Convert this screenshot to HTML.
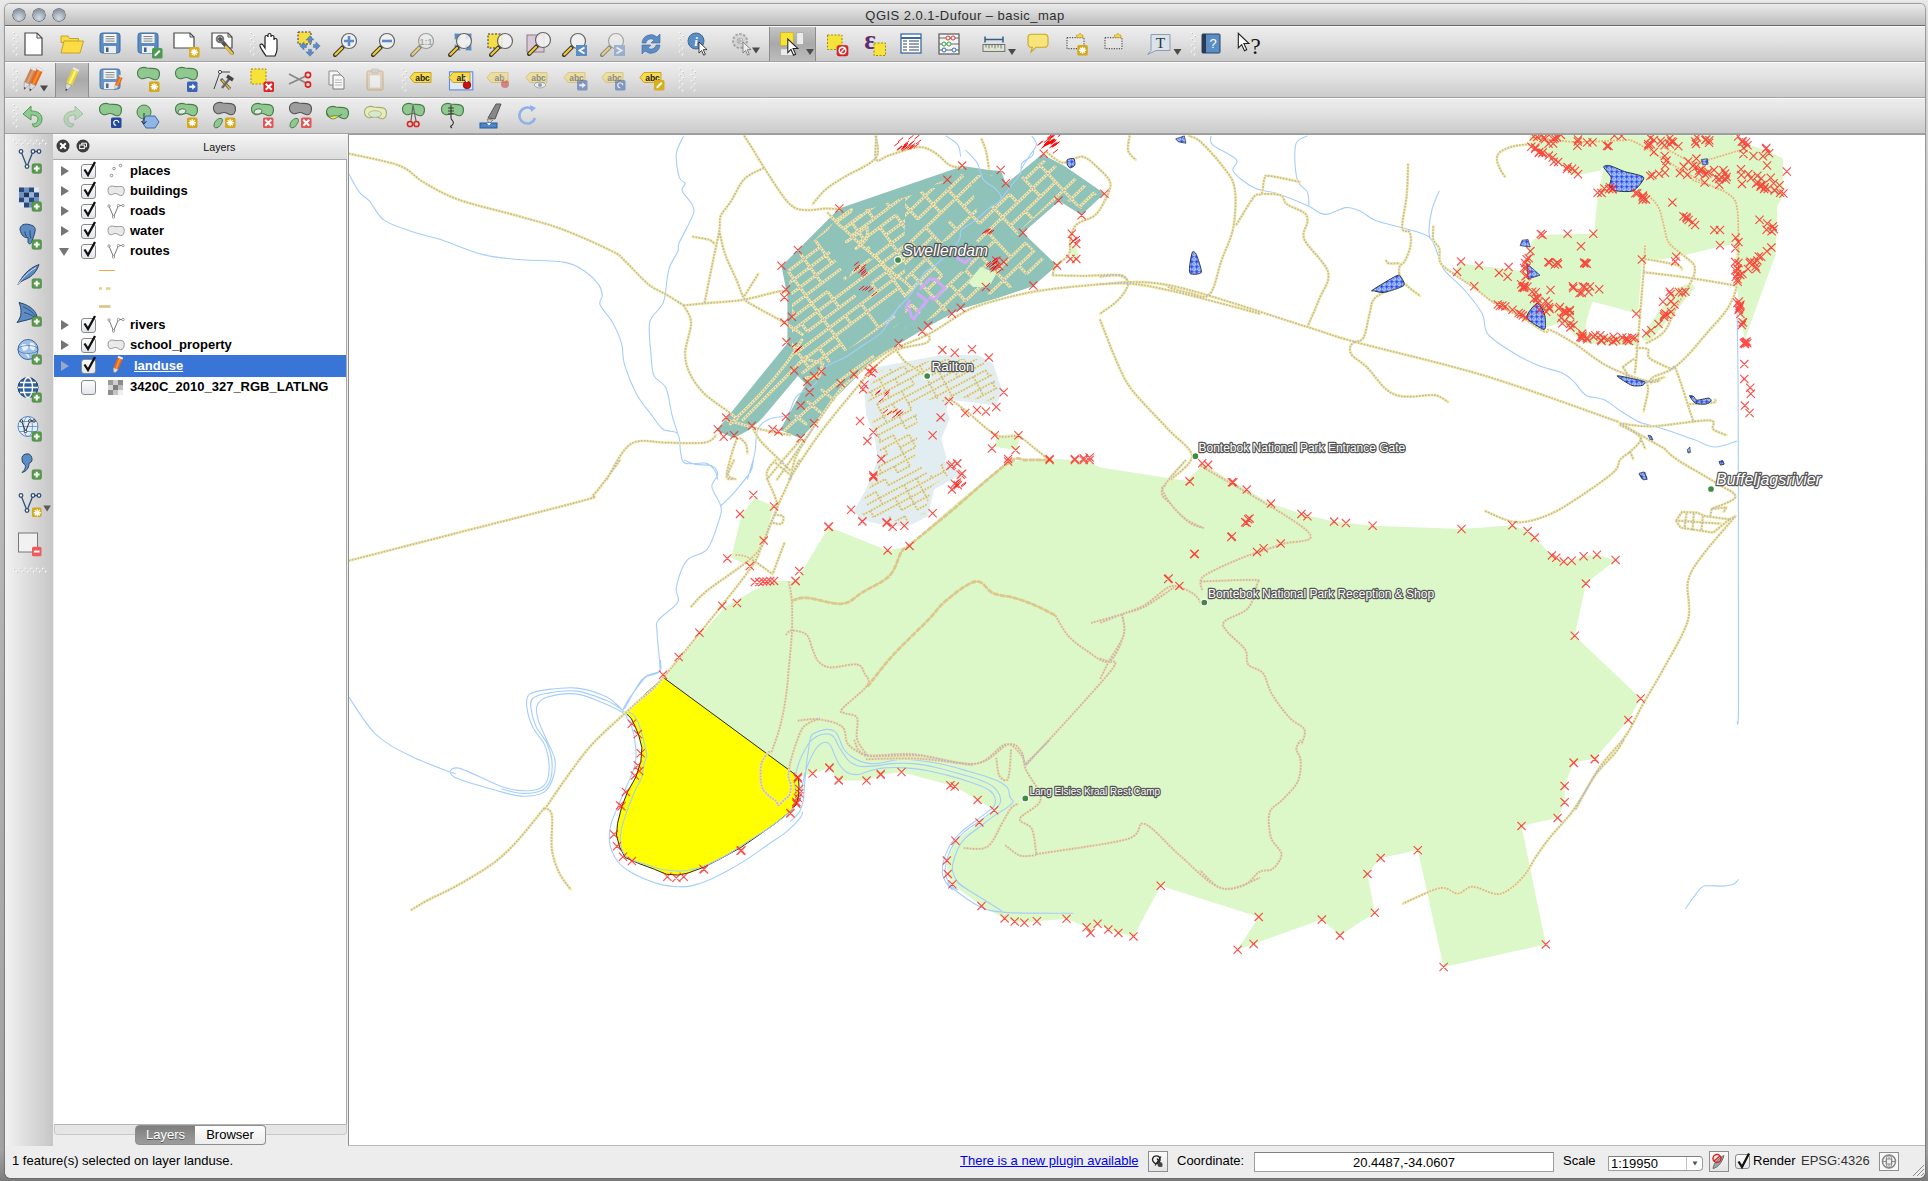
<!DOCTYPE html><html><head><meta charset="utf-8"><title>QGIS 2.0.1-Dufour - basic_map</title><style>
html,body{margin:0;padding:0}
body{width:1928px;height:1181px;overflow:hidden;position:relative;font-family:"Liberation Sans",sans-serif;font-size:13px;color:#000;
 background:linear-gradient(180deg,#e9e9e9 0,#dcdcdc 30px,#b4b4b4 600px,#a2a2a2 1150px,#8c8c8c 1170px,#7b7b7b 1181px)}
.a{position:absolute}
#win{left:5px;top:4px;width:1920px;height:1174px;border-radius:5px 5px 6px 6px;background:#ededed;box-shadow:0 0 1px 1px rgba(90,90,90,.55)}
#title{left:5px;top:4px;width:1920px;height:21px;border-radius:5px 5px 0 0;background:linear-gradient(#ebebeb,#d6d6d6 45%,#bcbcbc);border-bottom:1px solid #6a6a6a}
#title span{position:absolute;left:0;width:100%;text-align:center;top:4px;font-size:13px;color:#2e2e2e;letter-spacing:0.47px}
.tl{width:12px;height:12px;border-radius:50%;top:9px;background:radial-gradient(circle at 50% 75%,#d5dde4 0,#a9b4be 45%,#6e7a86 100%);box-shadow:0 0 0 0.7px #4d565f,0 1px 0 rgba(255,255,255,.5)}
.tb{left:5px;width:1920px;height:34px;background:linear-gradient(#ededed,#e2e2e2 40%,#cbcbcb);border-top:1px solid #fafafa;border-bottom:1px solid #a3a3a3}
.pressed{background:linear-gradient(#c4c4c4,#a9a9a9 50%,#bdbdbd);box-shadow:inset 1px 0 0 #8d8d8d,inset -1px 0 0 #8d8d8d}
#ltb{left:5px;top:134px;width:48px;height:1012px;background:linear-gradient(90deg,#f2f2f2,#dedede 45%,#c6c6c6)}
#lp{left:53px;top:134px;width:295px;height:1012px;background:#ededed}
#lph{left:53px;top:134px;width:294px;height:26px;background:linear-gradient(#f4f4f4,#dcdcdc);border-bottom:1px solid #aaa;border-top:1px solid #fbfbfb;box-sizing:border-box}
#lph span{position:absolute;left:150.300px;top:5.800px;font-size:10.700px;color:#111}
#tree{left:54px;top:160px;width:293px;height:964px;background:#fff;border-right:1px solid #a9a9a9;box-sizing:border-box}
.row{position:absolute;left:0;width:292px;height:20px;font-weight:bold;font-size:13px;line-height:20px}
.row span{position:absolute;left:76px;top:0;white-space:nowrap}
.cb{position:absolute;left:27px;top:3px;width:13px;height:13px;border:1px solid #8a8a8a;border-radius:3px;background:linear-gradient(#fdfdfd,#e3e6ea);box-sizing:content-box}
.tri{position:absolute;left:7px;top:5px;width:0;height:0;border-left:8px solid #757575;border-top:5px solid transparent;border-bottom:5px solid transparent}
.trid{position:absolute;left:5px;top:7px;width:0;height:0;border-top:8px solid #757575;border-left:5px solid transparent;border-right:5px solid transparent}
#tabbase{left:54px;top:1124px;width:293px;height:11px;background:#e5e5e5;border:1px solid #c9c9c9;border-top:1px solid #b5b5b5;border-radius:0 0 4px 4px;box-sizing:border-box}
.tab{top:1125px;height:20px;border:1px solid #8e8e8e;box-sizing:border-box;font-size:13px;line-height:18px;text-align:center}
#mapf{left:348px;top:134px;width:1577px;height:1012px;background:#fff;border-left:1px solid #8f8f8f;border-top:1px solid #9a9a9a;border-bottom:1px solid #b9b9b9;box-sizing:border-box}
#status{left:5px;top:1146px;width:1920px;height:32px;background:#ededed;border-radius:0 0 6px 6px}
.st{top:1153px;font-size:13px;line-height:16px;white-space:nowrap}
.fld{background:#fff;border:1px solid #9d9d9d;border-top-color:#7f7f7f;box-sizing:border-box}
.sbtn{border:1px solid #8e8e8e;background:linear-gradient(#fbfbfb,#e4e4e4);box-sizing:border-box}
svg{position:absolute;overflow:visible}
</style></head><body>
<div class="a" id="win"></div>
<div class="a" id="title"><span>QGIS 2.0.1-Dufour &#8211; basic_map</span></div>
<div class="a tl" style="left:13px"></div>
<div class="a tl" style="left:33px"></div>
<div class="a tl" style="left:53px"></div>
<div class="a tb" style="top:26px"></div>
<div class="a tb" style="top:62px"></div>
<div class="a tb" style="top:98px"></div>
<div class="a pressed" style="left:769px;top:27px;width:47px;height:34px"></div>
<div class="a pressed" style="left:55px;top:63px;width:34px;height:34px"></div>
<div class="a" id="ltb"></div><div class="a" id="lp"></div><div class="a" id="lph"><span>Layers</span></div>
<div class="a" id="tree">
<div class="row" style="top:1px"><i class="tri"></i><i class="cb"></i><svg style="left:26px;top:-2px" width="18" height="20"><path d="M4.500 10.500l3.500 5.500l7-13" fill="none" stroke="#111" stroke-width="2.300" stroke-linejoin="miter"/></svg><svg style="left:52px;top:1px" width="20" height="18"><g fill="#fff" stroke="#777" stroke-width="0.8"><circle cx="8" cy="6.5" r="1.3"/><circle cx="14.5" cy="3.5" r="1.3"/><circle cx="5.5" cy="13.5" r="1.3"/></g></svg><span>places</span></div>
<div class="row" style="top:21px"><i class="tri"></i><i class="cb"></i><svg style="left:26px;top:-2px" width="18" height="20"><path d="M4.500 10.500l3.500 5.500l7-13" fill="none" stroke="#111" stroke-width="2.300" stroke-linejoin="miter"/></svg><svg style="left:52px;top:1px" width="20" height="18"><path d="M2 8.500C2 4 5.500 3.500 9 4.500C12 5.300 14.500 3.500 17 5C19 6.500 18.500 12.500 16 13.500C13.500 14.500 12 11.500 9.500 11.500C7 11.500 6 13.500 4 12.500C2.500 11.700 2 10.500 2 8.500Z" fill="#e9e9e9" stroke="#8c8c8c" stroke-width="0.9"/></svg><span>buildings</span></div>
<div class="row" style="top:41px"><i class="tri"></i><i class="cb"></i><svg style="left:26px;top:-2px" width="18" height="20"><path d="M4.500 10.500l3.500 5.500l7-13" fill="none" stroke="#111" stroke-width="2.300" stroke-linejoin="miter"/></svg><svg style="left:52px;top:1px" width="20" height="18"><path d="M3 4l4.500 11l5-11.500h4.500" fill="none" stroke="#666" stroke-width="0.9"/><g fill="#fff" stroke="#777" stroke-width="0.7"><circle cx="3" cy="4" r="1.2"/><circle cx="7.500" cy="15" r="1.2"/><circle cx="12.500" cy="3.500" r="1.200"/><circle cx="17" cy="3.500" r="1.200"/></g></svg><span>roads</span></div>
<div class="row" style="top:61px"><i class="tri"></i><i class="cb"></i><svg style="left:26px;top:-2px" width="18" height="20"><path d="M4.500 10.500l3.500 5.500l7-13" fill="none" stroke="#111" stroke-width="2.300" stroke-linejoin="miter"/></svg><svg style="left:52px;top:1px" width="20" height="18"><path d="M2 8.500C2 4 5.500 3.500 9 4.500C12 5.300 14.500 3.500 17 5C19 6.500 18.500 12.500 16 13.500C13.500 14.500 12 11.500 9.500 11.500C7 11.500 6 13.500 4 12.500C2.500 11.700 2 10.500 2 8.500Z" fill="#e9e9e9" stroke="#8c8c8c" stroke-width="0.9"/></svg><span>water</span></div>
<div class="row" style="top:81px"><i class="trid"></i><i class="cb"></i><svg style="left:26px;top:-2px" width="18" height="20"><path d="M4.500 10.500l3.500 5.500l7-13" fill="none" stroke="#111" stroke-width="2.300" stroke-linejoin="miter"/></svg><svg style="left:52px;top:1px" width="20" height="18"><path d="M3 4l4.500 11l5-11.500h4.500" fill="none" stroke="#666" stroke-width="0.9"/><g fill="#fff" stroke="#777" stroke-width="0.7"><circle cx="3" cy="4" r="1.2"/><circle cx="7.500" cy="15" r="1.2"/><circle cx="12.500" cy="3.500" r="1.200"/><circle cx="17" cy="3.500" r="1.200"/></g></svg><span>routes</span></div>
<div class="row" style="top:155px"><i class="tri"></i><i class="cb"></i><svg style="left:26px;top:-2px" width="18" height="20"><path d="M4.500 10.500l3.500 5.500l7-13" fill="none" stroke="#111" stroke-width="2.300" stroke-linejoin="miter"/></svg><svg style="left:52px;top:1px" width="20" height="18"><path d="M3 4l4.500 11l5-11.500h4.500" fill="none" stroke="#666" stroke-width="0.9"/><g fill="#fff" stroke="#777" stroke-width="0.7"><circle cx="3" cy="4" r="1.2"/><circle cx="7.500" cy="15" r="1.2"/><circle cx="12.500" cy="3.500" r="1.200"/><circle cx="17" cy="3.500" r="1.200"/></g></svg><span>rivers</span></div>
<div class="row" style="top:175px"><i class="tri"></i><i class="cb"></i><svg style="left:26px;top:-2px" width="18" height="20"><path d="M4.500 10.500l3.500 5.500l7-13" fill="none" stroke="#111" stroke-width="2.300" stroke-linejoin="miter"/></svg><svg style="left:52px;top:1px" width="20" height="18"><path d="M2 8.500C2 4 5.500 3.500 9 4.500C12 5.300 14.500 3.500 17 5C19 6.500 18.500 12.500 16 13.500C13.500 14.500 12 11.500 9.500 11.500C7 11.500 6 13.500 4 12.500C2.500 11.700 2 10.500 2 8.500Z" fill="#e9e9e9" stroke="#8c8c8c" stroke-width="0.9"/></svg><span>school_property</span></div>
<svg style="left:0;top:0" width="293" height="160"><path d="M45 110.500h16" stroke="#f3a73c" stroke-width="1"/><path d="M45 128.500h3M52 128.500h4.500" stroke="#e4cf8a" stroke-width="2.400"/><path d="M45 146.500h11.500" stroke="#dcc486" stroke-width="2.600"/></svg>
<div class="row" style="top:195px;height:22px;background:#3875d7;color:#fff;line-height:21px"><i class="tri" style="top:6px;border-left-color:#97a9c9"></i><i class="cb" style="top:4px"></i><svg style="left:26px;top:-1px" width="18" height="20"><path d="M4.500 10.500l3.500 5.500l7-13" fill="none" stroke="#111" stroke-width="2.300"/></svg><svg style="left:54px;top:1px" width="18" height="20"><g transform="translate(9,10) rotate(22)"><rect x="-2.600" y="-9" width="5.200" height="12" fill="#e8642a"/><rect x="-0.800" y="-9" width="1.800" height="12" fill="#f59a1c"/><rect x="-2.600" y="-10" width="5.200" height="2" fill="#eee"/><path d="M-2.600 3l2.600 6l2.600-6z" fill="#e4d6c4"/><path d="M-0.900 7l0.900 2l0.900-2z" fill="#333"/></g></svg><span style="left:80px;text-decoration:underline">landuse</span></div>
<div class="row" style="top:217px"><i class="cb"></i><svg style="left:53px;top:2px" width="18" height="18"><rect x="1" y="1" width="5" height="5" fill="#9a9a9a"/><rect x="6" y="1" width="5" height="5" fill="#cfcfcf"/><rect x="11" y="1" width="5" height="5" fill="#8a8a8a"/><rect x="1" y="6" width="5" height="5" fill="#d5d5d5"/><rect x="6" y="6" width="5" height="5" fill="#7e7e7e"/><rect x="11" y="6" width="5" height="5" fill="#bdbdbd"/><rect x="1" y="11" width="5" height="5" fill="#8e8e8e"/><rect x="6" y="11" width="5" height="5" fill="#c4c4c4"/><rect x="11" y="11" width="5" height="5" fill="#efefef"/></svg><span>3420C_2010_327_RGB_LATLNG</span></div>
</div>
<div class="a" id="tabbase"></div>
<div class="a tab" style="left:135px;width:61px;border-radius:4px 0 0 4px;background:linear-gradient(#7d7d7d,#8e8e8e 50%,#9c9c9c);color:#fff;text-shadow:0 1px 0 #555">Layers</div>
<div class="a tab" style="left:195px;width:71px;border-radius:0 4px 4px 0;background:linear-gradient(#fefefe,#ececec);border-left:none;color:#000">Browser</div>
<div class="a" id="mapf"></div>
<svg class="a" style="left:0;top:0" width="1928" height="1181" font-family="Liberation Sans, sans-serif"><defs><clipPath id="mc"><rect x="349" y="135" width="1575.500" height="1010.500"/></clipPath><pattern id="hatch" width="5" height="5" patternUnits="userSpaceOnUse"><rect width="5" height="5" fill="#a4caf8"/><rect x="0.400" y="0.400" width="2.400" height="2.400" fill="#2a3cf2"/><rect x="3.400" y="0.900" width="1" height="1.400" fill="#2a3cf2"/><rect x="0.900" y="3.400" width="1.400" height="1" fill="#2a3cf2"/><rect x="3.400" y="3.400" width="1" height="1" fill="#2a3cf2"/></pattern><clipPath id="g0"><path d="M842 214L905 196L905 318L866 352L845 368L815 385L800 372L792 345L792 296L786 268L800 254Z"/></clipPath><clipPath id="g1"><path d="M905 196L960 174L998 176L1004 192L1043 160L1062 169L1097 194L1081 209L1060 196L1017 233L1050 265L1030 281L996 293L960 303L928 320L905 333Z"/></clipPath><clipPath id="gr"><path d="M880 371L940 359L977 359L990 367L998 390L993 401L946 396L934 455L953 472L932 486L925 513L906 522L879 519L862 515L858 509L869 490L881 460L878 437L869 413L868 389Z"/></clipPath></defs><g clip-path="url(#mc)"><path d="M877.8 367L940 355.2L978.5 355.2L993.3 364L1002.2 390.7L996.3 405.6L948.9 399.6L937 455.9L957.8 470.7L960.7 474.8L934 489.6L928 516.3L907.4 526.7L877.8 523.7L860 519.3L854 510.4L866 489.6L877.8 460L874.8 438L866 414.4L864.4 387.8Z" fill="#e1edf0"/><path d="M663 678L725.2 606.7L753.3 590.4L775.6 580.9L796.3 580.9L828.6 527L887.6 550.4L909.5 545.9L935 522L960 500L1008 461.5L1050 458.5L1088 461L1100 467.4L1186 480.7L1203.7 464.4L1233 482L1246.7 489.6L1271 503.6L1301.5 513.9L1334 521.6L1372.6 525.8L1461.5 529L1512.4 525.2L1527.6 531.1L1534.7 537.6L1551.9 555.4L1563.7 561.6L1571.7 560.7L1583.6 556.3L1596.9 554.8L1615.6 559.9L1585.9 583.6L1574.7 635.7L1640.7 698.5L1628.3 719.9L1594.8 758.7L1573.5 762.8L1564.6 785.9L1564.6 802.2L1557.6 817.9L1521.5 825.9L1545.8 944.4L1443.6 967L1417.8 850.2L1380.7 857.9L1367.4 873.9L1374.8 912.7L1339.9 935.6L1321.8 919.6L1253.6 943.9L1237.6 949.8L1258.7 916.9L1160.7 885.8L1133.5 936.4L1118.4 932.9L1108.3 929.6L1097.6 923.7L1090.5 932.9L1086.7 927.3L1066.5 918.7L1036.9 921.3L1024.4 922.8L1014.7 921.6L1004.6 918.4L981.5 905.9L952.4 884.3L947.7 873.9L946.8 860.6L955.4 840.7L979.4 822.4L994.2 810.2L977.6 799.9L954.8 786.5L950.4 785.3L901.5 772L880.7 774.7L866.5 780.6L838.7 780.6L829.5 768.1L812.6 773.5L797.8 777L789 770Z" fill="#dcf7c8"/><path d="M754.8 497.9L774.1 506.5L759.3 557.8L748.9 565.2L731.1 557.8L741.5 514.8Z" fill="#dcf7c8"/><path d="M996.3 435.2L1020 433.7L1017 450L994.8 447Z" fill="#dcf7c8"/><path d="M1070.4 247L1076.9 246.1L1078.7 260.4L1071.9 261.9Z" fill="#dcf7c8"/><path d="M1529.5 135.3L1733.3 135.3L1744.8 143.3L1767.6 151L1782.9 158.6L1782.9 196.7L1777.1 206.2L1777.1 225.2L1775.2 255.7L1761.9 291.9L1744.8 339.5L1740 316.7L1737.1 288.1L1735.2 244.3L1720 246.6L1676.2 257.2L1644.8 261.4L1641.9 261.4L1638.1 313.8L1592.4 301.4L1586.7 320.5L1584.8 331.9L1611.4 336.7L1636.2 335.7L1640 345.2L1611.4 345.2L1584.8 343.3L1573.3 334.8L1563.8 322.4L1542.9 328.1L1525.7 317.6L1502.9 307.1L1472.4 286.2L1455.2 271.9L1459 263.3L1521.9 271L1525.7 263.3L1529.5 248.1L1533.3 239.5L1546.7 234.8L1592.4 233.8L1594.3 231L1598.1 192.9L1603.8 168.1L1598.1 171L1573.3 175.7L1558.1 163.3L1539 152.9L1529.5 146.2Z" fill="#dcf7c8"/><path d="M1676.2 288.1L1691.4 282.4L1695.2 288.1L1649.5 341.4L1641.9 339.5L1645.7 330Z" fill="#dcf7c8"/><path d="M839 208.5L963 166L989 170L1001 171L1006 184L1042 154.3L1063.7 165.4L1104.4 193.5L1081.5 215L1059.3 201L1023 232.8L1057 265.4L1033.3 286L998 298L960.7 309L928 326.6L898.5 344.3L866 366L839.3 388L814 424.3L800.7 438.6L780 430L806 384L797.8 376L760.7 420L749 430L734 438L716.3 430.7L787.4 343.3L787.4 296L781.5 266.3L797.8 250Z" fill="#8fc2b8"/><path d="M663.3 677.5L795.7 774.9L798.6 778.8L799 786.6L798.6 796.3L795.7 805.1L789.8 811.9L775.2 823.6L755.8 837.2L740.2 847.9L720.7 858.6L703.2 867.4L687.6 873.2L677.9 875.1L666.2 874.2L654.5 869.3L638.9 863.5L625.3 857.6L619.5 846.9L616.5 835.2L617.5 823.6L621.4 808L627.3 792.4L636 776.8L640.9 761.2L641.9 747.6L638.9 735.9L635 726.2L631.2 718.4L625.3 712.6Z" fill="#ffff00" stroke="#111" stroke-width="0.9"/><g clip-path="url(#g0)"><path d="M661.2 266.6L741.1 206.4M773.1 182.3L884.9 98M667.1 274.7L778.9 190.4M794.9 178.4L842.8 142.2M858.8 130.2L890.8 106.1M673 282.8L816.8 174.4M848.7 150.3L896.7 114.2M678.9 290.8L902.5 122.3M684.8 298.9L828.5 190.6M844.5 178.6L876.5 154.5M892.4 142.4L908.4 130.4M690.6 307L770.5 246.8M786.5 234.8L802.5 222.8M818.4 210.7L914.3 138.5M696.5 315.1L712.5 303.1M728.5 291L744.4 279M760.4 267L824.3 218.8M840.3 206.8L920.2 146.6M702.4 323.2L926 154.7M708.3 331.3L724.2 319.3M740.2 307.2L772.2 283.1M788.1 271.1L820.1 247M836.1 235L931.9 162.8M746.1 315.3L937.8 170.9M720 347.5L736 335.4M752 323.4L895.8 215.1M911.7 203L943.7 178.9M725.9 355.6L869.7 247.2M885.7 235.2L949.6 187M731.8 363.7L827.6 291.4M843.6 279.4L955.4 195.1M737.7 371.8L769.6 347.7M785.6 335.6L961.3 203.2M743.5 379.8L791.5 343.7M807.4 331.7L855.4 295.6M871.3 283.5L967.2 211.3M765.4 375.9L973.1 219.4M755.3 396L899.1 287.7M915.1 275.7L947 251.6M963 239.5L979 227.5M761.2 404.1L841.1 343.9M920.9 283.7L952.9 259.7M968.9 247.6L984.8 235.6M767.1 412.2L894.9 315.9M910.8 303.9L958.8 267.8M974.7 255.7L990.7 243.7M772.9 420.3L996.6 251.8M778.8 428.4L810.8 404.3M826.7 392.3L970.5 283.9M986.5 271.9L1002.5 259.9M784.7 436.5L880.5 364.3M896.5 352.2L912.5 340.2M944.4 316.1L960.4 304.1M790.6 444.6L822.5 420.5M838.5 408.5L854.5 396.4M870.5 384.4L966.3 312.2M982.3 300.1L1014.2 276M796.5 452.7L812.4 440.6M828.4 428.6L860.4 404.5M876.3 392.5L1020.1 284.1M802.3 460.8L866.2 412.6M882.2 400.6L1026 292.2M808.2 468.9L856.1 432.7M888.1 408.7L1031.9 300.3M814.1 476.9L989.8 344.5M1005.8 332.5L1037.7 308.4M667.1 274.7L684.8 298.9M690.6 307L772.9 420.3M784.7 436.5L808.2 468.9M694.9 278.8L712.5 303.1M718.4 311.2L741.9 343.5M753.6 359.7L783 400.2M788.9 408.3L806.6 432.5M812.4 440.6L830.1 464.9M693.2 242.5L699.1 250.6M705 258.7L716.7 274.9M722.6 283L734.3 299.1M740.2 307.2L787.3 372M793.1 380L816.6 412.4M822.5 420.5L846 452.9M709.2 230.5L715 238.5M720.9 246.6L732.7 262.8M738.6 270.9L750.3 287.1M756.2 295.2L762.1 303.3M768 311.4L809.1 368M820.9 384.2L850.3 424.6M856.1 432.7L862 440.8M725.1 218.4L731 226.5M736.9 234.6L742.8 242.7M748.7 250.8L795.7 315.5M801.6 323.6L807.4 331.7M819.2 347.9L831 364.1M842.7 380.2L872.1 420.7M741.1 206.4L747 214.5M752.9 222.6L764.6 238.7M776.4 254.9L782.3 263M788.1 271.1L870.5 384.4M876.3 392.5L894 416.8M757.1 194.3L768.9 210.5M774.7 218.6L780.6 226.7M786.5 234.8L821.8 283.3M827.6 291.4L839.4 307.6M845.3 315.7L851.2 323.8M862.9 340L892.3 380.4M898.2 388.5L909.9 404.7M773.1 182.3L831.9 263.2M861.3 303.7L914.2 376.5M920 384.6L925.9 392.7M789 170.3L818.4 210.7M836.1 235L842 243.1M847.8 251.2L853.7 259.3M871.3 283.5L877.2 291.6M900.7 324L906.6 332.1M918.4 348.3L936 372.5M805 158.2L816.8 174.4M822.7 182.5L828.5 190.6M840.3 206.8L846.2 214.9M852 223L863.8 239.1M875.6 255.3L910.8 303.9M922.6 320.1L940.2 344.3M946.1 352.4L957.9 368.6M821 146.2L826.9 154.3M862.1 202.8L873.9 219M879.8 227.1L909.2 267.6M915.1 275.7L932.7 299.9M938.6 308L950.3 324.2M956.2 332.3L973.8 356.6M837 134.2L842.8 142.2M848.7 150.3L889.9 207M895.8 215.1L907.5 231.2M919.3 247.4L948.7 287.9M954.5 296L960.4 304.1M966.3 312.2L983.9 336.4M858.8 130.2L911.7 203M917.6 211.1L929.4 227.3M935.2 235.4L941.1 243.5M952.9 259.7L958.8 267.8M976.4 292L988.2 308.2M999.9 324.4L1005.8 332.5M874.8 118.2L910.1 166.7M927.7 191L933.6 199.1M945.3 215.3L951.2 223.4M957.1 231.4L963 239.5M968.9 247.6L974.7 255.7M980.6 263.8L1021.8 320.5M884.9 98L890.8 106.1M896.7 114.2L914.3 138.5M920.2 146.6L937.8 170.9M943.7 178.9L955.4 195.1M961.3 203.2L990.7 243.7M996.6 251.8L1020.1 284.1" fill="none" stroke="#fbee96" stroke-width="2.8"/><path d="M661.2 266.6L741.1 206.4M773.1 182.3L884.9 98M667.1 274.7L778.9 190.4M794.9 178.4L842.8 142.2M858.8 130.2L890.8 106.1M673 282.8L816.8 174.4M848.7 150.3L896.7 114.2M678.9 290.8L902.5 122.3M684.8 298.9L828.5 190.6M844.5 178.6L876.5 154.5M892.4 142.4L908.4 130.4M690.6 307L770.5 246.8M786.5 234.8L802.5 222.8M818.4 210.7L914.3 138.5M696.5 315.1L712.5 303.1M728.5 291L744.4 279M760.4 267L824.3 218.8M840.3 206.8L920.2 146.6M702.4 323.2L926 154.7M708.3 331.3L724.2 319.3M740.2 307.2L772.2 283.1M788.1 271.1L820.1 247M836.1 235L931.9 162.8M746.1 315.3L937.8 170.9M720 347.5L736 335.4M752 323.4L895.8 215.1M911.7 203L943.7 178.9M725.9 355.6L869.7 247.2M885.7 235.2L949.6 187M731.8 363.7L827.6 291.4M843.6 279.4L955.4 195.1M737.7 371.8L769.6 347.7M785.6 335.6L961.3 203.2M743.5 379.8L791.5 343.7M807.4 331.7L855.4 295.6M871.3 283.5L967.2 211.3M765.4 375.9L973.1 219.4M755.3 396L899.1 287.7M915.1 275.7L947 251.6M963 239.5L979 227.5M761.2 404.1L841.1 343.9M920.9 283.7L952.9 259.7M968.9 247.6L984.8 235.6M767.1 412.2L894.9 315.9M910.8 303.9L958.8 267.8M974.7 255.7L990.7 243.7M772.9 420.3L996.6 251.8M778.8 428.4L810.8 404.3M826.7 392.3L970.5 283.9M986.5 271.9L1002.5 259.9M784.7 436.5L880.5 364.3M896.5 352.2L912.5 340.2M944.4 316.1L960.4 304.1M790.6 444.6L822.5 420.5M838.5 408.5L854.5 396.4M870.5 384.4L966.3 312.2M982.3 300.1L1014.2 276M796.5 452.7L812.4 440.6M828.4 428.6L860.4 404.5M876.3 392.5L1020.1 284.1M802.3 460.8L866.2 412.6M882.2 400.6L1026 292.2M808.2 468.9L856.1 432.7M888.1 408.7L1031.9 300.3M814.1 476.9L989.8 344.5M1005.8 332.5L1037.7 308.4M667.1 274.7L684.8 298.9M690.6 307L772.9 420.3M784.7 436.5L808.2 468.9M694.9 278.8L712.5 303.1M718.4 311.2L741.9 343.5M753.6 359.7L783 400.2M788.9 408.3L806.6 432.5M812.4 440.6L830.1 464.9M693.2 242.5L699.1 250.6M705 258.7L716.7 274.9M722.6 283L734.3 299.1M740.2 307.2L787.3 372M793.1 380L816.6 412.4M822.5 420.5L846 452.9M709.2 230.5L715 238.5M720.9 246.6L732.7 262.8M738.6 270.9L750.3 287.1M756.2 295.2L762.1 303.3M768 311.4L809.1 368M820.9 384.2L850.3 424.6M856.1 432.7L862 440.8M725.1 218.4L731 226.5M736.9 234.6L742.8 242.7M748.7 250.8L795.7 315.5M801.6 323.6L807.4 331.7M819.2 347.9L831 364.1M842.7 380.2L872.1 420.7M741.1 206.4L747 214.5M752.9 222.6L764.6 238.7M776.4 254.9L782.3 263M788.1 271.1L870.5 384.4M876.3 392.5L894 416.8M757.1 194.3L768.9 210.5M774.7 218.6L780.6 226.7M786.5 234.8L821.8 283.3M827.6 291.4L839.4 307.6M845.3 315.7L851.2 323.8M862.9 340L892.3 380.4M898.2 388.5L909.9 404.7M773.1 182.3L831.9 263.2M861.3 303.7L914.2 376.5M920 384.6L925.9 392.7M789 170.3L818.4 210.7M836.1 235L842 243.1M847.8 251.2L853.7 259.3M871.3 283.5L877.2 291.6M900.7 324L906.6 332.1M918.4 348.3L936 372.5M805 158.2L816.8 174.4M822.7 182.5L828.5 190.6M840.3 206.8L846.2 214.9M852 223L863.8 239.1M875.6 255.3L910.8 303.9M922.6 320.1L940.2 344.3M946.1 352.4L957.9 368.6M821 146.2L826.9 154.3M862.1 202.8L873.9 219M879.8 227.1L909.2 267.6M915.1 275.7L932.7 299.9M938.6 308L950.3 324.2M956.2 332.3L973.8 356.6M837 134.2L842.8 142.2M848.7 150.3L889.9 207M895.8 215.1L907.5 231.2M919.3 247.4L948.7 287.9M954.5 296L960.4 304.1M966.3 312.2L983.9 336.4M858.8 130.2L911.7 203M917.6 211.1L929.4 227.3M935.2 235.4L941.1 243.5M952.9 259.7L958.8 267.8M976.4 292L988.2 308.2M999.9 324.4L1005.8 332.5M874.8 118.2L910.1 166.7M927.7 191L933.6 199.1M945.3 215.3L951.2 223.4M957.1 231.4L963 239.5M968.9 247.6L974.7 255.7M980.6 263.8L1021.8 320.5M884.9 98L890.8 106.1M896.7 114.2L914.3 138.5M920.2 146.6L937.8 170.9M943.7 178.9L955.4 195.1M961.3 203.2L990.7 243.7M996.6 251.8L1020.1 284.1" fill="none" stroke="#b8b8c8" stroke-width="1.7" stroke-dasharray="1.7 1.3"/></g><g clip-path="url(#g1)"><path d="M780.2 256.1L795.3 241.5M810.4 226.9L840.6 197.7M855.7 183.1L976.6 66.4M991.7 51.8L1021.9 22.6M788 264.5L924 133.2M939.1 118.6L1014.7 45.6M795.9 272.9L1022.5 54M818.8 266.7L1045.5 47.9M811.6 289.7L826.7 275.1M856.9 245.9L962.7 143.8M977.8 129.2L1053.3 56.3M834.5 283.5L985.6 137.6M1000.7 123L1046.1 79.3M842.4 291.9L902.8 233.6M917.9 219L963.2 175.2M993.5 146L1023.7 116.9M1053.9 87.7L1069 73.1M835.1 314.9L865.3 285.8M880.4 271.2L986.2 169M1001.3 154.5L1076.8 81.5M858.1 308.8L933.6 235.8M963.8 206.6L1084.7 89.9M850.8 331.8L865.9 317.2M881 302.6L1092.5 98.3M858.6 340.2L873.8 325.6M888.9 311L934.2 267.2M949.3 252.6L964.4 238M979.5 223.5L1009.7 194.3M1024.8 179.7L1100.4 106.7M866.5 348.6L881.6 334M896.7 319.4L911.8 304.8M926.9 290.2L942 275.6M957.1 261.1L1108.2 115.1M874.3 357L904.6 327.8M934.8 298.6L995.2 240.3M1010.3 225.7L1055.6 181.9M1070.7 167.3L1101 138.2M882.2 365.4L987.9 263.3M1018.2 234.1L1108.8 146.6M890 373.8L1026 242.5M1041.1 227.9L1116.6 155M897.9 382.2L973.4 309.3M988.5 294.7L1139.6 148.8M905.7 390.6L1011.5 288.5M1026.6 273.9L1071.9 230.2M1117.2 186.4L1147.4 157.2M913.6 399.1L989.1 326.1M1004.2 311.5L1094.9 224M1125.1 194.8L1155.3 165.6M921.4 407.5L1072.5 261.6M1087.6 247L1163.1 174M929.2 415.9L1171 182.4M937.1 424.3L952.2 409.7M967.3 395.1L1088.2 278.4M1103.3 263.8L1178.8 190.9M960 418.1L1035.6 345.2M1050.7 330.6L1186.7 199.3M952.8 441.1L983 411.9M1013.2 382.8L1028.3 368.2M1058.5 339L1194.5 207.7M960.6 449.5L1081.5 332.8M1096.6 318.2L1202.4 216.1M968.5 457.9L998.7 428.8M1013.8 414.2L1028.9 399.6M1044 385L1210.2 224.5M976.3 466.4L1097.2 349.6M1112.3 335L1202.9 247.5M984.2 474.8L1225.9 241.3M780.2 256.1L795.9 272.9M803.7 281.3L835.1 314.9M858.6 340.2L882.2 365.4M890 373.8L913.6 399.1M921.4 407.5L944.9 432.7M952.8 441.1L960.6 449.5M968.5 457.9L976.3 466.4M795.3 241.5L850.2 300.4M858.1 308.8L928.7 384.5M944.4 401.3L960 418.1M967.9 426.5L999.3 460.2M810.4 226.9L826.1 243.7M834 252.1L841.8 260.5M857.5 277.4L873.2 294.2M881 302.6L888.9 311M896.7 319.4L904.6 327.8M928.1 353.1L959.5 386.7M967.3 395.1L990.8 420.4M1006.5 437.2L1014.4 445.6M833.4 220.7L872.6 262.8M880.4 271.2L888.3 279.6M896.1 288L904 296.4M911.8 304.8L919.7 313.2M943.2 338.5L990.3 388.9M1005.9 405.8L1029.5 431M840.6 197.7L848.5 206.1M856.3 214.5L887.7 248.2M911.2 273.4L966.1 332.3M997.5 365.9L1005.4 374.3M1013.2 382.8L1044.6 416.4M855.7 183.1L863.6 191.5M871.4 199.9L887.1 216.8M910.7 242L942 275.6M949.9 284.1L973.4 309.3M981.3 317.7L1012.6 351.3M1028.3 368.2L1051.9 393.4M870.9 168.5L917.9 219M925.8 227.4L957.1 261.1M965 269.5L980.7 286.3M1004.2 311.5L1035.6 345.2M1043.4 353.6L1074.8 387.2M886 153.9L893.8 162.3M901.7 170.8L940.9 212.8M948.7 221.2L956.6 229.6M964.4 238L987.9 263.3M995.8 271.7L1011.5 288.5M1019.3 296.9L1035 313.8M1042.8 322.2L1074.2 355.8M901.1 139.3L916.8 156.2M924.6 164.6L979.5 223.5M987.4 231.9L1010.9 257.1M1018.7 265.5L1026.6 273.9M1034.4 282.3L1081.5 332.8M1089.3 341.2L1105 358M916.2 124.7L924 133.2M939.7 150L963.2 175.2M971.1 183.6L1018.2 234.1M1026 242.5L1033.8 250.9M1049.5 267.8L1073.1 293M1080.9 301.4L1088.8 309.8M1096.6 318.2L1104.4 326.6M1112.3 335L1120.1 343.5M939.1 118.6L1001.9 185.9M1009.7 194.3L1017.6 202.7M1025.4 211.1L1064.6 253.2M1072.5 261.6L1135.2 328.9M946.4 95.6L962.1 112.4M969.9 120.8L1040.5 196.5M1056.2 213.3L1064.1 221.7M1079.7 238.6L1087.6 247M1095.4 255.4L1111.1 272.2M1126.8 289L1142.5 305.9M961.5 81L985 106.2M992.9 114.6L1000.7 123M1024.3 148.3L1087 215.6M1094.9 224L1157.6 291.3M976.6 66.4L984.5 74.8M1000.1 91.6L1008 100M1015.8 108.4L1086.4 184.2M1094.3 192.6L1180.6 285.1M991.7 51.8L1007.4 68.6M1015.3 77L1038.8 102.3M1054.5 119.1L1101.5 169.6M1109.4 178L1117.2 186.4M1125.1 194.8L1164.3 236.9M1172.1 245.3L1180 253.7M1187.8 262.1L1195.7 270.5M1006.8 37.2L1124.5 163.4M1132.3 171.8L1140.2 180.2M1148 188.6L1155.9 197M1171.6 213.9L1195.1 239.1M1202.9 247.5L1210.8 255.9M1021.9 22.6L1029.8 31M1037.6 39.4L1061.2 64.7M1084.7 89.9L1108.2 115.1M1116.1 123.6L1123.9 132M1131.8 140.4L1139.6 148.8M1163.1 174L1171 182.4M1186.7 199.3L1225.9 241.3" fill="none" stroke="#fbee96" stroke-width="2.8"/><path d="M780.2 256.1L795.3 241.5M810.4 226.9L840.6 197.7M855.7 183.1L976.6 66.4M991.7 51.8L1021.9 22.6M788 264.5L924 133.2M939.1 118.6L1014.7 45.6M795.9 272.9L1022.5 54M818.8 266.7L1045.5 47.9M811.6 289.7L826.7 275.1M856.9 245.9L962.7 143.8M977.8 129.2L1053.3 56.3M834.5 283.5L985.6 137.6M1000.7 123L1046.1 79.3M842.4 291.9L902.8 233.6M917.9 219L963.2 175.2M993.5 146L1023.7 116.9M1053.9 87.7L1069 73.1M835.1 314.9L865.3 285.8M880.4 271.2L986.2 169M1001.3 154.5L1076.8 81.5M858.1 308.8L933.6 235.8M963.8 206.6L1084.7 89.9M850.8 331.8L865.9 317.2M881 302.6L1092.5 98.3M858.6 340.2L873.8 325.6M888.9 311L934.2 267.2M949.3 252.6L964.4 238M979.5 223.5L1009.7 194.3M1024.8 179.7L1100.4 106.7M866.5 348.6L881.6 334M896.7 319.4L911.8 304.8M926.9 290.2L942 275.6M957.1 261.1L1108.2 115.1M874.3 357L904.6 327.8M934.8 298.6L995.2 240.3M1010.3 225.7L1055.6 181.9M1070.7 167.3L1101 138.2M882.2 365.4L987.9 263.3M1018.2 234.1L1108.8 146.6M890 373.8L1026 242.5M1041.1 227.9L1116.6 155M897.9 382.2L973.4 309.3M988.5 294.7L1139.6 148.8M905.7 390.6L1011.5 288.5M1026.6 273.9L1071.9 230.2M1117.2 186.4L1147.4 157.2M913.6 399.1L989.1 326.1M1004.2 311.5L1094.9 224M1125.1 194.8L1155.3 165.6M921.4 407.5L1072.5 261.6M1087.6 247L1163.1 174M929.2 415.9L1171 182.4M937.1 424.3L952.2 409.7M967.3 395.1L1088.2 278.4M1103.3 263.8L1178.8 190.9M960 418.1L1035.6 345.2M1050.7 330.6L1186.7 199.3M952.8 441.1L983 411.9M1013.2 382.8L1028.3 368.2M1058.5 339L1194.5 207.7M960.6 449.5L1081.5 332.8M1096.6 318.2L1202.4 216.1M968.5 457.9L998.7 428.8M1013.8 414.2L1028.9 399.6M1044 385L1210.2 224.5M976.3 466.4L1097.2 349.6M1112.3 335L1202.9 247.5M984.2 474.8L1225.9 241.3M780.2 256.1L795.9 272.9M803.7 281.3L835.1 314.9M858.6 340.2L882.2 365.4M890 373.8L913.6 399.1M921.4 407.5L944.9 432.7M952.8 441.1L960.6 449.5M968.5 457.9L976.3 466.4M795.3 241.5L850.2 300.4M858.1 308.8L928.7 384.5M944.4 401.3L960 418.1M967.9 426.5L999.3 460.2M810.4 226.9L826.1 243.7M834 252.1L841.8 260.5M857.5 277.4L873.2 294.2M881 302.6L888.9 311M896.7 319.4L904.6 327.8M928.1 353.1L959.5 386.7M967.3 395.1L990.8 420.4M1006.5 437.2L1014.4 445.6M833.4 220.7L872.6 262.8M880.4 271.2L888.3 279.6M896.1 288L904 296.4M911.8 304.8L919.7 313.2M943.2 338.5L990.3 388.9M1005.9 405.8L1029.5 431M840.6 197.7L848.5 206.1M856.3 214.5L887.7 248.2M911.2 273.4L966.1 332.3M997.5 365.9L1005.4 374.3M1013.2 382.8L1044.6 416.4M855.7 183.1L863.6 191.5M871.4 199.9L887.1 216.8M910.7 242L942 275.6M949.9 284.1L973.4 309.3M981.3 317.7L1012.6 351.3M1028.3 368.2L1051.9 393.4M870.9 168.5L917.9 219M925.8 227.4L957.1 261.1M965 269.5L980.7 286.3M1004.2 311.5L1035.6 345.2M1043.4 353.6L1074.8 387.2M886 153.9L893.8 162.3M901.7 170.8L940.9 212.8M948.7 221.2L956.6 229.6M964.4 238L987.9 263.3M995.8 271.7L1011.5 288.5M1019.3 296.9L1035 313.8M1042.8 322.2L1074.2 355.8M901.1 139.3L916.8 156.2M924.6 164.6L979.5 223.5M987.4 231.9L1010.9 257.1M1018.7 265.5L1026.6 273.9M1034.4 282.3L1081.5 332.8M1089.3 341.2L1105 358M916.2 124.7L924 133.2M939.7 150L963.2 175.2M971.1 183.6L1018.2 234.1M1026 242.5L1033.8 250.9M1049.5 267.8L1073.1 293M1080.9 301.4L1088.8 309.8M1096.6 318.2L1104.4 326.6M1112.3 335L1120.1 343.5M939.1 118.6L1001.9 185.9M1009.7 194.3L1017.6 202.7M1025.4 211.1L1064.6 253.2M1072.5 261.6L1135.2 328.9M946.4 95.6L962.1 112.4M969.9 120.8L1040.5 196.5M1056.2 213.3L1064.1 221.7M1079.7 238.6L1087.6 247M1095.4 255.4L1111.1 272.2M1126.8 289L1142.5 305.9M961.5 81L985 106.2M992.9 114.6L1000.7 123M1024.3 148.3L1087 215.6M1094.9 224L1157.6 291.3M976.6 66.4L984.5 74.8M1000.1 91.6L1008 100M1015.8 108.4L1086.4 184.2M1094.3 192.6L1180.6 285.1M991.7 51.8L1007.4 68.6M1015.3 77L1038.8 102.3M1054.5 119.1L1101.5 169.6M1109.4 178L1117.2 186.4M1125.1 194.8L1164.3 236.9M1172.1 245.3L1180 253.7M1187.8 262.1L1195.7 270.5M1006.8 37.2L1124.5 163.4M1132.3 171.8L1140.2 180.2M1148 188.6L1155.9 197M1171.6 213.9L1195.1 239.1M1202.9 247.5L1210.8 255.9M1021.9 22.6L1029.8 31M1037.6 39.4L1061.2 64.7M1084.7 89.9L1108.2 115.1M1116.1 123.6L1123.9 132M1131.8 140.4L1139.6 148.8M1163.1 174L1171 182.4M1186.7 199.3L1225.9 241.3" fill="none" stroke="#b8b8c8" stroke-width="1.7" stroke-dasharray="1.7 1.3"/></g><path d="M821.9 240.4L835.2 219.6L873.7 258.9L858.9 256.7L853 268.5L847.8 278.9Z" fill="#8fc2b8"/><path d="M839.6 209.3L946.3 181.9L948.5 189.3L933 187.8L870.7 208.5L850 212.2Z" fill="#8fc2b8"/><path d="M971.5 184.1L1001.1 172.2L1007 187L992.2 206.3L977.4 212.2Z" fill="#8fc2b8"/><path d="M820.3 369.8L837.6 355.4L866.3 338.1L886.5 323.7L900.9 332.4L883.6 352.5L860.6 372.7L837.6 395.7L814.5 424.5L800.1 427.3L808.8 401.4L814.5 384.2Z" fill="#8fc2b8"/><path d="M941.2 243.2L964.2 231.7L981.4 246L964.2 271.9L946.9 269.1Z" fill="#8fc2b8"/><g clip-path="url(#gr)"><path d="M745.2 395L819.4 355.5M831.8 349L881.2 322.7M893.6 316.1L943 289.8M955.4 283.2L992.5 263.5M748.5 401.2L785.6 381.4M798 374.9L810.3 368.3M835 355.1L995.7 269.7M751.8 407.3L801.3 381M826 367.9L850.7 354.8M863.1 348.2L961.9 295.6M974.3 289L986.7 282.5M755.1 413.5L779.8 400.4M792.2 393.8L829.3 374.1M854 360.9L977.6 295.2M990 288.6L1002.3 282.1M758.4 419.7L783.1 406.6M795.5 400L807.8 393.4M820.2 386.8L931.4 327.7M956.2 314.5L993.2 294.8M761.7 425.9L860.6 373.3M872.9 366.7L885.3 360.2M897.6 353.6L922.4 340.4M934.7 333.9L984.2 307.6M996.5 301L1008.9 294.4M777.3 425.5L925.6 346.6M938 340L1012.2 300.6M780.6 431.7L1015.5 306.8M783.9 437.8L1018.7 313M774.8 450.6L972.6 345.4M985 338.9L1022 319.1M778.1 456.8L815.2 437.1M827.5 430.5L852.3 417.3M877 404.2L914.1 384.5M926.4 377.9L1000.6 338.5M1013 331.9L1025.3 325.3M781.4 463L806.1 449.8M818.5 443.2L843.2 430.1M855.6 423.5L867.9 417M880.3 410.4L991.5 351.2M1003.9 344.7L1028.6 331.5M784.7 469.1L846.5 436.3M871.2 423.1L895.9 410M908.3 403.4L1031.9 337.7M788 475.3L911.6 409.6M923.9 403L985.7 370.2M998.1 363.6L1035.2 343.9M791.2 481.5L927.2 409.2M939.6 402.6L1038.5 350.1M794.5 487.7L819.3 474.5M831.6 468L893.4 435.1M905.8 428.5L1041.8 356.2M797.8 493.9L822.5 480.7M834.9 474.1L909.1 434.7M921.4 428.1L1008 382.1M1020.3 375.6L1045 362.4M801.1 500L825.8 486.9M838.2 480.3L887.6 454M900 447.5L961.8 414.6M974.2 408L998.9 394.9M1011.2 388.3L1048.3 368.6M804.4 506.2L816.7 499.7M841.5 486.5L853.8 479.9M878.6 466.8L915.6 447.1M928 440.5L1002.2 401.1M1014.5 394.5L1051.6 374.8M807.7 512.4L918.9 453.3M931.3 446.7L1005.5 407.2M1017.8 400.7L1030.2 394.1M811 518.6L885.1 479.2M897.5 472.6L909.9 466M922.2 459.4L971.7 433.1M984 426.6L1021.1 406.9M1033.5 400.3L1058.2 387.1M814.2 524.8L876.1 491.9M888.4 485.3L1012 419.6M1036.7 406.5L1049.1 399.9M817.5 530.9L854.6 511.2M867 504.7L928.8 471.8M941.1 465.2L1064.8 399.5M820.8 537.1L845.5 524M857.9 517.4L944.4 471.4M956.8 464.8L1031 425.4M1043.3 418.8L1055.7 412.2M824.1 543.3L1009.5 444.7M1034.2 431.6L1059 418.4M827.4 549.5L876.8 523.2M901.6 510.1L938.6 490.3M951 483.8L963.4 477.2M975.7 470.6L988.1 464M1000.4 457.5L1037.5 437.8M1062.3 424.6L1074.6 418M830.7 555.7L880.1 529.4M892.5 522.8L904.8 516.2M917.2 509.7L979 476.8M991.4 470.2L1077.9 424.2M834 561.9L883.4 535.6M895.8 529L908.1 522.4M920.5 515.8L957.6 496.1M982.3 483L994.7 476.4M1007 469.8L1044.1 450.1M1056.5 443.5L1068.8 437M837.3 568L874.3 548.3M886.7 541.7L1084.5 436.6M840.5 574.2L852.9 567.6M877.6 554.5L927.1 528.2M939.4 521.6L964.1 508.5M1001.2 488.8L1087.8 442.8M843.8 580.4L856.2 573.8M868.5 567.2L905.6 547.5M918 541L992.2 501.5M1004.5 494.9L1091 448.9M847.1 586.6L884.2 566.9M896.6 560.3L921.3 547.1M933.6 540.6L946 534M958.4 527.4L1094.3 455.1M850.4 592.8L936.9 546.7M949.3 540.2L974 527M986.4 520.5L998.7 513.9M1011.1 507.3L1097.6 461.3M853.7 598.9L890.8 579.2M903.1 572.6L964.9 539.8M977.3 533.2L1100.9 467.5M857 605.1L943.5 559.1M968.2 546L1067.1 493.4M1079.5 486.8L1104.2 473.7M860.3 611.3L1021 525.9M1033.3 519.3L1107.5 479.8M863.5 617.5L875.9 610.9M888.3 604.3L1061.3 512.3M1073.7 505.7L1110.8 486M745.2 395L765 432.1M768.2 438.2L774.8 450.6M784.7 469.1L791.2 481.5M797.8 493.9L811 518.6M814.2 524.8L837.3 568M840.5 574.2L850.4 592.8M760.9 394.6L764.2 400.8M767.5 406.9L797 462.6M810.2 487.3L823.3 512M826.6 518.2L836.5 536.7M839.8 542.9L859.5 580M862.8 586.2L869.3 598.5M770 381.8L786.4 412.7M789.7 418.9L802.8 443.6M806.1 449.8L816 468.4M819.3 474.5L822.5 480.7M825.8 486.9L829.1 493.1M839 511.6L855.4 542.5M858.7 548.7L865.3 561.1M868.5 567.2L875.1 579.6M881.7 592L888.3 604.3M782.3 375.3L785.6 381.4M792.2 393.8L802 412.3M808.6 424.7L818.5 443.2M821.8 449.4L844.8 492.7M851.3 505.1L880.9 560.7M884.2 566.9L897.3 591.6M794.7 368.7L798 374.9M801.3 381L804.5 387.2M807.8 393.4L811.1 399.6M817.7 411.9L821 418.1M824.3 424.3L834.1 442.9M840.7 455.2L850.5 473.8M857.1 486.1L863.7 498.5M870.3 510.8L873.6 517M876.8 523.2L886.7 541.7M890 547.9L899.8 566.5M906.4 578.8L913 591.2M807 362.1L820.2 386.8M823.5 393L826.8 399.2M830 405.4L836.6 417.7M839.9 423.9L846.5 436.3M849.8 442.5L866.2 473.4M869.5 479.5L872.8 485.7M876.1 491.9L882.6 504.3M889.2 516.6L922.1 578.4M819.4 355.5L822.7 361.7M826 367.9L842.4 398.8M845.7 405L852.3 417.3M855.6 423.5L865.4 442.1M868.7 448.2L872 454.4M878.6 466.8L881.8 473M885.1 479.2L888.4 485.3M895 497.7L901.6 510.1M904.8 516.2L918 541M924.6 553.3L934.4 571.9M838.3 361.3L844.9 373.7M851.5 386.1L861.3 404.6M864.6 410.8L867.9 417M871.2 423.1L881.1 441.7M884.3 447.9L887.6 454M894.2 466.4L897.5 472.6M904.1 484.9L917.2 509.7M920.5 515.8L927.1 528.2M930.4 534.4L933.6 540.6M943.5 559.1L950.1 571.5M844.1 342.4L850.7 354.8M860.6 373.3L863.8 379.5M870.4 391.8L873.7 398M877 404.2L886.8 422.7M893.4 435.1L909.9 466M916.4 478.4L942.7 527.8M952.6 546.4L959.1 558.7M856.5 335.8L866.3 354.4M869.6 360.5L876.2 372.9M879.5 379.1L889.3 397.6M892.6 403.8L905.8 428.5M909.1 434.7L915.6 447.1M922.2 459.4L932.1 478M935.4 484.2L938.6 490.3M941.9 496.5L955.1 521.2M958.4 527.4L961.6 533.6M968.2 546L971.5 552.1M872.1 335.4L885.3 360.2M888.6 366.3L891.9 372.5M895.1 378.7L898.4 384.9M901.7 391.1L911.6 409.6M914.9 415.8L924.7 434.3M928 440.5L954.3 489.9M960.9 502.3L980.6 539.4M983.9 545.6L987.2 551.8M884.5 328.9L894.4 347.4M900.9 359.8L907.5 372.1M910.8 378.3L914.1 384.5M923.9 403L933.8 421.6M937.1 427.7L940.4 433.9M943.6 440.1L946.9 446.3M950.2 452.5L953.5 458.6M956.8 464.8L960.1 471M963.4 477.2L986.4 520.5M989.7 526.6L996.2 539M893.6 316.1L903.4 334.6M906.7 340.8L916.6 359.4M919.9 365.5L962.6 445.9M965.9 452.1L969.2 458.3M972.4 464.4L982.3 483M985.6 489.2L992.2 501.5M998.7 513.9L1005.3 526.2M1008.6 532.4L1011.9 538.6M905.9 309.5L915.8 328.1M925.6 346.6L965.1 420.8M971.7 433.1L974.9 439.3M984.8 457.9L988.1 464M991.4 470.2L1007.8 501.1M1011.1 507.3L1024.2 532M918.3 303L931.4 327.7M934.7 333.9L941.3 346.2M947.9 358.6L951.2 364.8M954.4 370.9L957.7 377.1M967.6 395.7L980.7 420.4M984 426.6L993.9 445.1M997.2 451.3L1007 469.8M1010.3 476L1036.6 525.5M930.7 296.4L953.7 339.7M956.9 345.8L960.2 352M963.5 358.2L970.1 370.6M973.4 376.7L983.2 395.3M986.5 401.5L993.1 413.8M1006.2 438.5L1009.5 444.7M1016.1 457.1L1032.5 488M1045.7 512.7L1049 518.9M943 289.8L966 333.1M969.3 339.3L979.2 357.8M985.7 370.2L989 376.3M992.3 382.5L995.6 388.7M998.9 394.9L1005.5 407.2M1008.7 413.4L1031.7 456.7M1035 462.9L1038.3 469.1M1041.6 475.2L1051.5 493.8M1054.7 500L1061.3 512.3M955.4 283.2L958.7 289.4M965.2 301.8L968.5 308M971.8 314.1L975.1 320.3M985 338.9L991.5 351.2M998.1 363.6L1004.7 375.9M1008 382.1L1011.2 388.3M1014.5 394.5L1021.1 406.9M1024.4 413L1040.8 443.9M1054 468.7L1073.7 505.7M967.7 276.7L984.2 307.6M987.5 313.8L1007.2 350.8M1010.5 357L1017 369.4M1023.6 381.7L1030.2 394.1M1036.7 406.5L1040 412.6M1043.3 418.8L1046.6 425M1049.9 431.2L1053.2 437.4M1056.5 443.5L1079.5 486.8M1082.8 493L1086 499.2M980.1 270.1L986.7 282.5M990 288.6L1016.2 338.1M1019.5 344.3L1029.4 362.8M1036 375.2L1045.8 393.7M1049.1 399.9L1062.3 424.6M1068.8 437L1075.4 449.3M1078.7 455.5L1098.4 492.6M992.5 263.5L999 275.9M1002.3 282.1L1005.6 288.2M1008.9 294.4L1012.2 300.6M1015.5 306.8L1018.7 313M1025.3 325.3L1031.9 337.7M1035.2 343.9L1038.5 350.1M1048.3 368.6L1054.9 381M1064.8 399.5L1081.2 430.4M1097.6 461.3L1104.2 473.7M1107.5 479.8L1110.8 486" fill="none" stroke="#fbee96" stroke-width="2.6"/><path d="M745.2 395L819.4 355.5M831.8 349L881.2 322.7M893.6 316.1L943 289.8M955.4 283.2L992.5 263.5M748.5 401.2L785.6 381.4M798 374.9L810.3 368.3M835 355.1L995.7 269.7M751.8 407.3L801.3 381M826 367.9L850.7 354.8M863.1 348.2L961.9 295.6M974.3 289L986.7 282.5M755.1 413.5L779.8 400.4M792.2 393.8L829.3 374.1M854 360.9L977.6 295.2M990 288.6L1002.3 282.1M758.4 419.7L783.1 406.6M795.5 400L807.8 393.4M820.2 386.8L931.4 327.7M956.2 314.5L993.2 294.8M761.7 425.9L860.6 373.3M872.9 366.7L885.3 360.2M897.6 353.6L922.4 340.4M934.7 333.9L984.2 307.6M996.5 301L1008.9 294.4M777.3 425.5L925.6 346.6M938 340L1012.2 300.6M780.6 431.7L1015.5 306.8M783.9 437.8L1018.7 313M774.8 450.6L972.6 345.4M985 338.9L1022 319.1M778.1 456.8L815.2 437.1M827.5 430.5L852.3 417.3M877 404.2L914.1 384.5M926.4 377.9L1000.6 338.5M1013 331.9L1025.3 325.3M781.4 463L806.1 449.8M818.5 443.2L843.2 430.1M855.6 423.5L867.9 417M880.3 410.4L991.5 351.2M1003.9 344.7L1028.6 331.5M784.7 469.1L846.5 436.3M871.2 423.1L895.9 410M908.3 403.4L1031.9 337.7M788 475.3L911.6 409.6M923.9 403L985.7 370.2M998.1 363.6L1035.2 343.9M791.2 481.5L927.2 409.2M939.6 402.6L1038.5 350.1M794.5 487.7L819.3 474.5M831.6 468L893.4 435.1M905.8 428.5L1041.8 356.2M797.8 493.9L822.5 480.7M834.9 474.1L909.1 434.7M921.4 428.1L1008 382.1M1020.3 375.6L1045 362.4M801.1 500L825.8 486.9M838.2 480.3L887.6 454M900 447.5L961.8 414.6M974.2 408L998.9 394.9M1011.2 388.3L1048.3 368.6M804.4 506.2L816.7 499.7M841.5 486.5L853.8 479.9M878.6 466.8L915.6 447.1M928 440.5L1002.2 401.1M1014.5 394.5L1051.6 374.8M807.7 512.4L918.9 453.3M931.3 446.7L1005.5 407.2M1017.8 400.7L1030.2 394.1M811 518.6L885.1 479.2M897.5 472.6L909.9 466M922.2 459.4L971.7 433.1M984 426.6L1021.1 406.9M1033.5 400.3L1058.2 387.1M814.2 524.8L876.1 491.9M888.4 485.3L1012 419.6M1036.7 406.5L1049.1 399.9M817.5 530.9L854.6 511.2M867 504.7L928.8 471.8M941.1 465.2L1064.8 399.5M820.8 537.1L845.5 524M857.9 517.4L944.4 471.4M956.8 464.8L1031 425.4M1043.3 418.8L1055.7 412.2M824.1 543.3L1009.5 444.7M1034.2 431.6L1059 418.4M827.4 549.5L876.8 523.2M901.6 510.1L938.6 490.3M951 483.8L963.4 477.2M975.7 470.6L988.1 464M1000.4 457.5L1037.5 437.8M1062.3 424.6L1074.6 418M830.7 555.7L880.1 529.4M892.5 522.8L904.8 516.2M917.2 509.7L979 476.8M991.4 470.2L1077.9 424.2M834 561.9L883.4 535.6M895.8 529L908.1 522.4M920.5 515.8L957.6 496.1M982.3 483L994.7 476.4M1007 469.8L1044.1 450.1M1056.5 443.5L1068.8 437M837.3 568L874.3 548.3M886.7 541.7L1084.5 436.6M840.5 574.2L852.9 567.6M877.6 554.5L927.1 528.2M939.4 521.6L964.1 508.5M1001.2 488.8L1087.8 442.8M843.8 580.4L856.2 573.8M868.5 567.2L905.6 547.5M918 541L992.2 501.5M1004.5 494.9L1091 448.9M847.1 586.6L884.2 566.9M896.6 560.3L921.3 547.1M933.6 540.6L946 534M958.4 527.4L1094.3 455.1M850.4 592.8L936.9 546.7M949.3 540.2L974 527M986.4 520.5L998.7 513.9M1011.1 507.3L1097.6 461.3M853.7 598.9L890.8 579.2M903.1 572.6L964.9 539.8M977.3 533.2L1100.9 467.5M857 605.1L943.5 559.1M968.2 546L1067.1 493.4M1079.5 486.8L1104.2 473.7M860.3 611.3L1021 525.9M1033.3 519.3L1107.5 479.8M863.5 617.5L875.9 610.9M888.3 604.3L1061.3 512.3M1073.7 505.7L1110.8 486M745.2 395L765 432.1M768.2 438.2L774.8 450.6M784.7 469.1L791.2 481.5M797.8 493.9L811 518.6M814.2 524.8L837.3 568M840.5 574.2L850.4 592.8M760.9 394.6L764.2 400.8M767.5 406.9L797 462.6M810.2 487.3L823.3 512M826.6 518.2L836.5 536.7M839.8 542.9L859.5 580M862.8 586.2L869.3 598.5M770 381.8L786.4 412.7M789.7 418.9L802.8 443.6M806.1 449.8L816 468.4M819.3 474.5L822.5 480.7M825.8 486.9L829.1 493.1M839 511.6L855.4 542.5M858.7 548.7L865.3 561.1M868.5 567.2L875.1 579.6M881.7 592L888.3 604.3M782.3 375.3L785.6 381.4M792.2 393.8L802 412.3M808.6 424.7L818.5 443.2M821.8 449.4L844.8 492.7M851.3 505.1L880.9 560.7M884.2 566.9L897.3 591.6M794.7 368.7L798 374.9M801.3 381L804.5 387.2M807.8 393.4L811.1 399.6M817.7 411.9L821 418.1M824.3 424.3L834.1 442.9M840.7 455.2L850.5 473.8M857.1 486.1L863.7 498.5M870.3 510.8L873.6 517M876.8 523.2L886.7 541.7M890 547.9L899.8 566.5M906.4 578.8L913 591.2M807 362.1L820.2 386.8M823.5 393L826.8 399.2M830 405.4L836.6 417.7M839.9 423.9L846.5 436.3M849.8 442.5L866.2 473.4M869.5 479.5L872.8 485.7M876.1 491.9L882.6 504.3M889.2 516.6L922.1 578.4M819.4 355.5L822.7 361.7M826 367.9L842.4 398.8M845.7 405L852.3 417.3M855.6 423.5L865.4 442.1M868.7 448.2L872 454.4M878.6 466.8L881.8 473M885.1 479.2L888.4 485.3M895 497.7L901.6 510.1M904.8 516.2L918 541M924.6 553.3L934.4 571.9M838.3 361.3L844.9 373.7M851.5 386.1L861.3 404.6M864.6 410.8L867.9 417M871.2 423.1L881.1 441.7M884.3 447.9L887.6 454M894.2 466.4L897.5 472.6M904.1 484.9L917.2 509.7M920.5 515.8L927.1 528.2M930.4 534.4L933.6 540.6M943.5 559.1L950.1 571.5M844.1 342.4L850.7 354.8M860.6 373.3L863.8 379.5M870.4 391.8L873.7 398M877 404.2L886.8 422.7M893.4 435.1L909.9 466M916.4 478.4L942.7 527.8M952.6 546.4L959.1 558.7M856.5 335.8L866.3 354.4M869.6 360.5L876.2 372.9M879.5 379.1L889.3 397.6M892.6 403.8L905.8 428.5M909.1 434.7L915.6 447.1M922.2 459.4L932.1 478M935.4 484.2L938.6 490.3M941.9 496.5L955.1 521.2M958.4 527.4L961.6 533.6M968.2 546L971.5 552.1M872.1 335.4L885.3 360.2M888.6 366.3L891.9 372.5M895.1 378.7L898.4 384.9M901.7 391.1L911.6 409.6M914.9 415.8L924.7 434.3M928 440.5L954.3 489.9M960.9 502.3L980.6 539.4M983.9 545.6L987.2 551.8M884.5 328.9L894.4 347.4M900.9 359.8L907.5 372.1M910.8 378.3L914.1 384.5M923.9 403L933.8 421.6M937.1 427.7L940.4 433.9M943.6 440.1L946.9 446.3M950.2 452.5L953.5 458.6M956.8 464.8L960.1 471M963.4 477.2L986.4 520.5M989.7 526.6L996.2 539M893.6 316.1L903.4 334.6M906.7 340.8L916.6 359.4M919.9 365.5L962.6 445.9M965.9 452.1L969.2 458.3M972.4 464.4L982.3 483M985.6 489.2L992.2 501.5M998.7 513.9L1005.3 526.2M1008.6 532.4L1011.9 538.6M905.9 309.5L915.8 328.1M925.6 346.6L965.1 420.8M971.7 433.1L974.9 439.3M984.8 457.9L988.1 464M991.4 470.2L1007.8 501.1M1011.1 507.3L1024.2 532M918.3 303L931.4 327.7M934.7 333.9L941.3 346.2M947.9 358.6L951.2 364.8M954.4 370.9L957.7 377.1M967.6 395.7L980.7 420.4M984 426.6L993.9 445.1M997.2 451.3L1007 469.8M1010.3 476L1036.6 525.5M930.7 296.4L953.7 339.7M956.9 345.8L960.2 352M963.5 358.2L970.1 370.6M973.4 376.7L983.2 395.3M986.5 401.5L993.1 413.8M1006.2 438.5L1009.5 444.7M1016.1 457.1L1032.5 488M1045.7 512.7L1049 518.9M943 289.8L966 333.1M969.3 339.3L979.2 357.8M985.7 370.2L989 376.3M992.3 382.5L995.6 388.7M998.9 394.9L1005.5 407.2M1008.7 413.4L1031.7 456.7M1035 462.9L1038.3 469.1M1041.6 475.2L1051.5 493.8M1054.7 500L1061.3 512.3M955.4 283.2L958.7 289.4M965.2 301.8L968.5 308M971.8 314.1L975.1 320.3M985 338.9L991.5 351.2M998.1 363.6L1004.7 375.9M1008 382.1L1011.2 388.3M1014.5 394.5L1021.1 406.9M1024.4 413L1040.8 443.9M1054 468.7L1073.7 505.7M967.7 276.7L984.2 307.6M987.5 313.8L1007.2 350.8M1010.5 357L1017 369.4M1023.6 381.7L1030.2 394.1M1036.7 406.5L1040 412.6M1043.3 418.8L1046.6 425M1049.9 431.2L1053.2 437.4M1056.5 443.5L1079.5 486.8M1082.8 493L1086 499.2M980.1 270.1L986.7 282.5M990 288.6L1016.2 338.1M1019.5 344.3L1029.4 362.8M1036 375.2L1045.8 393.7M1049.1 399.9L1062.3 424.6M1068.8 437L1075.4 449.3M1078.7 455.5L1098.4 492.6M992.5 263.5L999 275.9M1002.3 282.1L1005.6 288.2M1008.9 294.4L1012.2 300.6M1015.5 306.8L1018.7 313M1025.3 325.3L1031.9 337.7M1035.2 343.9L1038.5 350.1M1048.3 368.6L1054.9 381M1064.8 399.5L1081.2 430.4M1097.6 461.3L1104.2 473.7M1107.5 479.8L1110.8 486" fill="none" stroke="#b8b8c8" stroke-width="1.7" stroke-dasharray="1.7 1.3"/></g><path d="M915.3 401.4L941.2 398.6L949.8 418.7L941.2 438.8L946.9 459L929.6 476.3L915.3 459L918.1 430.2Z" fill="#e1edf0"/><path d="M980.4 267L996.7 273L990.7 284.1L983.3 287L973 287L968.5 282.6Z" fill="#dcf7c8"/><path d="M956.7 255.9L958.1 258.9L965.6 262.6L970.7 258.1" fill="none" stroke="#cfa9f7" stroke-width="3"/><path d="M919.6 289.3L930 278.9L934.4 278.9L944.8 287.8L934.4 299.6L928.5 297.4" fill="none" stroke="#cfa9f7" stroke-width="3"/><path d="M916.7 293L927 301.1L918.1 311.5L914.4 318.9L911.5 316.7L909.3 309.3L906.3 307L910 299.6" fill="none" stroke="#cfa9f7" stroke-width="3"/><path d="M348.9 173.9C350.6 176.9 355.8 187.7 359.3 192.2C362.7 196.8 365.4 196.4 369.6 201.1C373.8 205.8 377 215.2 384.4 220.4C391.9 225.6 404.7 229 414.1 232.2C423.5 235.4 429.4 235.9 440.7 239.6C452.1 243.3 469.4 251.1 482.2 254.4C495.1 257.8 504 258.1 517.8 259.5C531.6 260.8 553.8 260.3 565.2 262.4C576.5 264.6 580.2 268.4 585.9 272.2C591.6 276.1 596.5 281.6 599.3 285.6C602 289.5 602.1 292.7 602.2 295.9C602.4 299.1 598.4 300.4 600.1 304.8C601.9 309.3 609 316.2 612.6 322.6C616.1 329 619.5 336.4 621.5 343.3C623.5 350.2 622 355.7 624.4 364.1C626.9 372.5 631.9 385.3 636.3 393.7C640.7 402.1 646.7 408.5 651.1 414.4C655.6 420.4 658.5 426 663 429.3C667.4 432.5 674.8 429.8 677.8 433.7C680.7 437.7 679.5 448 680.7 453C682 457.9 681 461.6 685.2 463.3C689.4 465.1 701 462.1 705.9 463.3C710.9 464.6 712.8 468 714.8 470.7C716.8 473.5 717.3 478.1 717.8 479.6M683.7 135.9C682.5 138.9 677 146.8 676.3 153.7C675.6 160.6 677.8 172.5 679.3 177.4C680.7 182.3 684.7 181.1 685.2 183.3C685.7 185.6 681 187 682.2 190.7C683.5 194.4 690.9 201.4 692.6 205.6C694.3 209.8 694.8 209.8 692.6 215.9C690.4 222.1 681.7 236.7 679.3 242.6C676.8 248.5 679.5 247 677.8 251.5C676 255.9 671.1 261.4 668.9 269.3C666.7 277.2 665.9 292.5 664.4 298.9C663 305.3 662.5 303.8 660 307.8C657.5 311.7 651.1 314.7 649.6 322.6C648.1 330.5 650.4 346.3 651.1 355.2C651.9 364.1 651.6 370.5 654.1 375.9C656.5 381.4 663 381.4 665.9 387.8C668.9 394.2 669.9 406.8 671.9 414.4C673.8 422.1 676.8 430.5 677.8 433.7M900 304.8C897 309.3 888.6 324.6 882.2 331.5C875.8 338.4 867.9 341.9 861.5 346.3C855.1 350.7 849.6 354.7 843.7 358.1C837.8 361.6 830.9 362.6 825.9 367C821 371.5 819 379.9 814.1 384.8C809.1 389.8 800.7 391.7 796.3 396.7C791.9 401.6 791.9 410.7 787.4 414.4C783 418.1 774.6 416.4 769.6 418.9C764.7 421.4 760.2 423.6 757.8 429.3C755.3 434.9 756.5 444.6 754.8 453C753.1 461.4 748.6 475.2 747.4 479.6M965.6 150C967.5 152.2 974.4 158.4 977.4 163.3C980.4 168.3 980.4 175.4 983.3 179.6C986.3 183.8 992.2 185.3 995.2 188.5C998.1 191.7 1002.3 195.4 1001.1 198.9C999.9 202.3 992.2 205.6 987.8 209.3C983.3 213 978.9 217.7 974.4 221.1C970 224.6 963.6 227 961.1 230C958.6 233 961.9 234.9 959.6 238.9C957.4 242.8 952.2 249 947.8 253.7C943.3 258.4 936.9 263.8 933 267C929 270.2 927.5 268.8 924.1 273C920.6 277.2 916.2 286.8 912.2 292.2C908.3 297.7 905.1 300.1 900.4 305.6C895.7 311 886.8 321.6 884.1 324.8M1033.7 150C1033.5 151 1034.2 153.7 1032.2 155.9C1030.2 158.1 1023.8 160.4 1021.9 163.3C1019.9 166.3 1022.3 169.8 1020.4 173.7C1018.4 177.7 1013.2 182.8 1010 187C1006.8 191.2 1002.6 196.9 1001.1 198.9M1211.1 135.9C1211.4 137.4 1208.4 140.9 1212.6 144.8C1216.8 148.8 1232.8 155.2 1236.3 159.6C1239.8 164.1 1230.4 166.8 1233.3 171.5C1236.3 176.2 1246.7 184.1 1254.1 187.8C1261.5 191.5 1268.9 190.7 1277.8 193.7C1286.7 196.7 1299.5 202.1 1307.4 205.6C1315.3 209 1318.8 214.1 1325.2 214.4C1331.6 214.8 1340 208.1 1345.9 207.6C1351.9 207.1 1355.8 209.4 1360.7 211.5C1365.7 213.6 1368.6 217.7 1375.6 220.4C1382.5 223.1 1393.3 225.1 1402.2 227.8C1411.1 230.5 1423 232.2 1428.9 236.7C1434.8 241.1 1435.3 249 1437.8 254.4C1440.2 259.9 1439.3 263.3 1443.7 269.3C1448.1 275.2 1458 282.6 1464.4 290C1470.9 297.4 1478.3 306.3 1482.2 313.7C1486.2 321.1 1482.7 327.8 1488.1 334.4C1493.6 341.1 1506.4 348.5 1514.8 353.7C1523.2 358.9 1530.6 362.3 1538.5 365.6C1546.4 368.8 1556.3 370.2 1562.2 373C1568.1 375.7 1570.1 378.1 1574.1 381.9C1578 385.6 1581 392.2 1585.9 395.2C1590.9 398.1 1597.8 396.9 1603.7 399.6C1609.6 402.3 1615.1 407.5 1621.5 411.5C1627.9 415.4 1635.8 420.9 1642.2 423.3C1648.6 425.8 1657 425.8 1660 426.3M1643.6 423.3C1647 424.3 1655.9 426.5 1664.3 429.3C1672.7 432 1685.5 436.7 1693.9 439.6C1702.3 442.6 1707.5 446.8 1714.7 447C1721.8 447.3 1733.2 442.1 1736.9 441.1M1307.4 135.9C1305.4 137.4 1297.3 137.7 1295.6 144.8C1293.8 152 1295.1 171 1297 178.9C1299 186.8 1305.4 187.8 1307.4 192.2C1309.4 196.7 1308.6 203.3 1308.9 205.6M1439.3 190.7C1438 194 1433.6 203.3 1431.9 210C1430.1 216.7 1429.1 226 1428.9 230.7C1428.6 235.4 1430.1 236.9 1430.4 238.1M945.9 135.9C947.9 137.4 955.3 141.4 957.8 144.8C960.2 148.3 960.2 154.7 960.7 156.7M1031.9 135.9C1032.6 137.4 1036.8 141.4 1036.3 144.8C1035.8 148.3 1031.4 152.7 1028.9 156.7C1026.4 160.6 1022.7 166.5 1021.5 168.5M1737 307C1737.2 322.5 1738 351.2 1738.2 400C1738.4 448.8 1738.4 548 1738.4 600C1738.4 652 1738.6 691.7 1738.4 712C1738.2 732.3 1737.2 720.3 1737 722M1685.3 908.9C1687.9 905.4 1696.9 892 1700.7 888.1C1704.5 884.3 1704.4 886.1 1708.1 885.8C1711.9 885.4 1718.8 886.3 1723 886.1C1727.2 885.8 1730.7 885.4 1733.3 884.3C1736 883.2 1737.8 880.1 1738.7 879.3M683.7 460C685.7 460.7 690.9 463.5 695.6 464.4C700.2 465.4 708.1 464.2 711.9 465.9C715.6 467.7 717.8 471.4 717.8 474.8C717.8 478.3 711.4 481.5 711.9 486.7C712.3 491.9 719.5 500.5 720.7 505.9C722 511.4 721.5 512.1 719.3 519.3C717 526.4 712.8 542 707.4 548.9C702 555.8 691.9 554.3 686.7 560.7C681.5 567.2 677.8 580.5 676.3 587.4C674.8 594.3 680.7 596.8 677.8 602.2C674.8 607.7 662 615.1 658.5 620C655.1 624.9 656.8 624 657 631.9C657.3 639.8 659.8 660.7 660 667.4C660.2 674.1 661.5 669.9 658.5 671.9C655.6 673.8 647.9 673.1 642.2 679.3C636.5 685.4 627.4 704 624.4 708.9M753.3 460C752.8 462 753.6 466.4 750.4 471.9C747.2 477.3 739 486.9 734.1 492.6C729.1 498.3 723 503.7 720.7 505.9M348.9 697C353.3 703.2 365.2 724.2 375.6 734.1C385.9 744 397.8 749.6 411.1 756.3C424.4 763 448.1 771.1 455.6 774.1M624.4 711.9C621.5 709.4 614.6 701 606.7 697C598.8 693.1 586.9 689.4 577 688.1C567.2 686.9 555.3 688.6 547.4 689.6C539.5 690.6 533.1 691.4 529.6 694.1C526.2 696.8 526.2 700.5 526.7 705.9C527.2 711.4 529.6 720.2 532.6 726.7C535.6 733.1 541.7 738.5 544.4 744.4C547.2 750.4 548.4 756.3 548.9 762.2C549.4 768.1 549.1 775.6 547.4 780C545.7 784.4 543.5 787.2 538.5 788.9C533.6 790.6 524.2 790.9 517.8 790.4C511.4 789.9 509.9 789.6 500 785.9C490.1 782.2 466.2 769.6 458.5 768.1C450.9 766.7 446.9 773.1 454.1 777C461.2 781 489.9 788.6 501.5 791.9C513.1 795.1 516.5 796.3 523.7 796.3C530.9 796.3 539.5 795.1 544.4 791.9C549.4 788.6 551.6 782.5 553.3 777C555.1 771.6 555.8 765.2 554.8 759.3C553.8 753.3 550.1 747.9 547.4 741.5C544.7 735.1 540.2 726.7 538.5 720.7C536.8 714.8 535.6 709.9 537 705.9C538.5 702 540.7 699 547.4 697C554.1 695.1 567.2 692.8 577 694.1C586.9 695.3 598.8 701.2 606.7 704.4C614.6 707.7 621.5 711.9 624.4 713.3M623 710.4C620.2 708.7 614.3 703.8 606.7 700.6C599 697.4 586.9 692.3 577 691.1C567.2 689.9 554.8 692 547.4 693.2C540 694.4 535.3 695.9 532.6 698.5C529.9 701.1 530.5 704.2 531.1 708.9C531.7 713.6 533.5 721 536.1 726.7C538.8 732.3 544.2 737.3 546.8 743C549.4 748.6 551.3 754.6 551.9 760.7C552.4 766.9 552.1 775.1 550.4 780C548.6 784.9 546.4 788.1 541.5 790.4C536.5 792.6 527.4 793.6 520.7 793.3C514.1 793.1 504.7 789.6 501.5 788.9M625.3 712.2C625.5 712.9 625.1 713.8 626.3 716.5C627.4 719.1 630.7 723.9 632.1 728.1C633.6 732.4 634.4 736.9 635 741.8C635.7 746.6 636.3 752.5 636 757.4C635.7 762.2 634.6 766.4 633.1 771C631.6 775.5 629.2 780.1 627.3 784.6C625.3 789.2 623.4 793.7 621.4 798.2C619.5 802.8 617.4 807.3 615.6 811.9C613.8 816.4 611.7 821 610.7 825.5C609.7 830 609.2 834.9 609.3 839.1C609.5 843.3 610.2 846.9 611.7 850.8C613.2 854.7 615.6 859.1 618.5 862.5C621.4 865.9 624.8 868.5 629.2 871.3C633.6 874 639.3 876.8 644.8 879C650.3 881.3 656.8 883.6 662.3 884.9C667.8 886.2 673 886.7 677.9 886.8C682.7 887 686.3 887 691.5 885.9C696.7 884.7 703.2 882.4 709 880C714.9 877.6 720.1 874.8 726.6 871.3C733 867.7 741.2 863 748 858.6C754.8 854.2 761 849.5 767.4 845C773.9 840.4 781.4 835.9 786.9 831.3C792.4 826.8 797.9 821 800.5 817.7C803.1 814.5 802.2 812.8 802.5 811.9M628.2 711.6C629.2 712.2 632.5 713.7 634.1 715.5C635.7 717.3 636.7 719.2 638 722.3C639.3 725.4 640.7 730.1 641.9 734C643 737.9 644 742.1 644.8 745.7C645.6 749.2 646.9 752.2 646.7 755.4C646.6 758.7 644.6 761.6 643.8 765.1C643 768.7 643 773.3 641.9 776.8C640.7 780.4 638.8 782.7 637 786.6C635.2 790.5 633.1 795.3 631.2 800.2C629.2 805.1 626.9 810.9 625.3 815.8C623.7 820.6 622.2 825.2 621.4 829.4C620.6 833.6 620.1 837.2 620.4 841.1C620.8 845 621.6 849.7 623.4 852.8C625.1 855.8 627.6 857.7 631.2 859.6C634.7 861.5 639.6 862.4 644.8 864C650 865.7 656.8 868.3 662.3 869.5C667.8 870.7 673 871 677.9 871.1C682.7 871.1 686.3 870.9 691.5 869.7C696.7 868.5 703.2 866.3 709 863.9C714.9 861.4 720.4 858.6 726.6 855.1C732.7 851.6 739.5 846.8 746 842.6C752.5 838.5 759.3 834.3 765.5 830.2C771.7 826 778.5 821.4 783 817.7C787.6 814 790.6 811.5 792.8 808C794.9 804.4 795.4 800.2 795.7 796.3C796 792.4 794.8 787.9 794.7 784.6C794.6 781.4 795.2 778.1 795.3 776.8M660.4 660C660.4 661.6 661.4 667.5 660.7 669.7C660.1 672 658.8 672.5 656.5 673.6C654.1 674.8 649.2 675.3 646.7 676.5C644.3 677.8 644.1 678.7 641.9 681.4C639.6 684.2 635.9 689.2 633.1 693.1C630.3 697 627.1 701.7 625.3 704.8C623.5 707.9 622.9 710.5 622.4 711.6M790 821.7C791.5 820.2 796.5 816.3 798.7 812.9C800.9 809.6 802.1 805.9 803.1 801.3C804 796.7 804 790.9 804.5 785.3C805 779.8 805.4 773.5 806 767.9C806.6 762.4 807.4 756.8 808.2 751.9C808.9 747.1 809.5 741.9 810.3 738.9C811.2 735.9 810.6 735.4 813.2 733.8C815.9 732.2 822.7 729.8 826.3 729.4C829.9 729.1 832.8 730 835 731.6C837.2 733.2 837.9 736 839.4 738.9C840.8 741.8 841.8 746.1 843.7 749C845.7 751.9 847.8 754.1 851 756.3C854.1 758.5 858.3 760.9 862.6 762.1C867 763.3 870.8 764.1 877.1 763.6C883.4 763.1 893.1 759.7 900.4 759.2C907.6 758.7 913.7 759.8 920.7 760.7C927.7 761.5 935.2 762.7 942.5 764.3C949.7 765.9 957 768 964.3 770.1C971.5 772.2 980 774.6 986 776.6C992.1 778.7 996.9 780.5 1000.6 782.4C1004.2 784.4 1006.3 785.8 1007.8 788.3C1009.4 790.7 1009 794.8 1010 797C1011 799.1 1013 800.6 1013.6 801.3M794.4 781C794.8 778.8 796.1 772 797.3 767.9C798.5 763.8 799.7 760.4 801.6 756.3C803.6 752.2 806.5 746.5 808.9 743.2C811.3 740 813.2 738.3 816.1 736.7C819 735.1 823.4 733.8 826.3 733.8C829.2 733.8 831.4 734.4 833.6 736.7C835.7 739 837.4 744.3 839.4 747.6C841.3 750.9 843.2 753.8 845.2 756.3C847.1 758.8 848.3 761.1 851 762.8C853.7 764.5 856.8 766 861.2 766.5C865.5 767 872.1 766.2 877.1 765.7C882.2 765.3 885.6 763.9 891.7 763.6C897.7 763.2 906.2 763 913.4 763.6C920.7 764.2 928 765.6 935.2 767.2C942.5 768.8 949.7 770.9 957 773C964.3 775.1 972.7 777.2 978.8 779.5C984.8 781.8 989.9 784.4 993.3 786.8C996.7 789.2 997.9 791.6 999.1 794.1C1000.3 796.5 1000.8 799.1 1000.6 801.3C1000.3 803.5 999.4 805.2 997.7 807.1C996 809.1 993.6 810.5 990.4 812.9C987.3 815.4 983.1 818.5 978.8 821.7C974.4 824.8 968.4 828.2 964.3 831.8C960.2 835.5 956.8 839.6 954.1 843.4C951.4 847.3 949.7 851.2 948.3 855.1C946.8 858.9 945.8 863 945.4 866.7C945 870.3 945.1 873.7 946.1 876.8C947.1 880 949.1 883.4 951.2 885.6C953.3 887.8 957.2 889.3 958.5 890.1M800.2 801.3C800.4 799.4 800.9 794.1 801.6 789.7C802.3 785.3 803.3 779.8 804.5 775.2C805.7 770.6 807.2 766.2 808.9 762.1C810.6 758 812.8 753.5 814.7 750.5C816.6 747.5 818.4 745.3 820.5 744C822.6 742.6 825.2 742 827 742.5C828.8 743 830.1 744.6 831.4 746.9C832.7 749.2 833.4 753 835 756.3C836.6 759.6 838.6 763.7 840.8 766.5C843 769.3 845.2 771.7 848.1 773C851 774.3 854.6 774.8 858.3 774.5C861.9 774.1 865.5 771.9 869.9 770.8C874.2 769.7 878.3 768.4 884.4 767.9C890.4 767.4 898.9 767.4 906.2 767.9C913.4 768.4 920.7 769.5 928 770.8C935.2 772.2 942.5 774 949.7 775.9C957 777.8 965.5 780.4 971.5 782.4C977.6 784.5 982.4 786.3 986 788.3C989.7 790.2 991.7 791.9 993.3 794.1C994.9 796.2 995.5 799.1 995.5 801.3C995.5 803.5 994.9 805.2 993.3 807.1C991.7 809.1 989.2 810.5 986 812.9C982.9 815.4 978.5 818.5 974.4 821.7C970.3 824.8 965.2 828.2 961.4 831.8C957.5 835.5 953.9 839.6 951.2 843.4C948.5 847.3 946.8 851.2 945.4 855.1C943.9 858.9 942.8 863 942.5 866.7C942.1 870.3 942.2 873.7 943.2 876.8C944.2 880 946.7 883.4 948.3 885.6C949.9 887.8 951.9 889.3 952.6 890.1M1013.6 801.3C1012.7 802.3 1010.7 805 1007.8 807.1C1004.9 809.3 1001.1 811 996.2 814.4C991.4 817.8 984.1 823.3 978.8 827.5C973.5 831.6 967.9 835.2 964.3 839.1C960.6 843 958.9 846.3 957 850.7C955.1 855.1 953.3 861.3 952.6 865.2C952 869.1 952.4 871 953.4 873.9C954.3 876.8 955.9 880 958.5 882.6C961 885.3 966.9 888.8 968.6 890.1M948.3 882.2C948.6 883 945.3 882.7 950.4 886.7C955.4 890.6 969.4 901.6 978.5 905.9C987.7 910.2 989.4 911.2 1005.2 912.4C1021 913.7 1062 913.2 1073.3 913.3M957.2 881.6C957.8 882.2 956.2 882.1 960.7 885.2C965.3 888.2 977.5 895.7 984.4 900C991.4 904.3 999.3 909.4 1002.2 911.3" fill="none" stroke="#a5cdfb" stroke-width="1.1"/><path d="M348.9 153.7C357.3 155.7 386.9 160.9 399.3 165.6C411.6 170.2 413.1 176.2 423 181.9C432.8 187.5 442.7 194 458.5 199.6C474.3 205.3 500.5 211 517.8 215.9C535.1 220.9 546.4 223.3 562.2 229.3C578 235.2 602.2 246.3 612.6 251.5C623 256.7 618.5 254.9 624.4 260.4C630.4 265.8 641.2 278.4 648.1 284.1C655.1 289.8 660 290.9 665.9 294.4C671.9 298 680.7 303.6 683.7 305.4M683.7 305.4C687.2 305.1 694.6 304.3 704.4 303.3C714.3 302.4 730.6 301.8 743 299.8C755.3 297.8 771.1 292.7 778.5 291.5C785.9 290.2 785.9 292.2 787.4 292.4M683.7 305.4C684.9 308.3 690.9 314.8 691.1 322.6C691.4 330.4 685.4 343.8 685.2 352.2C684.9 360.6 686.4 366 689.6 373C692.8 379.9 698 387.3 704.4 393.7C710.9 400.1 722.7 407.3 728.1 411.5C733.6 415.7 735.6 417.7 737 418.9M744.4 135.9C745.7 137.9 748.6 142.6 751.9 147.8C755.1 153 758.3 158.6 763.7 167C769.1 175.4 779 191.2 784.4 198.1C789.9 205.1 791.9 206.5 796.3 208.5C800.7 210.5 806.2 210 811.1 210C816 210 821.2 208.6 825.9 208.5C830.6 208.4 837 209.3 839.3 209.4M763.7 167.9C760.5 169.8 749.9 173.4 744.4 178.9C739 184.4 735.1 194.9 731.1 201.1C727.2 207.3 722.7 211 720.7 215.9C718.8 220.9 720.7 222.3 719.3 230.7C717.8 239.1 714.3 254.2 711.9 266.3C709.4 278.4 705.7 297.2 704.4 303.3M719.3 230.7C720.2 234.7 722.2 246 725.2 254.4C728.1 262.8 733.8 273.7 737 281.1C740.2 288.5 741.5 294.7 744.4 298.9C747.4 303.1 748.1 302.3 754.8 306.3C761.5 310.2 776.5 317.9 784.4 322.6C792.3 327.3 799.3 332.5 802.2 334.4M692.6 236.7C695.3 237.2 705.2 238.4 708.9 239.6C712.6 240.9 713.8 243.3 714.8 244.1M744.4 295.9L758.4 273.7M875.7 135.9C875.7 139.6 881 151.2 875.7 158.1C870.4 165.1 852 172.2 843.7 177.4C835.4 182.6 831.1 184.8 825.9 189.3C820.7 193.7 814.8 201.6 812.6 204.1M606.7 479.6C609.6 474.7 619 456.4 624.4 450C629.9 443.6 632.3 442.3 639.3 441.1C646.2 439.9 655.1 442.3 665.9 442.6C676.8 442.8 696 443.8 704.4 442.6C712.8 441.4 714.3 436.4 716.3 435.2M737 438.1C736 441.1 732.8 449.5 731.1 455.9C729.4 462.3 726.2 472.8 726.7 476.7C727.2 480.5 732.8 478.6 734.1 479M740 438.1C741 439.1 744.7 441.6 745.9 444.1C747.2 446.5 747.2 451.5 747.4 453M751.9 426.3C753.3 428.8 756.3 435.7 760.7 441.1C765.2 446.5 773.6 454 778.5 458.9C783.5 463.8 788.4 468.8 790.4 470.7M800.7 439.6C797.5 443.3 787.2 455.2 781.5 461.9C775.8 468.5 769.1 476.7 766.7 479.6M814.1 426.3C811.1 431.2 800.2 447 796.3 455.9C792.3 464.8 791.4 475.7 790.4 479.6M728.1 420.4C733.6 421.9 750.4 426.8 760.7 429.3C771.1 431.7 785.4 434.2 790.4 435.2M876.3 135.9C876.3 139.9 874.1 156.4 876.3 159.6C878.5 162.8 882.7 157.3 889.6 155.2C896.5 153.1 910.4 147.7 917.8 147.2C925.2 146.7 928.6 149.2 934.1 152.2C939.5 155.3 945.7 163.1 950.4 165.6C955.1 168 960.2 166.8 962.2 167M981.5 138.9C982.2 140.9 984.7 145.8 985.9 150.7C987.2 155.7 988.4 165.6 988.9 168.5M1046.7 152.2C1049.4 154 1057 161.9 1063 162.6C1068.9 163.3 1076.5 155.9 1082.2 156.7C1087.9 157.4 1092.3 162.6 1097 167C1101.7 171.5 1109.4 177.2 1110.4 183.3C1111.4 189.5 1105.7 198.6 1103 204.1C1100.2 209.5 1098.5 212.5 1094.1 215.9C1089.6 219.4 1080.2 220.9 1076.3 224.8C1072.3 228.8 1071.6 234.7 1070.4 239.6C1069.1 244.6 1071.4 250 1068.9 254.4C1066.4 258.9 1058.3 262.8 1055.6 266.3C1052.8 269.8 1053.1 273.7 1052.6 275.2M1052.6 275.2C1058 275.3 1073.8 275.8 1085.2 275.8C1096.5 275.8 1113.6 273.8 1120.7 275.2C1127.9 276.6 1126.9 282.6 1128.1 284.1M777 479.6C780.5 474.7 790.9 459.9 797.8 450C804.7 440.1 811.1 430.7 818.5 420.4C825.9 410 834.3 396.7 842.2 387.8C850.1 378.9 858 373.2 865.9 367C873.8 360.9 879.3 356.2 889.6 350.7C900 345.3 915.3 341.1 928.1 334.4C941 327.8 955.3 316.4 966.7 310.7C978 305.1 984.9 303.6 996.3 300.4C1007.7 297.2 1020 294 1034.8 291.5C1049.6 289 1069.6 286.9 1085.2 285.6C1100.7 284.2 1113.3 282.5 1128.1 283.5C1143 284.5 1152.1 286.4 1174.1 291.5C1196 296.5 1245.7 310 1260 313.7M788.9 479.6C793.8 472.2 807.7 450 818.5 435.2C829.4 420.4 844.2 402.6 854.1 390.7C864 378.9 870.4 371 877.8 364.1C885.2 357.2 890.6 352.7 898.5 349.3C906.4 345.8 920 345.3 925.2 343.3C930.4 341.4 929.6 339.1 929.6 337.4C929.6 335.7 925.9 333.7 925.2 333M895.6 349.3C897 351.2 901.5 358.1 904.4 361.1C907.4 364.1 909.9 364.6 913.3 367C916.8 369.5 923.2 374.4 925.2 375.9M948.9 398.1C951.9 400.4 958.8 405.3 966.7 411.5C974.6 417.7 987.7 431 996.3 435.2C1004.9 439.4 1012.1 434.4 1018.5 436.7C1024.9 438.9 1029.6 444.6 1034.8 448.5C1040 452.5 1047.2 458.4 1049.6 460.4M1100 284.1C1111.9 284.3 1136.5 278.4 1171.1 285.6C1205.7 292.7 1276.8 317.7 1307.4 327C1338 336.4 1325.2 333.7 1354.8 341.9C1384.4 350 1441.2 362.6 1485.2 375.9C1529.1 389.3 1596.3 414.2 1618.5 421.9M1100 276.7C1103.5 276.5 1116 274.5 1120.7 275.8C1125.4 277 1128.6 280 1128.1 284.1C1127.7 288.2 1122.5 295.4 1117.8 300.4C1113.1 305.3 1103 311.5 1100 313.7M1168.1 287C1171.6 288 1182 291.7 1188.9 293C1195.8 294.2 1204.2 299.9 1209.6 294.4C1215.1 289 1217.5 271.5 1221.5 260.4C1225.4 249.3 1231.1 239.6 1233.3 227.8C1235.6 215.9 1236.3 199.1 1234.8 189.3C1233.3 179.4 1230.1 176.4 1224.4 168.5C1218.8 160.6 1206.7 147.3 1200.7 141.9C1194.8 136.4 1190.9 136.9 1188.9 135.9M1129.6 135.9C1129.4 138.4 1127.2 146.8 1128.1 150.7C1129.1 154.7 1134.3 158.1 1135.6 159.6M1236.3 224.8C1239.3 220.1 1249.9 201.9 1254.1 196.7C1258.3 191.5 1259.8 196.7 1261.5 193.7C1263.2 190.7 1263.2 181.9 1264.4 178.9C1265.7 175.9 1263 175.4 1268.9 175.9C1274.8 176.4 1294.8 180.9 1300 181.9M1261.5 193.7C1264.7 194 1276.5 193.5 1280.7 195.2C1284.9 196.9 1282.7 201.1 1286.7 204.1C1290.6 207 1301 210 1304.4 213C1307.9 215.9 1307.4 217.4 1307.4 221.9C1307.4 226.3 1301 231.2 1304.4 239.6C1307.9 248 1325.7 262.3 1328.1 272.2C1330.6 282.1 1322.7 289.8 1319.3 298.9C1315.8 308 1309.4 322.3 1307.4 327M1408.1 164.1C1407.9 169.3 1407.7 184.6 1406.7 195.2C1405.7 205.8 1401.7 221.6 1402.2 227.8C1402.7 234 1408.2 229.3 1409.6 232.2C1411 235.2 1411.3 240.9 1410.5 245.6C1409.8 250.2 1407.1 256.7 1405.2 260.4C1403.3 264.1 1399.8 264.3 1399.3 267.8C1398.8 271.2 1398.8 276.4 1402.2 281.1C1405.7 285.8 1417 293.5 1420 295.9M1385.9 260.4C1386.4 260.9 1386.7 262.8 1388.9 263.3C1391.1 263.8 1397.5 263.3 1399.3 263.3M1402.2 284.1C1397.8 286.3 1381 292.5 1375.6 297.4C1370.1 302.3 1371.6 307 1369.6 313.7C1367.7 320.4 1366.2 332.7 1363.7 337.4C1361.2 342.1 1356.3 341.1 1354.8 341.9M1354.8 341.9C1354.1 342.6 1350.9 344.1 1350.4 346.3C1349.9 348.5 1349.1 351.7 1351.9 355.2C1354.6 358.6 1361.2 361.6 1366.7 367C1372.1 372.5 1379.5 383.1 1384.4 387.8C1389.4 392.5 1391.9 393.7 1396.3 395.2C1400.7 396.7 1404.7 396.7 1411.1 396.7C1417.5 396.7 1428.6 394.3 1434.8 395.2C1441 396.1 1445.9 400.9 1448.1 402M1433.3 226.3C1433.3 228.5 1432.3 235.9 1433.3 239.6C1434.3 243.3 1438 244.6 1439.3 248.5C1440.5 252.5 1438 258.9 1440.7 263.3C1443.5 267.8 1450.1 271.2 1455.6 275.2C1461 279.1 1466.4 282.1 1473.3 287C1480.2 292 1489.1 299.9 1497 304.8C1504.9 309.8 1512.8 312.2 1520.7 316.7C1528.6 321.1 1539.5 329.3 1544.4 331.5C1549.4 333.7 1545.4 328 1550.4 330C1555.3 332 1565.2 337.7 1574.1 343.3C1583 349 1594.3 358.6 1603.7 364.1C1613.1 369.5 1622.5 373 1630.4 375.9C1638.3 378.9 1646.2 381.1 1651.1 381.9C1656 382.6 1658.5 380.6 1660 380.4M1100 319.6C1103 327 1112.3 352.2 1117.8 364.1C1123.2 375.9 1124.2 379.9 1132.6 390.7C1141 401.6 1158.3 418.4 1168.1 429.3C1178 440.1 1191.4 447.5 1191.9 455.9C1192.3 464.3 1174.6 475.7 1171.1 479.6M1200.7 464.8L1224.4 479.6M1532.4 137.4C1539.6 138.1 1560.8 141.4 1575.4 141.9C1590 142.3 1610 140.4 1619.9 140.4C1629.7 140.4 1627.3 138.6 1634.7 141.9C1642.1 145.1 1655.7 154.4 1664.3 159.6C1672.9 164.8 1679.1 168.8 1686.5 173C1693.9 177.2 1701.8 181.4 1708.7 184.8C1715.7 188.3 1723.3 190 1728 193.7C1732.7 197.4 1735.2 197.9 1736.9 207C1738.6 216.2 1738.4 235.7 1738.4 248.5C1738.4 261.4 1738.6 274.2 1736.9 284.1C1735.2 294 1733.2 299.4 1728 307.8C1722.8 316.2 1712.9 326 1705.8 334.4C1698.6 342.8 1691 352.2 1685 358.1C1679.1 364.1 1675.7 366.8 1670.2 370C1664.8 373.2 1655.7 375.2 1652.4 377.4C1649.2 379.6 1651.2 382.3 1651 383.3M1504.9 176.8C1504 175.4 1501.2 171.4 1499.9 168.5C1498.5 165.7 1496.9 162.3 1496.9 159.6C1496.9 156.9 1497.1 154.4 1499.9 152.2C1502.6 150 1508.2 147.6 1513.2 146.3C1518.1 145 1526.8 144.6 1529.5 144.2M1646.5 193.7C1648.5 195.9 1655.4 201.4 1658.4 207C1661.3 212.7 1662.6 221.9 1664.3 227.8C1666 233.7 1665.8 238.1 1668.7 242.6C1671.7 247 1677.9 250.7 1682.1 254.4C1686.3 258.1 1692 261.4 1693.9 264.8C1695.9 268.3 1694.9 271.5 1693.9 275.2C1692.9 278.9 1691 281.6 1688 287C1685 292.5 1680.1 300.4 1676.1 307.8C1672.2 315.2 1669.2 325.6 1664.3 331.5C1659.4 337.4 1649.5 341.4 1646.5 343.3M1645 245.6C1644.8 250 1644.3 261.9 1643.6 272.2C1642.8 282.6 1641.8 293 1640.6 307.8C1639.4 322.6 1637.1 350.2 1636.1 361.1C1635.2 372 1634.9 371 1634.7 373M1645 258.9C1650.2 259.9 1670 263.1 1676.1 264.8C1682.3 266.5 1681.1 268.5 1682.1 269.3M1643.6 272.2C1651.5 273.2 1675.7 275.9 1691 278.1C1706.3 280.4 1728 284.3 1735.4 285.6M1622.8 367C1624.5 365.8 1631 360.6 1633.2 359.6C1635.4 358.6 1635.7 360.9 1636.1 361.1M1622.8 367L1628.7 375.9M1636.1 347.8C1638.1 348 1645.8 347.5 1648 349.3C1650.2 351 1645.8 354.9 1649.5 358.1C1653.2 361.4 1665.8 366.5 1670.2 368.5C1674.7 370.5 1672.7 362.3 1676.1 370C1679.6 377.7 1688 405.8 1691 414.4C1693.9 423.1 1693.4 420.6 1693.9 421.9M1689.5 404.1C1693.4 403.8 1708.9 403.3 1713.2 402.6C1717.5 401.9 1714.9 400.1 1715.3 399.6M1619.9 423.3C1625.3 423.8 1637.6 426.8 1652.4 426.3C1667.3 425.8 1698.6 419.9 1708.7 420.4C1718.9 420.9 1710.2 426.8 1713.2 429.3C1716.1 431.7 1724.3 434.2 1726.5 435.2M1619.9 423.3L1664.3 448.5M1619.9 424.8C1623.3 427 1639.1 433.5 1640.6 438.1C1642.1 442.8 1630.7 450.5 1628.7 453M1640.6 438.1L1645 448.5M1630.2 451.5L1633.2 458.9M1646.5 381.9C1646.8 383.3 1648.5 385.8 1648 390.7C1647.5 395.7 1644.3 408 1643.6 411.5M1625.8 375.9C1629.2 376.8 1640.1 381 1646.5 381.3C1652.9 381.5 1661.3 378 1664.3 377.4M1664.3 147.8C1669.2 150.2 1686.5 160.6 1693.9 162.6C1701.3 164.6 1701.3 161.6 1708.7 159.6C1716.1 157.7 1733.4 152.2 1738.4 150.7M1686.5 173C1687.8 174.2 1690.2 178.4 1693.9 180.4C1697.6 182.3 1706.3 184.1 1708.7 184.8M1628.7 452.9C1627.3 454.1 1622.3 456.8 1619.9 460C1617.4 463.2 1620.3 465.9 1613.9 471.9C1607.5 477.8 1592.2 488.4 1581.3 495.6C1570.5 502.7 1559.6 510.4 1548.7 514.8C1537.9 519.3 1526.8 522.9 1516.1 522.2C1505.5 521.6 1490.2 512.8 1485 511M1664.3 448.4C1666.5 450.4 1668.7 454.1 1677.6 460C1686.5 465.9 1708 477.5 1717.6 483.7C1727.3 489.9 1736.4 492.8 1735.4 497C1734.4 501.2 1715.7 506.9 1711.7 508.9M1735.4 516.3C1730 522.7 1710.7 544 1702.8 554.8C1694.9 565.7 1690.5 570.6 1688 581.5C1685.5 592.3 1692 605.7 1688 620C1684 634.3 1671.7 653.6 1664.3 667.4C1656.9 681.2 1650 691.6 1643.6 703C1637.1 714.3 1633.2 724.7 1625.8 735.6C1618.4 746.4 1607.5 755.8 1599.1 768.1C1590.7 780.5 1579.4 802.7 1575.4 809.6M1623.7 740C1622.2 742.2 1619.3 747.9 1614.8 753.3C1610.4 758.8 1602.5 765.4 1597 772.6C1591.6 779.8 1586.7 789.4 1582.2 796.3C1577.8 803.2 1575.8 807.2 1570.4 814.1C1564.9 821 1555.6 830.4 1549.6 837.8C1543.7 845.2 1538.8 852.6 1534.8 858.5C1530.9 864.4 1529.9 868.4 1525.9 873.3C1522 878.3 1516 884.7 1511.1 888.1C1506.2 891.6 1502.7 894.3 1496.3 894.1C1489.9 893.8 1479 886.8 1472.6 886.7C1466.2 886.6 1463.2 893.2 1457.8 893.5C1452.3 893.7 1449.1 886.5 1440 888.1C1430.9 889.8 1409.1 901 1403 903.6M348.9 560.7C367.2 556 419.5 542.6 458.5 532.6C497.5 522.6 560.5 506.9 583 500.6C605.4 494.3 589.4 498.7 593.3 495C597.3 491.3 602.2 484.2 606.7 478.4C611.1 472.5 617.8 463.1 620 460M799.3 460C795.8 467.4 784.9 489.6 778.5 504.4C772.1 519.3 766.7 536.5 760.7 548.9C754.8 561.2 759.3 557 743 578.5C726.7 600 680.7 657 663 677.8C645.2 698.5 647.7 692.3 636.3 703C624.9 713.6 605.7 730.1 594.8 741.5C584 752.8 579.5 759.8 571.1 771.1C562.7 782.5 548.9 803.2 544.4 809.6M691.1 606.7C693.8 604 696.8 599 707.4 590.4C718 581.7 744.4 565.7 754.8 554.8C765.2 544 765.9 533.6 769.6 525.2C773.3 516.8 777.5 512.8 777 504.4C776.5 496 766.9 482.2 766.7 474.8C766.4 467.4 774.1 462.5 775.6 460M734.1 460C733.1 462.5 727.9 471.6 728.1 474.8C728.4 478 734.3 478.5 735.6 479.3M775.6 463L790.4 474.8M774.1 514.8C775.6 515.1 781.7 514.8 783 516.3C784.2 517.8 783.2 522.6 781.5 523.7C779.8 524.8 774.1 523 772.6 522.8M784.4 543L772.6 574.1M735.6 554.8C737.8 555.3 742.7 554.6 748.9 557.8C755.1 561 768.6 571.4 772.6 574.1M411.1 910C414.1 908.3 421 903.8 428.9 899.6C436.8 895.4 447.7 891 458.5 884.8C469.4 878.6 484.2 870 494.1 862.6C504 855.2 509.4 849.5 517.8 840.4C526.2 831.2 540 813.2 544.4 807.8M544.4 807.8C545.7 809 550.6 808.3 551.9 815.2C553.1 822.1 550.6 839.6 551.9 849.3C553.1 858.9 556.1 866.3 559.3 873C562.4 879.6 568.6 886.5 570.5 889.3M730.5 424C735.4 419.1 750.9 404.3 760 394.5C769.1 384.7 778 374.1 785 365C792 355.9 799.1 344.2 801.9 340M743 419.7C750 412.7 774.5 388.2 785 377.7C795.5 367.2 802.5 360.2 806 356.7M785 430C789.9 425.5 804.7 411.7 814.5 403C824.3 394.3 834 385.4 843.8 377.7C853.5 370 868.1 360.2 873 356.7M827.7 212.7C829.2 214.3 833.8 219.5 836.6 222.4C839.5 225.2 842.1 227.3 844.8 229.8C847.6 232.3 850.4 234.8 853 237.3C855.6 239.7 858 242.5 860.5 244.7C863 246.9 865.3 248.6 867.9 250.7C870.5 252.8 873.1 254.6 876.1 257.4C879.1 260.1 882.7 264.2 885.8 267.1C888.9 269.9 891.5 272 894.8 274.5C898 277 902.5 279.7 905.2 282C907.9 284.2 910.2 286.9 911.1 287.9M836.6 220.1L851.5 209.7M844.8 227.6L860.5 215.6M846.3 241.7C847.4 241 849.8 239.6 853 237.3C856.3 234.9 863.3 228.8 865.7 227.6C868.1 226.3 867.1 227.9 867.2 229.8C867.3 231.7 867.6 236.3 866.4 238.7C865.3 241.2 862.2 243.1 860.5 244.7C858.7 246.3 856.8 247.8 856 248.4M804 359L823 363L819 376L806 378M796 416L806 424M808 402L820 412M822 390L834 400M1676.1 520.7L1682.1 511.9L1696.9 512.7L1705.8 516.3L1729.5 519.3M1676.1 520.7L1680.6 527.6L1713.2 532.6L1729.5 519.3M1686.5 513.3L1684.4 528.7M1693.9 513.3L1692.4 529.9M1702.8 516.3L1701.3 531.1M1678.5 520.7L1720.6 523.7M1711.7 508.9L1710.2 516.3M1711.7 508.9L1726.5 507.4L1723.6 511.9M1729.5 519.3L1735.4 516.3" fill="none" stroke="#fbee96" stroke-width="2.8" stroke-linejoin="round" stroke-linecap="round"/><path d="M348.9 153.7C357.3 155.7 386.9 160.9 399.3 165.6C411.6 170.2 413.1 176.2 423 181.9C432.8 187.5 442.7 194 458.5 199.6C474.3 205.3 500.5 211 517.8 215.9C535.1 220.9 546.4 223.3 562.2 229.3C578 235.2 602.2 246.3 612.6 251.5C623 256.7 618.5 254.9 624.4 260.4C630.4 265.8 641.2 278.4 648.1 284.1C655.1 289.8 660 290.9 665.9 294.4C671.9 298 680.7 303.6 683.7 305.4M683.7 305.4C687.2 305.1 694.6 304.3 704.4 303.3C714.3 302.4 730.6 301.8 743 299.8C755.3 297.8 771.1 292.7 778.5 291.5C785.9 290.2 785.9 292.2 787.4 292.4M683.7 305.4C684.9 308.3 690.9 314.8 691.1 322.6C691.4 330.4 685.4 343.8 685.2 352.2C684.9 360.6 686.4 366 689.6 373C692.8 379.9 698 387.3 704.4 393.7C710.9 400.1 722.7 407.3 728.1 411.5C733.6 415.7 735.6 417.7 737 418.9M744.4 135.9C745.7 137.9 748.6 142.6 751.9 147.8C755.1 153 758.3 158.6 763.7 167C769.1 175.4 779 191.2 784.4 198.1C789.9 205.1 791.9 206.5 796.3 208.5C800.7 210.5 806.2 210 811.1 210C816 210 821.2 208.6 825.9 208.5C830.6 208.4 837 209.3 839.3 209.4M763.7 167.9C760.5 169.8 749.9 173.4 744.4 178.9C739 184.4 735.1 194.9 731.1 201.1C727.2 207.3 722.7 211 720.7 215.9C718.8 220.9 720.7 222.3 719.3 230.7C717.8 239.1 714.3 254.2 711.9 266.3C709.4 278.4 705.7 297.2 704.4 303.3M719.3 230.7C720.2 234.7 722.2 246 725.2 254.4C728.1 262.8 733.8 273.7 737 281.1C740.2 288.5 741.5 294.7 744.4 298.9C747.4 303.1 748.1 302.3 754.8 306.3C761.5 310.2 776.5 317.9 784.4 322.6C792.3 327.3 799.3 332.5 802.2 334.4M692.6 236.7C695.3 237.2 705.2 238.4 708.9 239.6C712.6 240.9 713.8 243.3 714.8 244.1M744.4 295.9L758.4 273.7M875.7 135.9C875.7 139.6 881 151.2 875.7 158.1C870.4 165.1 852 172.2 843.7 177.4C835.4 182.6 831.1 184.8 825.9 189.3C820.7 193.7 814.8 201.6 812.6 204.1M606.7 479.6C609.6 474.7 619 456.4 624.4 450C629.9 443.6 632.3 442.3 639.3 441.1C646.2 439.9 655.1 442.3 665.9 442.6C676.8 442.8 696 443.8 704.4 442.6C712.8 441.4 714.3 436.4 716.3 435.2M737 438.1C736 441.1 732.8 449.5 731.1 455.9C729.4 462.3 726.2 472.8 726.7 476.7C727.2 480.5 732.8 478.6 734.1 479M740 438.1C741 439.1 744.7 441.6 745.9 444.1C747.2 446.5 747.2 451.5 747.4 453M751.9 426.3C753.3 428.8 756.3 435.7 760.7 441.1C765.2 446.5 773.6 454 778.5 458.9C783.5 463.8 788.4 468.8 790.4 470.7M800.7 439.6C797.5 443.3 787.2 455.2 781.5 461.9C775.8 468.5 769.1 476.7 766.7 479.6M814.1 426.3C811.1 431.2 800.2 447 796.3 455.9C792.3 464.8 791.4 475.7 790.4 479.6M728.1 420.4C733.6 421.9 750.4 426.8 760.7 429.3C771.1 431.7 785.4 434.2 790.4 435.2M876.3 135.9C876.3 139.9 874.1 156.4 876.3 159.6C878.5 162.8 882.7 157.3 889.6 155.2C896.5 153.1 910.4 147.7 917.8 147.2C925.2 146.7 928.6 149.2 934.1 152.2C939.5 155.3 945.7 163.1 950.4 165.6C955.1 168 960.2 166.8 962.2 167M981.5 138.9C982.2 140.9 984.7 145.8 985.9 150.7C987.2 155.7 988.4 165.6 988.9 168.5M1046.7 152.2C1049.4 154 1057 161.9 1063 162.6C1068.9 163.3 1076.5 155.9 1082.2 156.7C1087.9 157.4 1092.3 162.6 1097 167C1101.7 171.5 1109.4 177.2 1110.4 183.3C1111.4 189.5 1105.7 198.6 1103 204.1C1100.2 209.5 1098.5 212.5 1094.1 215.9C1089.6 219.4 1080.2 220.9 1076.3 224.8C1072.3 228.8 1071.6 234.7 1070.4 239.6C1069.1 244.6 1071.4 250 1068.9 254.4C1066.4 258.9 1058.3 262.8 1055.6 266.3C1052.8 269.8 1053.1 273.7 1052.6 275.2M1052.6 275.2C1058 275.3 1073.8 275.8 1085.2 275.8C1096.5 275.8 1113.6 273.8 1120.7 275.2C1127.9 276.6 1126.9 282.6 1128.1 284.1M777 479.6C780.5 474.7 790.9 459.9 797.8 450C804.7 440.1 811.1 430.7 818.5 420.4C825.9 410 834.3 396.7 842.2 387.8C850.1 378.9 858 373.2 865.9 367C873.8 360.9 879.3 356.2 889.6 350.7C900 345.3 915.3 341.1 928.1 334.4C941 327.8 955.3 316.4 966.7 310.7C978 305.1 984.9 303.6 996.3 300.4C1007.7 297.2 1020 294 1034.8 291.5C1049.6 289 1069.6 286.9 1085.2 285.6C1100.7 284.2 1113.3 282.5 1128.1 283.5C1143 284.5 1152.1 286.4 1174.1 291.5C1196 296.5 1245.7 310 1260 313.7M788.9 479.6C793.8 472.2 807.7 450 818.5 435.2C829.4 420.4 844.2 402.6 854.1 390.7C864 378.9 870.4 371 877.8 364.1C885.2 357.2 890.6 352.7 898.5 349.3C906.4 345.8 920 345.3 925.2 343.3C930.4 341.4 929.6 339.1 929.6 337.4C929.6 335.7 925.9 333.7 925.2 333M895.6 349.3C897 351.2 901.5 358.1 904.4 361.1C907.4 364.1 909.9 364.6 913.3 367C916.8 369.5 923.2 374.4 925.2 375.9M948.9 398.1C951.9 400.4 958.8 405.3 966.7 411.5C974.6 417.7 987.7 431 996.3 435.2C1004.9 439.4 1012.1 434.4 1018.5 436.7C1024.9 438.9 1029.6 444.6 1034.8 448.5C1040 452.5 1047.2 458.4 1049.6 460.4M1100 284.1C1111.9 284.3 1136.5 278.4 1171.1 285.6C1205.7 292.7 1276.8 317.7 1307.4 327C1338 336.4 1325.2 333.7 1354.8 341.9C1384.4 350 1441.2 362.6 1485.2 375.9C1529.1 389.3 1596.3 414.2 1618.5 421.9M1100 276.7C1103.5 276.5 1116 274.5 1120.7 275.8C1125.4 277 1128.6 280 1128.1 284.1C1127.7 288.2 1122.5 295.4 1117.8 300.4C1113.1 305.3 1103 311.5 1100 313.7M1168.1 287C1171.6 288 1182 291.7 1188.9 293C1195.8 294.2 1204.2 299.9 1209.6 294.4C1215.1 289 1217.5 271.5 1221.5 260.4C1225.4 249.3 1231.1 239.6 1233.3 227.8C1235.6 215.9 1236.3 199.1 1234.8 189.3C1233.3 179.4 1230.1 176.4 1224.4 168.5C1218.8 160.6 1206.7 147.3 1200.7 141.9C1194.8 136.4 1190.9 136.9 1188.9 135.9M1129.6 135.9C1129.4 138.4 1127.2 146.8 1128.1 150.7C1129.1 154.7 1134.3 158.1 1135.6 159.6M1236.3 224.8C1239.3 220.1 1249.9 201.9 1254.1 196.7C1258.3 191.5 1259.8 196.7 1261.5 193.7C1263.2 190.7 1263.2 181.9 1264.4 178.9C1265.7 175.9 1263 175.4 1268.9 175.9C1274.8 176.4 1294.8 180.9 1300 181.9M1261.5 193.7C1264.7 194 1276.5 193.5 1280.7 195.2C1284.9 196.9 1282.7 201.1 1286.7 204.1C1290.6 207 1301 210 1304.4 213C1307.9 215.9 1307.4 217.4 1307.4 221.9C1307.4 226.3 1301 231.2 1304.4 239.6C1307.9 248 1325.7 262.3 1328.1 272.2C1330.6 282.1 1322.7 289.8 1319.3 298.9C1315.8 308 1309.4 322.3 1307.4 327M1408.1 164.1C1407.9 169.3 1407.7 184.6 1406.7 195.2C1405.7 205.8 1401.7 221.6 1402.2 227.8C1402.7 234 1408.2 229.3 1409.6 232.2C1411 235.2 1411.3 240.9 1410.5 245.6C1409.8 250.2 1407.1 256.7 1405.2 260.4C1403.3 264.1 1399.8 264.3 1399.3 267.8C1398.8 271.2 1398.8 276.4 1402.2 281.1C1405.7 285.8 1417 293.5 1420 295.9M1385.9 260.4C1386.4 260.9 1386.7 262.8 1388.9 263.3C1391.1 263.8 1397.5 263.3 1399.3 263.3M1402.2 284.1C1397.8 286.3 1381 292.5 1375.6 297.4C1370.1 302.3 1371.6 307 1369.6 313.7C1367.7 320.4 1366.2 332.7 1363.7 337.4C1361.2 342.1 1356.3 341.1 1354.8 341.9M1354.8 341.9C1354.1 342.6 1350.9 344.1 1350.4 346.3C1349.9 348.5 1349.1 351.7 1351.9 355.2C1354.6 358.6 1361.2 361.6 1366.7 367C1372.1 372.5 1379.5 383.1 1384.4 387.8C1389.4 392.5 1391.9 393.7 1396.3 395.2C1400.7 396.7 1404.7 396.7 1411.1 396.7C1417.5 396.7 1428.6 394.3 1434.8 395.2C1441 396.1 1445.9 400.9 1448.1 402M1433.3 226.3C1433.3 228.5 1432.3 235.9 1433.3 239.6C1434.3 243.3 1438 244.6 1439.3 248.5C1440.5 252.5 1438 258.9 1440.7 263.3C1443.5 267.8 1450.1 271.2 1455.6 275.2C1461 279.1 1466.4 282.1 1473.3 287C1480.2 292 1489.1 299.9 1497 304.8C1504.9 309.8 1512.8 312.2 1520.7 316.7C1528.6 321.1 1539.5 329.3 1544.4 331.5C1549.4 333.7 1545.4 328 1550.4 330C1555.3 332 1565.2 337.7 1574.1 343.3C1583 349 1594.3 358.6 1603.7 364.1C1613.1 369.5 1622.5 373 1630.4 375.9C1638.3 378.9 1646.2 381.1 1651.1 381.9C1656 382.6 1658.5 380.6 1660 380.4M1100 319.6C1103 327 1112.3 352.2 1117.8 364.1C1123.2 375.9 1124.2 379.9 1132.6 390.7C1141 401.6 1158.3 418.4 1168.1 429.3C1178 440.1 1191.4 447.5 1191.9 455.9C1192.3 464.3 1174.6 475.7 1171.1 479.6M1200.7 464.8L1224.4 479.6M1532.4 137.4C1539.6 138.1 1560.8 141.4 1575.4 141.9C1590 142.3 1610 140.4 1619.9 140.4C1629.7 140.4 1627.3 138.6 1634.7 141.9C1642.1 145.1 1655.7 154.4 1664.3 159.6C1672.9 164.8 1679.1 168.8 1686.5 173C1693.9 177.2 1701.8 181.4 1708.7 184.8C1715.7 188.3 1723.3 190 1728 193.7C1732.7 197.4 1735.2 197.9 1736.9 207C1738.6 216.2 1738.4 235.7 1738.4 248.5C1738.4 261.4 1738.6 274.2 1736.9 284.1C1735.2 294 1733.2 299.4 1728 307.8C1722.8 316.2 1712.9 326 1705.8 334.4C1698.6 342.8 1691 352.2 1685 358.1C1679.1 364.1 1675.7 366.8 1670.2 370C1664.8 373.2 1655.7 375.2 1652.4 377.4C1649.2 379.6 1651.2 382.3 1651 383.3M1504.9 176.8C1504 175.4 1501.2 171.4 1499.9 168.5C1498.5 165.7 1496.9 162.3 1496.9 159.6C1496.9 156.9 1497.1 154.4 1499.9 152.2C1502.6 150 1508.2 147.6 1513.2 146.3C1518.1 145 1526.8 144.6 1529.5 144.2M1646.5 193.7C1648.5 195.9 1655.4 201.4 1658.4 207C1661.3 212.7 1662.6 221.9 1664.3 227.8C1666 233.7 1665.8 238.1 1668.7 242.6C1671.7 247 1677.9 250.7 1682.1 254.4C1686.3 258.1 1692 261.4 1693.9 264.8C1695.9 268.3 1694.9 271.5 1693.9 275.2C1692.9 278.9 1691 281.6 1688 287C1685 292.5 1680.1 300.4 1676.1 307.8C1672.2 315.2 1669.2 325.6 1664.3 331.5C1659.4 337.4 1649.5 341.4 1646.5 343.3M1645 245.6C1644.8 250 1644.3 261.9 1643.6 272.2C1642.8 282.6 1641.8 293 1640.6 307.8C1639.4 322.6 1637.1 350.2 1636.1 361.1C1635.2 372 1634.9 371 1634.7 373M1645 258.9C1650.2 259.9 1670 263.1 1676.1 264.8C1682.3 266.5 1681.1 268.5 1682.1 269.3M1643.6 272.2C1651.5 273.2 1675.7 275.9 1691 278.1C1706.3 280.4 1728 284.3 1735.4 285.6M1622.8 367C1624.5 365.8 1631 360.6 1633.2 359.6C1635.4 358.6 1635.7 360.9 1636.1 361.1M1622.8 367L1628.7 375.9M1636.1 347.8C1638.1 348 1645.8 347.5 1648 349.3C1650.2 351 1645.8 354.9 1649.5 358.1C1653.2 361.4 1665.8 366.5 1670.2 368.5C1674.7 370.5 1672.7 362.3 1676.1 370C1679.6 377.7 1688 405.8 1691 414.4C1693.9 423.1 1693.4 420.6 1693.9 421.9M1689.5 404.1C1693.4 403.8 1708.9 403.3 1713.2 402.6C1717.5 401.9 1714.9 400.1 1715.3 399.6M1619.9 423.3C1625.3 423.8 1637.6 426.8 1652.4 426.3C1667.3 425.8 1698.6 419.9 1708.7 420.4C1718.9 420.9 1710.2 426.8 1713.2 429.3C1716.1 431.7 1724.3 434.2 1726.5 435.2M1619.9 423.3L1664.3 448.5M1619.9 424.8C1623.3 427 1639.1 433.5 1640.6 438.1C1642.1 442.8 1630.7 450.5 1628.7 453M1640.6 438.1L1645 448.5M1630.2 451.5L1633.2 458.9M1646.5 381.9C1646.8 383.3 1648.5 385.8 1648 390.7C1647.5 395.7 1644.3 408 1643.6 411.5M1625.8 375.9C1629.2 376.8 1640.1 381 1646.5 381.3C1652.9 381.5 1661.3 378 1664.3 377.4M1664.3 147.8C1669.2 150.2 1686.5 160.6 1693.9 162.6C1701.3 164.6 1701.3 161.6 1708.7 159.6C1716.1 157.7 1733.4 152.2 1738.4 150.7M1686.5 173C1687.8 174.2 1690.2 178.4 1693.9 180.4C1697.6 182.3 1706.3 184.1 1708.7 184.8M1628.7 452.9C1627.3 454.1 1622.3 456.8 1619.9 460C1617.4 463.2 1620.3 465.9 1613.9 471.9C1607.5 477.8 1592.2 488.4 1581.3 495.6C1570.5 502.7 1559.6 510.4 1548.7 514.8C1537.9 519.3 1526.8 522.9 1516.1 522.2C1505.5 521.6 1490.2 512.8 1485 511M1664.3 448.4C1666.5 450.4 1668.7 454.1 1677.6 460C1686.5 465.9 1708 477.5 1717.6 483.7C1727.3 489.9 1736.4 492.8 1735.4 497C1734.4 501.2 1715.7 506.9 1711.7 508.9M1735.4 516.3C1730 522.7 1710.7 544 1702.8 554.8C1694.9 565.7 1690.5 570.6 1688 581.5C1685.5 592.3 1692 605.7 1688 620C1684 634.3 1671.7 653.6 1664.3 667.4C1656.9 681.2 1650 691.6 1643.6 703C1637.1 714.3 1633.2 724.7 1625.8 735.6C1618.4 746.4 1607.5 755.8 1599.1 768.1C1590.7 780.5 1579.4 802.7 1575.4 809.6M1623.7 740C1622.2 742.2 1619.3 747.9 1614.8 753.3C1610.4 758.8 1602.5 765.4 1597 772.6C1591.6 779.8 1586.7 789.4 1582.2 796.3C1577.8 803.2 1575.8 807.2 1570.4 814.1C1564.9 821 1555.6 830.4 1549.6 837.8C1543.7 845.2 1538.8 852.6 1534.8 858.5C1530.9 864.4 1529.9 868.4 1525.9 873.3C1522 878.3 1516 884.7 1511.1 888.1C1506.2 891.6 1502.7 894.3 1496.3 894.1C1489.9 893.8 1479 886.8 1472.6 886.7C1466.2 886.6 1463.2 893.2 1457.8 893.5C1452.3 893.7 1449.1 886.5 1440 888.1C1430.9 889.8 1409.1 901 1403 903.6M348.9 560.7C367.2 556 419.5 542.6 458.5 532.6C497.5 522.6 560.5 506.9 583 500.6C605.4 494.3 589.4 498.7 593.3 495C597.3 491.3 602.2 484.2 606.7 478.4C611.1 472.5 617.8 463.1 620 460M799.3 460C795.8 467.4 784.9 489.6 778.5 504.4C772.1 519.3 766.7 536.5 760.7 548.9C754.8 561.2 759.3 557 743 578.5C726.7 600 680.7 657 663 677.8C645.2 698.5 647.7 692.3 636.3 703C624.9 713.6 605.7 730.1 594.8 741.5C584 752.8 579.5 759.8 571.1 771.1C562.7 782.5 548.9 803.2 544.4 809.6M691.1 606.7C693.8 604 696.8 599 707.4 590.4C718 581.7 744.4 565.7 754.8 554.8C765.2 544 765.9 533.6 769.6 525.2C773.3 516.8 777.5 512.8 777 504.4C776.5 496 766.9 482.2 766.7 474.8C766.4 467.4 774.1 462.5 775.6 460M734.1 460C733.1 462.5 727.9 471.6 728.1 474.8C728.4 478 734.3 478.5 735.6 479.3M775.6 463L790.4 474.8M774.1 514.8C775.6 515.1 781.7 514.8 783 516.3C784.2 517.8 783.2 522.6 781.5 523.7C779.8 524.8 774.1 523 772.6 522.8M784.4 543L772.6 574.1M735.6 554.8C737.8 555.3 742.7 554.6 748.9 557.8C755.1 561 768.6 571.4 772.6 574.1M411.1 910C414.1 908.3 421 903.8 428.9 899.6C436.8 895.4 447.7 891 458.5 884.8C469.4 878.6 484.2 870 494.1 862.6C504 855.2 509.4 849.5 517.8 840.4C526.2 831.2 540 813.2 544.4 807.8M544.4 807.8C545.7 809 550.6 808.3 551.9 815.2C553.1 822.1 550.6 839.6 551.9 849.3C553.1 858.9 556.1 866.3 559.3 873C562.4 879.6 568.6 886.5 570.5 889.3M730.5 424C735.4 419.1 750.9 404.3 760 394.5C769.1 384.7 778 374.1 785 365C792 355.9 799.1 344.2 801.9 340M743 419.7C750 412.7 774.5 388.2 785 377.7C795.5 367.2 802.5 360.2 806 356.7M785 430C789.9 425.5 804.7 411.7 814.5 403C824.3 394.3 834 385.4 843.8 377.7C853.5 370 868.1 360.2 873 356.7M827.7 212.7C829.2 214.3 833.8 219.5 836.6 222.4C839.5 225.2 842.1 227.3 844.8 229.8C847.6 232.3 850.4 234.8 853 237.3C855.6 239.7 858 242.5 860.5 244.7C863 246.9 865.3 248.6 867.9 250.7C870.5 252.8 873.1 254.6 876.1 257.4C879.1 260.1 882.7 264.2 885.8 267.1C888.9 269.9 891.5 272 894.8 274.5C898 277 902.5 279.7 905.2 282C907.9 284.2 910.2 286.9 911.1 287.9M836.6 220.1L851.5 209.7M844.8 227.6L860.5 215.6M846.3 241.7C847.4 241 849.8 239.6 853 237.3C856.3 234.9 863.3 228.8 865.7 227.6C868.1 226.3 867.1 227.9 867.2 229.8C867.3 231.7 867.6 236.3 866.4 238.7C865.3 241.2 862.2 243.1 860.5 244.7C858.7 246.3 856.8 247.8 856 248.4M804 359L823 363L819 376L806 378M796 416L806 424M808 402L820 412M822 390L834 400M1676.1 520.7L1682.1 511.9L1696.9 512.7L1705.8 516.3L1729.5 519.3M1676.1 520.7L1680.6 527.6L1713.2 532.6L1729.5 519.3M1686.5 513.3L1684.4 528.7M1693.9 513.3L1692.4 529.9M1702.8 516.3L1701.3 531.1M1678.5 520.7L1720.6 523.7M1711.7 508.9L1710.2 516.3M1711.7 508.9L1726.5 507.4L1723.6 511.9M1729.5 519.3L1735.4 516.3" fill="none" stroke="#b8b8c8" stroke-width="1.7" stroke-dasharray="1.7 1.3"/><path d="" fill="none" stroke="#efe3a4" stroke-width="2.6" stroke-linejoin="round"/><path d="" fill="none" stroke="#c9c6c4" stroke-width="1.2" stroke-dasharray="1.4 1.6"/><path d="M1185.9 460C1182 464.9 1164.7 482.2 1162.2 489.6C1159.8 497 1166.7 499 1171.1 504.4C1175.6 509.9 1183.5 518.3 1188.9 522.2C1194.3 526.2 1201.2 527.2 1203.7 528.1M1200.7 465.9C1218.5 476.8 1294.1 518 1307.4 531.1C1320.7 544.2 1291.6 540 1280.7 544.4C1269.9 548.9 1254.1 553.1 1242.2 557.8C1230.4 562.5 1216.5 568.9 1209.6 572.6C1202.7 576.3 1202 577 1200.7 580C1199.5 583 1202 588.6 1202.2 590.4M1200.7 581.5C1209.6 581.2 1244.7 579.5 1254.1 580C1263.5 580.5 1258 579.8 1257 584.4C1256 589.1 1253.6 602 1248.1 608.1C1242.7 614.3 1227.9 617.5 1224.4 621.5C1221 625.4 1224 627.2 1227.4 631.9C1230.9 636.5 1241.7 644.2 1245.2 649.6C1248.6 655.1 1245.2 660.5 1248.1 664.4C1251.1 668.4 1259 668.4 1263 673.3C1266.9 678.3 1267.4 686.7 1271.9 694.1C1276.3 701.5 1284.2 711.9 1289.6 717.8C1295.1 723.7 1302.5 725.2 1304.4 729.6C1306.4 734.1 1302 742 1301.5 744.4M1202.2 605.2C1201 603.5 1198.5 597.8 1194.8 594.8C1191.1 591.9 1184.4 588.6 1180 587.4C1175.6 586.2 1174.1 584.4 1168.1 587.4C1162.2 590.4 1152.1 600.7 1144.4 605.2C1136.8 609.6 1129.6 611.1 1122.2 614.1C1114.8 617 1103.7 621.5 1100 623M1122.2 614.1C1122.5 617.5 1125.9 626.9 1123.7 634.8C1121.5 642.7 1112.8 654.1 1108.9 661.5C1104.9 668.9 1101.5 676.3 1100 679.3M1100 658.5L1108.9 661.5M788.9 581.5C789.4 584.9 791.4 593.8 791.9 602.2C792.3 610.6 792.3 621 791.9 631.9C791.4 642.7 789.9 656.5 788.9 667.4C787.9 678.3 787.4 687.2 785.9 697C784.4 706.9 782.5 717.3 780 726.7C777.5 736 772.6 748.9 771.1 753.3M785.9 634.8C786.9 634.1 788.4 630.4 791.9 630.4C795.3 630.4 803.2 631.6 806.7 634.8C810.1 638 810.6 645.2 812.6 649.6C814.6 654.1 815.6 658.5 818.5 661.5C821.5 664.4 824 666.9 830.4 667.4C836.8 667.9 851.4 663.5 857 664.4C862.7 665.4 862.7 669.9 864.4 673.3C866.2 676.8 871.1 679.3 867.4 685.2C863.7 691.1 845.9 704.2 842.2 708.9C838.5 713.6 842.7 711.9 845.2 713.3C847.7 714.8 855.1 713.6 857 717.8C859 722 855.6 732.6 857 738.5C858.5 744.4 863.5 750.4 865.9 753.3C868.4 756.3 863 755.9 871.9 756.3C880.7 756.7 902 754.5 919.3 755.7C936.5 756.9 961.2 765.6 975.6 763.7C989.9 761.8 997.8 746.2 1005.2 744.4C1012.6 742.7 1016.5 749.9 1020 753.3C1023.5 756.8 1024.9 763.2 1025.9 765.2M1055.6 615.6C1057.5 618.8 1062.5 629.1 1067.4 634.8C1072.3 640.5 1078.3 645.2 1085.2 649.6C1092.1 654.1 1102.5 664 1108.9 661.5C1115.3 659 1121.5 642.5 1123.7 634.8C1125.9 627.2 1122.5 618.8 1122.2 615.6M1091.1 623C1096.3 621.5 1113.3 616.8 1122.2 614.1C1131.1 611.4 1135.8 611.1 1144.4 606.7C1153.1 602.2 1169.1 590.6 1174.1 587.4M1110.4 661.5C1110.1 663.5 1123 656 1108.9 673.3C1094.8 690.6 1039.8 749.9 1025.9 765.2M1165.2 485.2C1164.7 485.9 1161.2 486.4 1162.2 489.6C1163.2 492.8 1167.2 499.5 1171.1 504.4C1175.1 509.4 1180.5 515.3 1185.9 519.3C1191.4 523.2 1200.7 526.7 1203.7 528.1M797.8 720.7C801.2 720.5 811.1 718.3 818.5 719.3C825.9 720.2 837.3 722.5 842.2 726.7C847.2 730.9 844.2 739.5 848.1 744.4C852.1 749.4 863 754.3 865.9 756.3M865.9 759.3C874.8 759.2 901.5 757.7 919.3 758.7C937 759.7 963.7 764.1 972.6 765.2M854.1 740C856 742.5 856 752.4 865.9 754.8C875.8 757.2 895.1 752.7 913.3 754.2C931.6 755.7 959.8 765.3 975.6 763.7C991.4 762.1 1000.5 746.4 1008.1 744.4C1015.8 742.5 1018.5 747.7 1021.5 751.9C1024.4 756 1022.7 761.7 1025.9 769.6C1029.1 777.5 1041.7 791.1 1040.7 799.3C1039.8 807.4 1021.5 813.6 1020 818.5C1018.5 823.5 1029.1 823 1031.9 828.9C1034.6 834.8 1035.6 849.9 1036.3 854.1M1036.3 854.1C1051.4 851.6 1108.6 844.3 1126.7 839.3C1144.7 834.2 1135.6 821.1 1144.4 823.9C1153.3 826.6 1167.2 844.8 1180 855.6C1192.8 866.3 1208.1 884.4 1221.5 888.1C1234.8 891.9 1253.6 879.5 1260 877.8M1300.7 740C1300 741.5 1296.3 745.4 1296.3 748.9C1296.3 752.3 1300.5 755.3 1300.7 760.7C1301 766.2 1300.7 775.1 1297.8 781.5C1294.8 787.9 1287.7 794.1 1283 799.3C1278.3 804.4 1271.6 806.2 1269.6 812.6C1267.7 819 1269.1 830.9 1271.1 837.8C1273.1 844.7 1281.2 848.9 1281.5 854.1C1281.7 859.3 1276.3 865.9 1272.6 868.9C1268.9 871.9 1264 869.1 1259.3 871.9C1254.6 874.6 1250.9 882.5 1244.4 885.2C1238 887.9 1228.1 890.6 1220.7 888.1C1213.3 885.7 1203.5 873.3 1200 870.4M1005.2 845.2C1007.7 846.9 1014.8 853.9 1020 855.6C1025.2 857.2 1033.6 855.1 1036.3 855M963.7 848.1C967.7 847.9 981 850.9 987.4 846.7C993.8 842.5 998.3 829.4 1002.2 823C1006.2 816.5 1008.4 811.4 1011.1 808.1C1013.8 804.9 1017.3 804.4 1018.5 803.7M1025.9 763.7L1049.6 740M996.3 757.8C996.8 760.7 997.3 772.1 999.3 775.6C1001.2 779 1006.2 783 1008.1 778.5C1010.1 774.1 1010.6 753.8 1011.1 748.9M769.8 751.5C769.4 751.8 768.8 751.5 767.4 753.5C766.1 755.4 762.7 759.3 761.6 763.2C760.5 767.1 760.5 772.6 760.6 776.8C760.8 781 761.1 785.3 762.6 788.5C764 791.7 767.1 794.2 769.4 796.3C771.7 798.4 774.7 799.7 776.2 801.2C777.7 802.6 776.7 805.4 778.2 805.1C779.6 804.7 783 801 785 799.2C786.9 797.4 788.9 796.8 789.8 794.3C790.8 791.9 791 787.5 790.8 784.6C790.6 781.7 788.6 780.1 788.5 776.8C788.3 773.6 789.1 769 789.8 765.1C790.6 761.2 791.6 757.4 792.8 753.5C793.9 749.6 795 746 796.7 741.8C798.3 737.6 800.2 731.4 802.5 728.1C804.8 724.9 807.4 723.9 810.3 722.3C813.2 720.7 818.4 719.1 820 718.4" fill="none" stroke="#f8e49a" stroke-width="2.5" stroke-linejoin="round"/><path d="M1185.9 460C1182 464.9 1164.7 482.2 1162.2 489.6C1159.8 497 1166.7 499 1171.1 504.4C1175.6 509.9 1183.5 518.3 1188.9 522.2C1194.3 526.2 1201.2 527.2 1203.7 528.1M1200.7 465.9C1218.5 476.8 1294.1 518 1307.4 531.1C1320.7 544.2 1291.6 540 1280.7 544.4C1269.9 548.9 1254.1 553.1 1242.2 557.8C1230.4 562.5 1216.5 568.9 1209.6 572.6C1202.7 576.3 1202 577 1200.7 580C1199.5 583 1202 588.6 1202.2 590.4M1200.7 581.5C1209.6 581.2 1244.7 579.5 1254.1 580C1263.5 580.5 1258 579.8 1257 584.4C1256 589.1 1253.6 602 1248.1 608.1C1242.7 614.3 1227.9 617.5 1224.4 621.5C1221 625.4 1224 627.2 1227.4 631.9C1230.9 636.5 1241.7 644.2 1245.2 649.6C1248.6 655.1 1245.2 660.5 1248.1 664.4C1251.1 668.4 1259 668.4 1263 673.3C1266.9 678.3 1267.4 686.7 1271.9 694.1C1276.3 701.5 1284.2 711.9 1289.6 717.8C1295.1 723.7 1302.5 725.2 1304.4 729.6C1306.4 734.1 1302 742 1301.5 744.4M1202.2 605.2C1201 603.5 1198.5 597.8 1194.8 594.8C1191.1 591.9 1184.4 588.6 1180 587.4C1175.6 586.2 1174.1 584.4 1168.1 587.4C1162.2 590.4 1152.1 600.7 1144.4 605.2C1136.8 609.6 1129.6 611.1 1122.2 614.1C1114.8 617 1103.7 621.5 1100 623M1122.2 614.1C1122.5 617.5 1125.9 626.9 1123.7 634.8C1121.5 642.7 1112.8 654.1 1108.9 661.5C1104.9 668.9 1101.5 676.3 1100 679.3M1100 658.5L1108.9 661.5M788.9 581.5C789.4 584.9 791.4 593.8 791.9 602.2C792.3 610.6 792.3 621 791.9 631.9C791.4 642.7 789.9 656.5 788.9 667.4C787.9 678.3 787.4 687.2 785.9 697C784.4 706.9 782.5 717.3 780 726.7C777.5 736 772.6 748.9 771.1 753.3M785.9 634.8C786.9 634.1 788.4 630.4 791.9 630.4C795.3 630.4 803.2 631.6 806.7 634.8C810.1 638 810.6 645.2 812.6 649.6C814.6 654.1 815.6 658.5 818.5 661.5C821.5 664.4 824 666.9 830.4 667.4C836.8 667.9 851.4 663.5 857 664.4C862.7 665.4 862.7 669.9 864.4 673.3C866.2 676.8 871.1 679.3 867.4 685.2C863.7 691.1 845.9 704.2 842.2 708.9C838.5 713.6 842.7 711.9 845.2 713.3C847.7 714.8 855.1 713.6 857 717.8C859 722 855.6 732.6 857 738.5C858.5 744.4 863.5 750.4 865.9 753.3C868.4 756.3 863 755.9 871.9 756.3C880.7 756.7 902 754.5 919.3 755.7C936.5 756.9 961.2 765.6 975.6 763.7C989.9 761.8 997.8 746.2 1005.2 744.4C1012.6 742.7 1016.5 749.9 1020 753.3C1023.5 756.8 1024.9 763.2 1025.9 765.2M1055.6 615.6C1057.5 618.8 1062.5 629.1 1067.4 634.8C1072.3 640.5 1078.3 645.2 1085.2 649.6C1092.1 654.1 1102.5 664 1108.9 661.5C1115.3 659 1121.5 642.5 1123.7 634.8C1125.9 627.2 1122.5 618.8 1122.2 615.6M1091.1 623C1096.3 621.5 1113.3 616.8 1122.2 614.1C1131.1 611.4 1135.8 611.1 1144.4 606.7C1153.1 602.2 1169.1 590.6 1174.1 587.4M1110.4 661.5C1110.1 663.5 1123 656 1108.9 673.3C1094.8 690.6 1039.8 749.9 1025.9 765.2M1165.2 485.2C1164.7 485.9 1161.2 486.4 1162.2 489.6C1163.2 492.8 1167.2 499.5 1171.1 504.4C1175.1 509.4 1180.5 515.3 1185.9 519.3C1191.4 523.2 1200.7 526.7 1203.7 528.1M797.8 720.7C801.2 720.5 811.1 718.3 818.5 719.3C825.9 720.2 837.3 722.5 842.2 726.7C847.2 730.9 844.2 739.5 848.1 744.4C852.1 749.4 863 754.3 865.9 756.3M865.9 759.3C874.8 759.2 901.5 757.7 919.3 758.7C937 759.7 963.7 764.1 972.6 765.2M854.1 740C856 742.5 856 752.4 865.9 754.8C875.8 757.2 895.1 752.7 913.3 754.2C931.6 755.7 959.8 765.3 975.6 763.7C991.4 762.1 1000.5 746.4 1008.1 744.4C1015.8 742.5 1018.5 747.7 1021.5 751.9C1024.4 756 1022.7 761.7 1025.9 769.6C1029.1 777.5 1041.7 791.1 1040.7 799.3C1039.8 807.4 1021.5 813.6 1020 818.5C1018.5 823.5 1029.1 823 1031.9 828.9C1034.6 834.8 1035.6 849.9 1036.3 854.1M1036.3 854.1C1051.4 851.6 1108.6 844.3 1126.7 839.3C1144.7 834.2 1135.6 821.1 1144.4 823.9C1153.3 826.6 1167.2 844.8 1180 855.6C1192.8 866.3 1208.1 884.4 1221.5 888.1C1234.8 891.9 1253.6 879.5 1260 877.8M1300.7 740C1300 741.5 1296.3 745.4 1296.3 748.9C1296.3 752.3 1300.5 755.3 1300.7 760.7C1301 766.2 1300.7 775.1 1297.8 781.5C1294.8 787.9 1287.7 794.1 1283 799.3C1278.3 804.4 1271.6 806.2 1269.6 812.6C1267.7 819 1269.1 830.9 1271.1 837.8C1273.1 844.7 1281.2 848.9 1281.5 854.1C1281.7 859.3 1276.3 865.9 1272.6 868.9C1268.9 871.9 1264 869.1 1259.3 871.9C1254.6 874.6 1250.9 882.5 1244.4 885.2C1238 887.9 1228.1 890.6 1220.7 888.1C1213.3 885.7 1203.5 873.3 1200 870.4M1005.2 845.2C1007.7 846.9 1014.8 853.9 1020 855.6C1025.2 857.2 1033.6 855.1 1036.3 855M963.7 848.1C967.7 847.9 981 850.9 987.4 846.7C993.8 842.5 998.3 829.4 1002.2 823C1006.2 816.5 1008.4 811.4 1011.1 808.1C1013.8 804.9 1017.3 804.4 1018.5 803.7M1025.9 763.7L1049.6 740M996.3 757.8C996.8 760.7 997.3 772.1 999.3 775.6C1001.2 779 1006.2 783 1008.1 778.5C1010.1 774.1 1010.6 753.8 1011.1 748.9M769.8 751.5C769.4 751.8 768.8 751.5 767.4 753.5C766.1 755.4 762.7 759.3 761.6 763.2C760.5 767.1 760.5 772.6 760.6 776.8C760.8 781 761.1 785.3 762.6 788.5C764 791.7 767.1 794.2 769.4 796.3C771.7 798.4 774.7 799.7 776.2 801.2C777.7 802.6 776.7 805.4 778.2 805.1C779.6 804.7 783 801 785 799.2C786.9 797.4 788.9 796.8 789.8 794.3C790.8 791.9 791 787.5 790.8 784.6C790.6 781.7 788.6 780.1 788.5 776.8C788.3 773.6 789.1 769 789.8 765.1C790.6 761.2 791.6 757.4 792.8 753.5C793.9 749.6 795 746 796.7 741.8C798.3 737.6 800.2 731.4 802.5 728.1C804.8 724.9 807.4 723.9 810.3 722.3C813.2 720.7 818.4 719.1 820 718.4" fill="none" stroke="#b8b8c8" stroke-width="1.7" stroke-dasharray="1.7 1.3"/><path d="M791.9 600.7C794.3 600.2 798.3 597.3 806.7 597.8C815.1 598.3 832.8 604.7 842.2 603.7C851.6 602.7 855.1 596.5 863 591.9C870.9 587.2 883.2 582.2 889.6 575.6C896 568.9 898 557 901.5 551.9C904.9 546.7 902 551.4 910.4 544.4C918.8 537.5 935.6 524 951.9 510.4C968.1 496.8 995.8 471.4 1008.1 463C1020.5 454.6 1019 460.5 1025.9 460C1032.8 459.5 1045.7 460 1049.6 460M867.4 686.7C871.6 681.5 882.5 666.7 892.6 655.6C902.7 644.4 919.3 629.1 928.1 620C937 610.9 938 607.2 945.9 600.7C953.8 594.3 967.7 582.7 975.6 581.5C983.5 580.2 986.9 590.6 993.3 593.3C999.8 596 1007.2 595.8 1014.1 597.8C1021 599.8 1027.9 602.2 1034.8 605.2C1041.7 608.1 1052.1 613.8 1055.6 615.6" fill="none" stroke="#f3a93c" stroke-width="0.8" stroke-linejoin="round"/><path d="M791.9 600.7C794.3 600.2 798.3 597.3 806.7 597.8C815.1 598.3 832.8 604.7 842.2 603.7C851.6 602.7 855.1 596.5 863 591.9C870.9 587.2 883.2 582.2 889.6 575.6C896 568.9 898 557 901.5 551.9C904.9 546.7 902 551.4 910.4 544.4C918.8 537.5 935.6 524 951.9 510.4C968.1 496.8 995.8 471.4 1008.1 463C1020.5 454.6 1019 460.5 1025.9 460C1032.8 459.5 1045.7 460 1049.6 460M867.4 686.7C871.6 681.5 882.5 666.7 892.6 655.6C902.7 644.4 919.3 629.1 928.1 620C937 610.9 938 607.2 945.9 600.7C953.8 594.3 967.7 582.7 975.6 581.5C983.5 580.2 986.9 590.6 993.3 593.3C999.8 596 1007.2 595.8 1014.1 597.8C1021 599.8 1027.9 602.2 1034.8 605.2C1041.7 608.1 1052.1 613.8 1055.6 615.6" fill="none" stroke="#dcc88e" stroke-width="2.8" stroke-dasharray="5.5 1.2"/><path d="M1175.6 138.9L1184.4 135.9L1185.9 143.3L1178.5 141.9Z" fill="url(#hatch)" stroke="#2c3446" stroke-width="0.7"/><path d="M1192.4 252.1C1193.2 250.9 1195.3 252.1 1196.3 254.4C1197.3 256.8 1202 270 1201.3 272.2C1200.6 274.5 1191.7 274.6 1190.4 273.7C1189 272.8 1189.5 267.3 1189.8 264.8C1190 262.3 1191.7 253.3 1192.4 252.1Z" fill="url(#hatch)" stroke="#2c3446" stroke-width="1.0"/><path d="M1372.6 290C1375.2 288.2 1393 277.3 1396.3 275.8C1399.6 274.2 1399.9 275.5 1400.7 276.7C1401.6 277.8 1405.6 283.7 1403.7 285.6C1401.8 287.4 1387.9 291.7 1384.4 292.4C1381 293 1375.5 291.2 1374.1 290.9C1372.7 290.6 1370 291.8 1372.6 290Z" fill="url(#hatch)" stroke="#2c3446" stroke-width="1.0"/><path d="M1520.1 245.6L1522.2 240.2L1528.1 239.6L1530.2 247Z" fill="url(#hatch)" stroke="#2c3446" stroke-width="0.7"/><path d="M1526.7 263.3L1540 275.2L1528.1 279Z" fill="url(#hatch)" stroke="#2c3446" stroke-width="0.7"/><path d="M1526.7 317.3C1526.1 314.3 1535 303.7 1537 303.3C1539.1 302.9 1543.5 310.8 1544.4 313.7C1545.4 316.6 1545.7 326.2 1545.3 327.9C1545 329.7 1543.7 329.8 1541.5 328.5C1539.3 327.3 1527.2 320.2 1526.7 317.3Z" fill="url(#hatch)" stroke="#2c3446" stroke-width="1.0"/><path d="M1603.7 167C1603.5 165.7 1607.2 165 1609.6 165.6C1612 166.1 1620.5 170.1 1624.4 171.5C1628.4 172.9 1642.7 175.2 1643.7 177.4C1644.7 179.7 1636.6 189.2 1633.3 190.7C1630 192.3 1618.3 191.3 1615.6 190.7C1612.8 190.2 1610.1 187.9 1609.6 186.3C1609.1 184.7 1611.8 179.7 1611.1 177.4C1610.4 175.2 1603.9 168.4 1603.7 167Z" fill="url(#hatch)" stroke="#2c3446" stroke-width="1.0"/><path d="M1617 375.9C1616.9 375.1 1627.2 377.6 1630.4 378.3C1633.6 379 1643.2 381 1644.6 381.9C1646 382.7 1643.7 385 1642.2 385.4C1640.7 385.8 1634.8 386.5 1631.9 385.4C1628.9 384.3 1617.2 376.8 1617 375.9Z" fill="url(#hatch)" stroke="#2c3446" stroke-width="1.0"/><path d="M1701.3 159.6L1707.3 158.7L1708.1 164.1L1702.8 165Z" fill="url(#hatch)" stroke="#2c3446" stroke-width="0.7"/><path d="M1689.5 395.8C1689.3 395 1693.1 396.1 1693.9 396.7C1694.8 397.2 1695.2 400 1696.9 400.2C1698.6 400.4 1707.1 398 1708.7 398.1C1710.4 398.3 1711.5 400.4 1711.1 401.1C1710.8 401.8 1707.6 403.8 1705.8 404.1C1703.9 404.3 1697.3 404.2 1695.4 403.2C1693.5 402.2 1689.7 396.5 1689.5 395.8Z" fill="url(#hatch)" stroke="#2c3446" stroke-width="1.0"/><path d="M1648 435.2L1651 435.8L1653 439.9L1650.1 439.3Z" fill="url(#hatch)" stroke="#2c3446" stroke-width="0.7"/><path d="M1687.4 449.4L1689.8 447L1690.4 452.4L1688 453Z" fill="url(#hatch)" stroke="#2c3446" stroke-width="0.7"/><path d="M1719.1 461.9L1722.7 460.7L1724.1 464.2L1720.6 465.1Z" fill="url(#hatch)" stroke="#2c3446" stroke-width="0.7"/><path d="M1639.1 474.3L1645 472.2L1647.1 479.6L1642.1 479Z" fill="url(#hatch)" stroke="#2c3446" stroke-width="0.7"/><path d="M1067.4 159.6C1068.2 158.9 1073.1 158.1 1073.9 158.7C1074.8 159.4 1075.2 163.9 1074.8 165C1074.4 166 1071.2 167.9 1070.4 167.9C1069.5 167.9 1067.8 165.9 1067.4 165C1067.1 164 1066.6 160.4 1067.4 159.6Z" fill="url(#hatch)" stroke="#2c3446" stroke-width="1.0"/><path d="M1639.1 473.3L1643.6 471.9L1647.1 478.4L1643.6 480.1Z" fill="url(#hatch)" stroke="#2c3446" stroke-width="0.7"/><path d="M1719.1 461.5L1722.7 460.6L1724.1 464.1L1720.6 465Z" fill="url(#hatch)" stroke="#2c3446" stroke-width="0.7"/><path d="M835.2 204.4l8.2 8.2m0 -8.2l-8.2 8.2M958.1 161.5l8.2 8.2m0 -8.2l-8.2 8.2M943.3 175.7l8.2 8.2m0 -8.2l-8.2 8.2M996.6 165.9l8.2 8.2m0 -8.2l-8.2 8.2M1001.7 179.2l8.2 8.2m0 -8.2l-8.2 8.2M1039.6 149.6l8.2 8.2m0 -8.2l-8.2 8.2M1054.4 196.4l8.2 8.2m0 -8.2l-8.2 8.2M1100.3 189.6l8.2 8.2m0 -8.2l-8.2 8.2M1077.5 211.2l8.2 8.2m0 -8.2l-8.2 8.2M1018.9 228.7l8.2 8.2m0 -8.2l-8.2 8.2M1052.9 261.3l8.2 8.2m0 -8.2l-8.2 8.2M1029.2 281.5l8.2 8.2m0 -8.2l-8.2 8.2M981.8 282.9l8.2 8.2m0 -8.2l-8.2 8.2M956.6 303.7l8.2 8.2m0 -8.2l-8.2 8.2M947.8 309.6l8.2 8.2m0 -8.2l-8.2 8.2M924 321.5l8.2 8.2m0 -8.2l-8.2 8.2M918.1 327.4l8.2 8.2m0 -8.2l-8.2 8.2M894.4 339.2l8.2 8.2m0 -8.2l-8.2 8.2M793.7 245.9l8.2 8.2m0 -8.2l-8.2 8.2M777.4 261.6l8.2 8.2m0 -8.2l-8.2 8.2M781.8 285.3l8.2 8.2m0 -8.2l-8.2 8.2M780.3 293.3l8.2 8.2m0 -8.2l-8.2 8.2M787.8 312.6l8.2 8.2m0 -8.2l-8.2 8.2M780.3 318.5l8.2 8.2m0 -8.2l-8.2 8.2M782.4 338l8.2 8.2m0 -8.2l-8.2 8.2M790.1 366.5l8.2 8.2m0 -8.2l-8.2 8.2M803.2 377.8l8.2 8.2m0 -8.2l-8.2 8.2M817.4 367.4l8.2 8.2m0 -8.2l-8.2 8.2M810 371.8l8.2 8.2m0 -8.2l-8.2 8.2M805.5 388.1l8.2 8.2m0 -8.2l-8.2 8.2M796.6 401.5l8.2 8.2m0 -8.2l-8.2 8.2M781.8 412.7l8.2 8.2m0 -8.2l-8.2 8.2M810 419.2l8.2 8.2m0 -8.2l-8.2 8.2M796.6 434l8.2 8.2m0 -8.2l-8.2 8.2M774.4 427.5l8.2 8.2m0 -8.2l-8.2 8.2M768.5 425.2l8.2 8.2m0 -8.2l-8.2 8.2M747.8 421.6l8.2 8.2m0 -8.2l-8.2 8.2M722 413.3l8.2 8.2m0 -8.2l-8.2 8.2M713.7 425.2l8.2 8.2m0 -8.2l-8.2 8.2M719.6 432.6l8.2 8.2m0 -8.2l-8.2 8.2M730 431.1l8.2 8.2m0 -8.2l-8.2 8.2M836.6 379.2l8.2 8.2m0 -8.2l-8.2 8.2M850 370.3l8.2 8.2m0 -8.2l-8.2 8.2M869.2 364.4l8.2 8.2m0 -8.2l-8.2 8.2M864.8 367.4l8.2 8.2m0 -8.2l-8.2 8.2M992.2 256.3l8.2 8.2m0 -8.2l-8.2 8.2M999.6 257.8l8.2 8.2m0 -8.2l-8.2 8.2M995.2 262.2l8.2 8.2m0 -8.2l-8.2 8.2M938.3 345.8l8.2 8.2m0 -8.2l-8.2 8.2M950.7 348.7l8.2 8.2m0 -8.2l-8.2 8.2M967.9 345.2l8.2 8.2m0 -8.2l-8.2 8.2M984.8 353.5l8.2 8.2m0 -8.2l-8.2 8.2M999.6 388.1l8.2 8.2m0 -8.2l-8.2 8.2M992.2 402.9l8.2 8.2m0 -8.2l-8.2 8.2M981.8 407.4l8.2 8.2m0 -8.2l-8.2 8.2M972.9 405.9l8.2 8.2m0 -8.2l-8.2 8.2M961.1 408.9l8.2 8.2m0 -8.2l-8.2 8.2M936.5 413.3l8.2 8.2m0 -8.2l-8.2 8.2M944.8 397l8.2 8.2m0 -8.2l-8.2 8.2M928.5 431.1l8.2 8.2m0 -8.2l-8.2 8.2M855.9 416.9l8.2 8.2m0 -8.2l-8.2 8.2M869.2 428.1l8.2 8.2m0 -8.2l-8.2 8.2M863.3 437l8.2 8.2m0 -8.2l-8.2 8.2M877.2 454.8l8.2 8.2m0 -8.2l-8.2 8.2M869.2 471.1l8.2 8.2m0 -8.2l-8.2 8.2M947.8 460.7l8.2 8.2m0 -8.2l-8.2 8.2M953.1 459.2l8.2 8.2m0 -8.2l-8.2 8.2M958.1 469.6l8.2 8.2m0 -8.2l-8.2 8.2M860.3 380.7l8.2 8.2m0 -8.2l-8.2 8.2M858.9 385.2l8.2 8.2m0 -8.2l-8.2 8.2M867.8 368.9l8.2 8.2m0 -8.2l-8.2 8.2M990.7 431.1l8.2 8.2m0 -8.2l-8.2 8.2M1014.4 431.1l8.2 8.2m0 -8.2l-8.2 8.2M987.8 444.4l8.2 8.2m0 -8.2l-8.2 8.2M1011.5 445.9l8.2 8.2m0 -8.2l-8.2 8.2M1004 454.8l8.2 8.2m0 -8.2l-8.2 8.2M1045.5 454.8l8.2 8.2m0 -8.2l-8.2 8.2M1070.7 454.8l8.2 8.2m0 -8.2l-8.2 8.2M1079.6 454.2l8.2 8.2m0 -8.2l-8.2 8.2M1085.5 453.3l8.2 8.2m0 -8.2l-8.2 8.2M1066.3 254.8l8.2 8.2m0 -8.2l-8.2 8.2M1072.2 254.8l8.2 8.2m0 -8.2l-8.2 8.2M1069.2 237l8.2 8.2m0 -8.2l-8.2 8.2M1072.2 240l8.2 8.2m0 -8.2l-8.2 8.2M1067.8 229.6l8.2 8.2m0 -8.2l-8.2 8.2M1204 460.7l8.2 8.2m0 -8.2l-8.2 8.2M1198.1 459.2l8.2 8.2m0 -8.2l-8.2 8.2M749.2 490.9l8.2 8.2m0 -8.2l-8.2 8.2M770 502.4l8.2 8.2m0 -8.2l-8.2 8.2M735.9 509.8l8.2 8.2m0 -8.2l-8.2 8.2M759.6 536.5l8.2 8.2m0 -8.2l-8.2 8.2M723.2 554.3l8.2 8.2m0 -8.2l-8.2 8.2M745.7 562l8.2 8.2m0 -8.2l-8.2 8.2M824.8 522.6l8.2 8.2m0 -8.2l-8.2 8.2M847 505.7l8.2 8.2m0 -8.2l-8.2 8.2M858.3 517.2l8.2 8.2m0 -8.2l-8.2 8.2M869.2 472.2l8.2 8.2m0 -8.2l-8.2 8.2M882.6 518.1l8.2 8.2m0 -8.2l-8.2 8.2M888.5 522.6l8.2 8.2m0 -8.2l-8.2 8.2M883.5 546.3l8.2 8.2m0 -8.2l-8.2 8.2M795.2 567l8.2 8.2m0 -8.2l-8.2 8.2M791.6 576.8l8.2 8.2m0 -8.2l-8.2 8.2M732.9 599l8.2 8.2m0 -8.2l-8.2 8.2M718.1 601.7l8.2 8.2m0 -8.2l-8.2 8.2M695.3 628.6l8.2 8.2m0 -8.2l-8.2 8.2M674.6 652.9l8.2 8.2m0 -8.2l-8.2 8.2M658.9 670.7l8.2 8.2m0 -8.2l-8.2 8.2M750.7 578l8.2 8.2m0 -8.2l-8.2 8.2M755.2 578l8.2 8.2m0 -8.2l-8.2 8.2M759 577.4l8.2 8.2m0 -8.2l-8.2 8.2M762.6 577.4l8.2 8.2m0 -8.2l-8.2 8.2M766.1 576.8l8.2 8.2m0 -8.2l-8.2 8.2M770 576.8l8.2 8.2m0 -8.2l-8.2 8.2M808.5 769.4l8.2 8.2m0 -8.2l-8.2 8.2M825.4 763.5l8.2 8.2m0 -8.2l-8.2 8.2M834.6 775.9l8.2 8.2m0 -8.2l-8.2 8.2M862.4 776.5l8.2 8.2m0 -8.2l-8.2 8.2M876.6 770l8.2 8.2m0 -8.2l-8.2 8.2M793.7 774.4l8.2 8.2m0 -8.2l-8.2 8.2M627.8 719.6l8.2 8.2m0 -8.2l-8.2 8.2M633.7 730l8.2 8.2m0 -8.2l-8.2 8.2M636.6 749.2l8.2 8.2m0 -8.2l-8.2 8.2M633.7 761.1l8.2 8.2m0 -8.2l-8.2 8.2M635.2 767l8.2 8.2m0 -8.2l-8.2 8.2M630.7 771.5l8.2 8.2m0 -8.2l-8.2 8.2M621.8 787.8l8.2 8.2m0 -8.2l-8.2 8.2M615.9 801.1l8.2 8.2m0 -8.2l-8.2 8.2M795.2 784.8l8.2 8.2m0 -8.2l-8.2 8.2M793.7 793.7l8.2 8.2m0 -8.2l-8.2 8.2M792.2 799.6l8.2 8.2m0 -8.2l-8.2 8.2M617.4 802.2l8.2 8.2m0 -8.2l-8.2 8.2M610 830.3l8.2 8.2m0 -8.2l-8.2 8.2M612.9 842.2l8.2 8.2m0 -8.2l-8.2 8.2M618.9 852.6l8.2 8.2m0 -8.2l-8.2 8.2M627.8 857l8.2 8.2m0 -8.2l-8.2 8.2M663.3 872.7l8.2 8.2m0 -8.2l-8.2 8.2M672.2 873.9l8.2 8.2m0 -8.2l-8.2 8.2M679.6 872.7l8.2 8.2m0 -8.2l-8.2 8.2M699.8 865.3l8.2 8.2m0 -8.2l-8.2 8.2M736.5 846.6l8.2 8.2m0 -8.2l-8.2 8.2M786.3 809l8.2 8.2m0 -8.2l-8.2 8.2M792.2 797.8l8.2 8.2m0 -8.2l-8.2 8.2M869.2 473.1l8.2 8.2m0 -8.2l-8.2 8.2M847 505.7l8.2 8.2m0 -8.2l-8.2 8.2M858.3 517.5l8.2 8.2m0 -8.2l-8.2 8.2M882.6 519l8.2 8.2m0 -8.2l-8.2 8.2M888.5 522.6l8.2 8.2m0 -8.2l-8.2 8.2M900.3 521.7l8.2 8.2m0 -8.2l-8.2 8.2M928.5 509.2l8.2 8.2m0 -8.2l-8.2 8.2M824.2 522.6l8.2 8.2m0 -8.2l-8.2 8.2M883.5 546.3l8.2 8.2m0 -8.2l-8.2 8.2M905.4 541.8l8.2 8.2m0 -8.2l-8.2 8.2M795.2 567l8.2 8.2m0 -8.2l-8.2 8.2M791.3 576.8l8.2 8.2m0 -8.2l-8.2 8.2M956.6 470.7l8.2 8.2m0 -8.2l-8.2 8.2M950.7 479.6l8.2 8.2m0 -8.2l-8.2 8.2M953.7 481.1l8.2 8.2m0 -8.2l-8.2 8.2M947.8 485.5l8.2 8.2m0 -8.2l-8.2 8.2M946.3 461.8l8.2 8.2m0 -8.2l-8.2 8.2M953.1 459.5l8.2 8.2m0 -8.2l-8.2 8.2M1004 457.4l8.2 8.2m0 -8.2l-8.2 8.2M1045.5 455.9l8.2 8.2m0 -8.2l-8.2 8.2M1070.7 455.9l8.2 8.2m0 -8.2l-8.2 8.2M1079.6 455.9l8.2 8.2m0 -8.2l-8.2 8.2M1085.5 455.9l8.2 8.2m0 -8.2l-8.2 8.2M1185.4 477.2l8.2 8.2m0 -8.2l-8.2 8.2M1227.8 478.1l8.2 8.2m0 -8.2l-8.2 8.2M1242.6 485.5l8.2 8.2m0 -8.2l-8.2 8.2M1244 515.2l8.2 8.2m0 -8.2l-8.2 8.2M1241.1 518.1l8.2 8.2m0 -8.2l-8.2 8.2M1227.2 532.9l8.2 8.2m0 -8.2l-8.2 8.2M1190.1 549.8l8.2 8.2m0 -8.2l-8.2 8.2M1164 575l8.2 8.2m0 -8.2l-8.2 8.2M1175.3 581.8l8.2 8.2m0 -8.2l-8.2 8.2M1252.9 547.8l8.2 8.2m0 -8.2l-8.2 8.2M1185.7 477.5l8.2 8.2m0 -8.2l-8.2 8.2M1204 460.9l8.2 8.2m0 -8.2l-8.2 8.2M1229.2 478.1l8.2 8.2m0 -8.2l-8.2 8.2M1242.6 485.5l8.2 8.2m0 -8.2l-8.2 8.2M1266.9 499.5l8.2 8.2m0 -8.2l-8.2 8.2M1297.4 509.8l8.2 8.2m0 -8.2l-8.2 8.2M1303.3 512.2l8.2 8.2m0 -8.2l-8.2 8.2M1330 517.5l8.2 8.2m0 -8.2l-8.2 8.2M1341.8 519l8.2 8.2m0 -8.2l-8.2 8.2M1368.5 521.7l8.2 8.2m0 -8.2l-8.2 8.2M1457.4 524.9l8.2 8.2m0 -8.2l-8.2 8.2M1508.3 521.1l8.2 8.2m0 -8.2l-8.2 8.2M1523.5 527l8.2 8.2m0 -8.2l-8.2 8.2M1530.6 533.5l8.2 8.2m0 -8.2l-8.2 8.2M1547.8 551.3l8.2 8.2m0 -8.2l-8.2 8.2M1552.2 553.7l8.2 8.2m0 -8.2l-8.2 8.2M1559.6 557.5l8.2 8.2m0 -8.2l-8.2 8.2M1567.6 556.6l8.2 8.2m0 -8.2l-8.2 8.2M1579.5 552.2l8.2 8.2m0 -8.2l-8.2 8.2M1592.8 550.7l8.2 8.2m0 -8.2l-8.2 8.2M1611.5 555.8l8.2 8.2m0 -8.2l-8.2 8.2M1581.8 579.5l8.2 8.2m0 -8.2l-8.2 8.2M1570.6 631.6l8.2 8.2m0 -8.2l-8.2 8.2M1636.6 694.4l8.2 8.2m0 -8.2l-8.2 8.2M1624.2 715.8l8.2 8.2m0 -8.2l-8.2 8.2M1590.7 754.6l8.2 8.2m0 -8.2l-8.2 8.2M1569.4 758.7l8.2 8.2m0 -8.2l-8.2 8.2M1560.5 781.8l8.2 8.2m0 -8.2l-8.2 8.2M1560.5 798.1l8.2 8.2m0 -8.2l-8.2 8.2M1245.5 514.3l8.2 8.2m0 -8.2l-8.2 8.2M1242.6 518.7l8.2 8.2m0 -8.2l-8.2 8.2M1227.8 532.3l8.2 8.2m0 -8.2l-8.2 8.2M1190.7 549.8l8.2 8.2m0 -8.2l-8.2 8.2M1164.6 574.4l8.2 8.2m0 -8.2l-8.2 8.2M1175.3 581.8l8.2 8.2m0 -8.2l-8.2 8.2M1252.9 547.8l8.2 8.2m0 -8.2l-8.2 8.2M1259.5 544.2l8.2 8.2m0 -8.2l-8.2 8.2M1276.6 539.5l8.2 8.2m0 -8.2l-8.2 8.2M1590.6 755.2l8.2 8.2m0 -8.2l-8.2 8.2M1569.8 758.7l8.2 8.2m0 -8.2l-8.2 8.2M1560.6 781.8l8.2 8.2m0 -8.2l-8.2 8.2M1560.6 798.1l8.2 8.2m0 -8.2l-8.2 8.2M1553.5 813.8l8.2 8.2m0 -8.2l-8.2 8.2M1517.4 821.8l8.2 8.2m0 -8.2l-8.2 8.2M1541.7 940.3l8.2 8.2m0 -8.2l-8.2 8.2M1439.5 962.9l8.2 8.2m0 -8.2l-8.2 8.2M1413.7 846.1l8.2 8.2m0 -8.2l-8.2 8.2M1376.6 853.8l8.2 8.2m0 -8.2l-8.2 8.2M1363.3 869.8l8.2 8.2m0 -8.2l-8.2 8.2M1370.7 908.6l8.2 8.2m0 -8.2l-8.2 8.2M1335.8 931.5l8.2 8.2m0 -8.2l-8.2 8.2M1317.7 915.5l8.2 8.2m0 -8.2l-8.2 8.2M1249.5 939.8l8.2 8.2m0 -8.2l-8.2 8.2M1233.5 945.7l8.2 8.2m0 -8.2l-8.2 8.2M1254.6 912.8l8.2 8.2m0 -8.2l-8.2 8.2M1156.6 881.7l8.2 8.2m0 -8.2l-8.2 8.2M1129.4 932.3l8.2 8.2m0 -8.2l-8.2 8.2M1114.3 928.8l8.2 8.2m0 -8.2l-8.2 8.2M1104.2 925.5l8.2 8.2m0 -8.2l-8.2 8.2M1093.5 919.6l8.2 8.2m0 -8.2l-8.2 8.2M1086.4 928.8l8.2 8.2m0 -8.2l-8.2 8.2M1082.6 923.2l8.2 8.2m0 -8.2l-8.2 8.2M1062.4 914.6l8.2 8.2m0 -8.2l-8.2 8.2M1032.8 917.2l8.2 8.2m0 -8.2l-8.2 8.2M1020.3 918.7l8.2 8.2m0 -8.2l-8.2 8.2M1010.6 917.5l8.2 8.2m0 -8.2l-8.2 8.2M1000.5 914.3l8.2 8.2m0 -8.2l-8.2 8.2M977.4 901.8l8.2 8.2m0 -8.2l-8.2 8.2M948.3 880.2l8.2 8.2m0 -8.2l-8.2 8.2M943.6 869.8l8.2 8.2m0 -8.2l-8.2 8.2M942.7 856.5l8.2 8.2m0 -8.2l-8.2 8.2M951.3 836.6l8.2 8.2m0 -8.2l-8.2 8.2M975.3 818.3l8.2 8.2m0 -8.2l-8.2 8.2M990.1 806.1l8.2 8.2m0 -8.2l-8.2 8.2M973.5 795.8l8.2 8.2m0 -8.2l-8.2 8.2M950.7 782.4l8.2 8.2m0 -8.2l-8.2 8.2M946.3 781.2l8.2 8.2m0 -8.2l-8.2 8.2M897.4 767.9l8.2 8.2m0 -8.2l-8.2 8.2M876.6 770.6l8.2 8.2m0 -8.2l-8.2 8.2M862.4 776.5l8.2 8.2m0 -8.2l-8.2 8.2M834.6 776.5l8.2 8.2m0 -8.2l-8.2 8.2M825.4 764l8.2 8.2m0 -8.2l-8.2 8.2M808.5 769.4l8.2 8.2m0 -8.2l-8.2 8.2M793.7 772.9l8.2 8.2m0 -8.2l-8.2 8.2M795.2 789.2l8.2 8.2m0 -8.2l-8.2 8.2M792.2 798.1l8.2 8.2m0 -8.2l-8.2 8.2M786.3 809.4l8.2 8.2m0 -8.2l-8.2 8.2M737.4 846.4l8.2 8.2m0 -8.2l-8.2 8.2M699.5 864.8l8.2 8.2m0 -8.2l-8.2 8.2M1741.7 337.8l8.2 8.2m0 -8.2l-8.2 8.2M1743.2 339.2l8.2 8.2m0 -8.2l-8.2 8.2M1740.8 339.8l8.2 8.2m0 -8.2l-8.2 8.2M1740.2 360l8.2 8.2m0 -8.2l-8.2 8.2M1740.2 374.8l8.2 8.2m0 -8.2l-8.2 8.2M1746.1 383.7l8.2 8.2m0 -8.2l-8.2 8.2M1746.7 389.6l8.2 8.2m0 -8.2l-8.2 8.2M1740.8 401.5l8.2 8.2m0 -8.2l-8.2 8.2M1745.5 408.9l8.2 8.2m0 -8.2l-8.2 8.2M1563.5 229.7l8.2 8.2m0 -8.2l-8.2 8.2M1589.2 229.7l8.2 8.2m0 -8.2l-8.2 8.2M1576.9 242.1l8.2 8.2m0 -8.2l-8.2 8.2M1456.9 257.3l8.2 8.2m0 -8.2l-8.2 8.2M1474.9 261.5l8.2 8.2m0 -8.2l-8.2 8.2M1494.9 268.8l8.2 8.2m0 -8.2l-8.2 8.2M1504.5 263l8.2 8.2m0 -8.2l-8.2 8.2M1503.5 272.6l8.2 8.2m0 -8.2l-8.2 8.2M1453 267.8l8.2 8.2m0 -8.2l-8.2 8.2M1470.2 282.1l8.2 8.2m0 -8.2l-8.2 8.2M1546.4 285.9l8.2 8.2m0 -8.2l-8.2 8.2M1580.7 283l8.2 8.2m0 -8.2l-8.2 8.2M1637.8 255.4l8.2 8.2m0 -8.2l-8.2 8.2M1672.1 252.6l8.2 8.2m0 -8.2l-8.2 8.2M1671.1 257.3l8.2 8.2m0 -8.2l-8.2 8.2M1632.1 309.7l8.2 8.2m0 -8.2l-8.2 8.2M1740.7 338.3l8.2 8.2m0 -8.2l-8.2 8.2M1742.6 337.3l8.2 8.2m0 -8.2l-8.2 8.2M1739.7 339.2l8.2 8.2m0 -8.2l-8.2 8.2M1668.3 198.3l8.2 8.2m0 -8.2l-8.2 8.2M1710.2 225.9l8.2 8.2m0 -8.2l-8.2 8.2M1715.9 225.9l8.2 8.2m0 -8.2l-8.2 8.2M1715.9 241.1l8.2 8.2m0 -8.2l-8.2 8.2M1588.5 138.2l8.2 8.2m0 -8.2l-8.2 8.2M1540.9 134.8l8.2 8.2m0 -8.2l-8.2 8.2M1537.6 130.8l8.2 8.2m0 -8.2l-8.2 8.2M1610.3 131.5l8.2 8.2m0 -8.2l-8.2 8.2M1617.5 131.9l8.2 8.2m0 -8.2l-8.2 8.2M1573.3 141.7l8.2 8.2m0 -8.2l-8.2 8.2M1644 142.1l8.2 8.2m0 -8.2l-8.2 8.2M1539.4 133.9l8.2 8.2m0 -8.2l-8.2 8.2M1550.8 134.1l8.2 8.2m0 -8.2l-8.2 8.2M1691 137.4l8.2 8.2m0 -8.2l-8.2 8.2M1656.5 136.9l8.2 8.2m0 -8.2l-8.2 8.2M1533.2 132.8l8.2 8.2m0 -8.2l-8.2 8.2M1665.8 134.1l8.2 8.2m0 -8.2l-8.2 8.2M1646.4 134l8.2 8.2m0 -8.2l-8.2 8.2M1692.7 133.3l8.2 8.2m0 -8.2l-8.2 8.2M1645 140.9l8.2 8.2m0 -8.2l-8.2 8.2M1674.3 142.1l8.2 8.2m0 -8.2l-8.2 8.2M1549 139.5l8.2 8.2m0 -8.2l-8.2 8.2M1556.8 130.8l8.2 8.2m0 -8.2l-8.2 8.2M1667.3 137.3l8.2 8.2m0 -8.2l-8.2 8.2M1705 138.7l8.2 8.2m0 -8.2l-8.2 8.2M1649.8 135.9l8.2 8.2m0 -8.2l-8.2 8.2M1705.2 136.1l8.2 8.2m0 -8.2l-8.2 8.2M1658 138.8l8.2 8.2m0 -8.2l-8.2 8.2M1665.7 140.2l8.2 8.2m0 -8.2l-8.2 8.2M1583.1 138.4l8.2 8.2m0 -8.2l-8.2 8.2M1529.6 132.4l8.2 8.2m0 -8.2l-8.2 8.2M1544.4 139.6l8.2 8.2m0 -8.2l-8.2 8.2M1549.2 135.1l8.2 8.2m0 -8.2l-8.2 8.2M1701.3 135.8l8.2 8.2m0 -8.2l-8.2 8.2M1644.1 140.2l8.2 8.2m0 -8.2l-8.2 8.2M1702.1 135.4l8.2 8.2m0 -8.2l-8.2 8.2M1604.5 141.9l8.2 8.2m0 -8.2l-8.2 8.2M1552.9 133.2l8.2 8.2m0 -8.2l-8.2 8.2M1573.7 137.4l8.2 8.2m0 -8.2l-8.2 8.2M1574 135.4l8.2 8.2m0 -8.2l-8.2 8.2M1602.9 141.8l8.2 8.2m0 -8.2l-8.2 8.2M1669 137.8l8.2 8.2m0 -8.2l-8.2 8.2M1660.5 141.2l8.2 8.2m0 -8.2l-8.2 8.2M1691.9 140l8.2 8.2m0 -8.2l-8.2 8.2M1544.8 151.5l8.2 8.2m0 -8.2l-8.2 8.2M1554.1 157.8l8.2 8.2m0 -8.2l-8.2 8.2M1535.2 147.8l8.2 8.2m0 -8.2l-8.2 8.2M1527.2 142.7l8.2 8.2m0 -8.2l-8.2 8.2M1531.3 143.4l8.2 8.2m0 -8.2l-8.2 8.2M1567.9 164.6l8.2 8.2m0 -8.2l-8.2 8.2M1538.1 149.1l8.2 8.2m0 -8.2l-8.2 8.2M1534.7 148.8l8.2 8.2m0 -8.2l-8.2 8.2M1548.6 153.4l8.2 8.2m0 -8.2l-8.2 8.2M1531.2 144.6l8.2 8.2m0 -8.2l-8.2 8.2M1563.5 162.8l8.2 8.2m0 -8.2l-8.2 8.2M1570.9 166.6l8.2 8.2m0 -8.2l-8.2 8.2M1549.8 157.7l8.2 8.2m0 -8.2l-8.2 8.2M1573.9 170.1l8.2 8.2m0 -8.2l-8.2 8.2M1538.6 148.3l8.2 8.2m0 -8.2l-8.2 8.2M1562.8 165l8.2 8.2m0 -8.2l-8.2 8.2M1597.3 188.8l8.2 8.2m0 -8.2l-8.2 8.2M1608.5 184.4l8.2 8.2m0 -8.2l-8.2 8.2M1605.9 183.2l8.2 8.2m0 -8.2l-8.2 8.2M1600.3 184.4l8.2 8.2m0 -8.2l-8.2 8.2M1593.5 188.6l8.2 8.2m0 -8.2l-8.2 8.2M1605.1 184.9l8.2 8.2m0 -8.2l-8.2 8.2M1608.4 185.3l8.2 8.2m0 -8.2l-8.2 8.2M1633.2 189.2l8.2 8.2m0 -8.2l-8.2 8.2M1631.3 189.2l8.2 8.2m0 -8.2l-8.2 8.2M1641.8 195.3l8.2 8.2m0 -8.2l-8.2 8.2M1638.8 191.4l8.2 8.2m0 -8.2l-8.2 8.2M1639.4 194.3l8.2 8.2m0 -8.2l-8.2 8.2M1638.7 192.7l8.2 8.2m0 -8.2l-8.2 8.2M1638.5 195.6l8.2 8.2m0 -8.2l-8.2 8.2M1717.7 173.5l8.2 8.2m0 -8.2l-8.2 8.2M1721 169.5l8.2 8.2m0 -8.2l-8.2 8.2M1646.2 171.9l8.2 8.2m0 -8.2l-8.2 8.2M1700.5 178.4l8.2 8.2m0 -8.2l-8.2 8.2M1722.6 172.8l8.2 8.2m0 -8.2l-8.2 8.2M1679.6 162.5l8.2 8.2m0 -8.2l-8.2 8.2M1721.7 175.5l8.2 8.2m0 -8.2l-8.2 8.2M1715.2 180.6l8.2 8.2m0 -8.2l-8.2 8.2M1703.1 169.5l8.2 8.2m0 -8.2l-8.2 8.2M1660.9 168.7l8.2 8.2m0 -8.2l-8.2 8.2M1661.1 161.1l8.2 8.2m0 -8.2l-8.2 8.2M1712.1 173.7l8.2 8.2m0 -8.2l-8.2 8.2M1694.8 169.4l8.2 8.2m0 -8.2l-8.2 8.2M1715.1 175l8.2 8.2m0 -8.2l-8.2 8.2M1675.8 169l8.2 8.2m0 -8.2l-8.2 8.2M1648.3 170.9l8.2 8.2m0 -8.2l-8.2 8.2M1655 169.6l8.2 8.2m0 -8.2l-8.2 8.2M1683.3 170.6l8.2 8.2m0 -8.2l-8.2 8.2M1692.3 154.5l8.2 8.2m0 -8.2l-8.2 8.2M1684.1 157.4l8.2 8.2m0 -8.2l-8.2 8.2M1704.4 168l8.2 8.2m0 -8.2l-8.2 8.2M1709.9 165.8l8.2 8.2m0 -8.2l-8.2 8.2M1692.2 162.6l8.2 8.2m0 -8.2l-8.2 8.2M1697.4 165.3l8.2 8.2m0 -8.2l-8.2 8.2M1688.9 161.8l8.2 8.2m0 -8.2l-8.2 8.2M1719.3 166.1l8.2 8.2m0 -8.2l-8.2 8.2M1695.1 166.4l8.2 8.2m0 -8.2l-8.2 8.2M1649.8 147.9l8.2 8.2m0 -8.2l-8.2 8.2M1646.8 140.2l8.2 8.2m0 -8.2l-8.2 8.2M1701 170.4l8.2 8.2m0 -8.2l-8.2 8.2M1660.6 151.9l8.2 8.2m0 -8.2l-8.2 8.2M1662.4 156.5l8.2 8.2m0 -8.2l-8.2 8.2M1682.3 212.8l8.2 8.2m0 -8.2l-8.2 8.2M1688.5 218.1l8.2 8.2m0 -8.2l-8.2 8.2M1679.4 212.2l8.2 8.2m0 -8.2l-8.2 8.2M1682.7 214.3l8.2 8.2m0 -8.2l-8.2 8.2M1691 220.9l8.2 8.2m0 -8.2l-8.2 8.2M1684.5 215.9l8.2 8.2m0 -8.2l-8.2 8.2M1761.8 144.6l8.2 8.2m0 -8.2l-8.2 8.2M1782.7 167.4l8.2 8.2m0 -8.2l-8.2 8.2M1734.1 132.4l8.2 8.2m0 -8.2l-8.2 8.2M1765 149.2l8.2 8.2m0 -8.2l-8.2 8.2M1758.9 152.1l8.2 8.2m0 -8.2l-8.2 8.2M1739.3 149.9l8.2 8.2m0 -8.2l-8.2 8.2M1762.3 143.8l8.2 8.2m0 -8.2l-8.2 8.2M1738.7 137.4l8.2 8.2m0 -8.2l-8.2 8.2M1743.4 141.1l8.2 8.2m0 -8.2l-8.2 8.2M1763 161.4l8.2 8.2m0 -8.2l-8.2 8.2M1741.9 138.1l8.2 8.2m0 -8.2l-8.2 8.2M1749.4 151.9l8.2 8.2m0 -8.2l-8.2 8.2M1739.4 143.9l8.2 8.2m0 -8.2l-8.2 8.2M1737.7 137.4l8.2 8.2m0 -8.2l-8.2 8.2M1737.2 170.9l8.2 8.2m0 -8.2l-8.2 8.2M1757 174.4l8.2 8.2m0 -8.2l-8.2 8.2M1753.9 178.4l8.2 8.2m0 -8.2l-8.2 8.2M1736.9 165.1l8.2 8.2m0 -8.2l-8.2 8.2M1769.5 179.1l8.2 8.2m0 -8.2l-8.2 8.2M1766.6 173.7l8.2 8.2m0 -8.2l-8.2 8.2M1770.6 185.9l8.2 8.2m0 -8.2l-8.2 8.2M1770.5 186.4l8.2 8.2m0 -8.2l-8.2 8.2M1775.5 181.2l8.2 8.2m0 -8.2l-8.2 8.2M1776.1 188.6l8.2 8.2m0 -8.2l-8.2 8.2M1753.3 171.7l8.2 8.2m0 -8.2l-8.2 8.2M1737.9 179.8l8.2 8.2m0 -8.2l-8.2 8.2M1744.3 169.9l8.2 8.2m0 -8.2l-8.2 8.2M1779.4 189.4l8.2 8.2m0 -8.2l-8.2 8.2M1746.8 174.1l8.2 8.2m0 -8.2l-8.2 8.2M1752 179.5l8.2 8.2m0 -8.2l-8.2 8.2M1760 184.9l8.2 8.2m0 -8.2l-8.2 8.2M1763.6 184.9l8.2 8.2m0 -8.2l-8.2 8.2M1758.6 181l8.2 8.2m0 -8.2l-8.2 8.2M1760.7 183.1l8.2 8.2m0 -8.2l-8.2 8.2M1756.7 181.1l8.2 8.2m0 -8.2l-8.2 8.2M1756.5 182.6l8.2 8.2m0 -8.2l-8.2 8.2M1755.4 215.7l8.2 8.2m0 -8.2l-8.2 8.2M1763.2 219.4l8.2 8.2m0 -8.2l-8.2 8.2M1769.9 225.2l8.2 8.2m0 -8.2l-8.2 8.2M1768.7 222.3l8.2 8.2m0 -8.2l-8.2 8.2M1767.5 227.1l8.2 8.2m0 -8.2l-8.2 8.2M1762.5 225.6l8.2 8.2m0 -8.2l-8.2 8.2M1733.6 277.7l8.2 8.2m0 -8.2l-8.2 8.2M1731.6 272.9l8.2 8.2m0 -8.2l-8.2 8.2M1734.4 258.8l8.2 8.2m0 -8.2l-8.2 8.2M1733.4 275.1l8.2 8.2m0 -8.2l-8.2 8.2M1733.8 265.3l8.2 8.2m0 -8.2l-8.2 8.2M1731.6 233.6l8.2 8.2m0 -8.2l-8.2 8.2M1734.4 238l8.2 8.2m0 -8.2l-8.2 8.2M1733.5 264.4l8.2 8.2m0 -8.2l-8.2 8.2M1731.1 258l8.2 8.2m0 -8.2l-8.2 8.2M1733.1 269.8l8.2 8.2m0 -8.2l-8.2 8.2M1731.3 266.2l8.2 8.2m0 -8.2l-8.2 8.2M1731.3 244.1l8.2 8.2m0 -8.2l-8.2 8.2M1753.4 256.4l8.2 8.2m0 -8.2l-8.2 8.2M1762.8 247.2l8.2 8.2m0 -8.2l-8.2 8.2M1751.5 262.4l8.2 8.2m0 -8.2l-8.2 8.2M1754.7 252.3l8.2 8.2m0 -8.2l-8.2 8.2M1738.3 269.7l8.2 8.2m0 -8.2l-8.2 8.2M1745.6 258.8l8.2 8.2m0 -8.2l-8.2 8.2M1736.2 271l8.2 8.2m0 -8.2l-8.2 8.2M1757.1 252.7l8.2 8.2m0 -8.2l-8.2 8.2M1750.3 258.5l8.2 8.2m0 -8.2l-8.2 8.2M1743.9 264.9l8.2 8.2m0 -8.2l-8.2 8.2M1767.3 243.5l8.2 8.2m0 -8.2l-8.2 8.2M1752.3 264.9l8.2 8.2m0 -8.2l-8.2 8.2M1746.5 257.5l8.2 8.2m0 -8.2l-8.2 8.2M1737.7 321l8.2 8.2m0 -8.2l-8.2 8.2M1735.6 302.2l8.2 8.2m0 -8.2l-8.2 8.2M1736.4 300.6l8.2 8.2m0 -8.2l-8.2 8.2M1738.9 318.5l8.2 8.2m0 -8.2l-8.2 8.2M1738.3 318.1l8.2 8.2m0 -8.2l-8.2 8.2M1734.9 297.3l8.2 8.2m0 -8.2l-8.2 8.2M1735 304.3l8.2 8.2m0 -8.2l-8.2 8.2M1524.7 254.1l8.2 8.2m0 -8.2l-8.2 8.2M1521.4 272.1l8.2 8.2m0 -8.2l-8.2 8.2M1519.4 283.1l8.2 8.2m0 -8.2l-8.2 8.2M1522.6 255.1l8.2 8.2m0 -8.2l-8.2 8.2M1518.3 283.3l8.2 8.2m0 -8.2l-8.2 8.2M1521 258.9l8.2 8.2m0 -8.2l-8.2 8.2M1526.3 247l8.2 8.2m0 -8.2l-8.2 8.2M1517 280.2l8.2 8.2m0 -8.2l-8.2 8.2M1520 263.8l8.2 8.2m0 -8.2l-8.2 8.2M1520.1 283.8l8.2 8.2m0 -8.2l-8.2 8.2M1522.7 271.4l8.2 8.2m0 -8.2l-8.2 8.2M1522.3 263.7l8.2 8.2m0 -8.2l-8.2 8.2M1538.4 231l8.2 8.2m0 -8.2l-8.2 8.2M1536.7 229.8l8.2 8.2m0 -8.2l-8.2 8.2M1580 259.1l8.2 8.2m0 -8.2l-8.2 8.2M1553.9 260l8.2 8.2m0 -8.2l-8.2 8.2M1582.7 259.7l8.2 8.2m0 -8.2l-8.2 8.2M1552.7 258.9l8.2 8.2m0 -8.2l-8.2 8.2M1545.4 258.4l8.2 8.2m0 -8.2l-8.2 8.2M1580.2 258.4l8.2 8.2m0 -8.2l-8.2 8.2M1581.7 259.1l8.2 8.2m0 -8.2l-8.2 8.2M1544.2 258l8.2 8.2m0 -8.2l-8.2 8.2M1553.2 258.5l8.2 8.2m0 -8.2l-8.2 8.2M1550.8 260.4l8.2 8.2m0 -8.2l-8.2 8.2M1514.6 308.9l8.2 8.2m0 -8.2l-8.2 8.2M1508.4 305.6l8.2 8.2m0 -8.2l-8.2 8.2M1495.7 301.9l8.2 8.2m0 -8.2l-8.2 8.2M1498.3 301.4l8.2 8.2m0 -8.2l-8.2 8.2M1516.8 309.8l8.2 8.2m0 -8.2l-8.2 8.2M1501.2 302.3l8.2 8.2m0 -8.2l-8.2 8.2M1521.8 313.4l8.2 8.2m0 -8.2l-8.2 8.2M1493.7 300.4l8.2 8.2m0 -8.2l-8.2 8.2M1518.7 311.5l8.2 8.2m0 -8.2l-8.2 8.2M1520.6 282.1l8.2 8.2m0 -8.2l-8.2 8.2M1542.1 307.7l8.2 8.2m0 -8.2l-8.2 8.2M1523.3 282.7l8.2 8.2m0 -8.2l-8.2 8.2M1534.2 298.2l8.2 8.2m0 -8.2l-8.2 8.2M1538.1 302.7l8.2 8.2m0 -8.2l-8.2 8.2M1531.7 288.1l8.2 8.2m0 -8.2l-8.2 8.2M1535.6 305.9l8.2 8.2m0 -8.2l-8.2 8.2M1533.4 294.6l8.2 8.2m0 -8.2l-8.2 8.2M1528.1 287.7l8.2 8.2m0 -8.2l-8.2 8.2M1520.1 281.9l8.2 8.2m0 -8.2l-8.2 8.2M1532.8 293.6l8.2 8.2m0 -8.2l-8.2 8.2M1529.8 294.8l8.2 8.2m0 -8.2l-8.2 8.2M1560.4 307.8l8.2 8.2m0 -8.2l-8.2 8.2M1565.8 311l8.2 8.2m0 -8.2l-8.2 8.2M1554.7 304.5l8.2 8.2m0 -8.2l-8.2 8.2M1545 303.2l8.2 8.2m0 -8.2l-8.2 8.2M1559.6 307.3l8.2 8.2m0 -8.2l-8.2 8.2M1565.5 306.8l8.2 8.2m0 -8.2l-8.2 8.2M1541.5 297l8.2 8.2m0 -8.2l-8.2 8.2M1557.1 313.9l8.2 8.2m0 -8.2l-8.2 8.2M1562.3 307.9l8.2 8.2m0 -8.2l-8.2 8.2M1566.2 319.6l8.2 8.2m0 -8.2l-8.2 8.2M1545.4 304.9l8.2 8.2m0 -8.2l-8.2 8.2M1555.9 302.9l8.2 8.2m0 -8.2l-8.2 8.2M1544.2 299.9l8.2 8.2m0 -8.2l-8.2 8.2M1565.7 305.8l8.2 8.2m0 -8.2l-8.2 8.2M1577.6 288.8l8.2 8.2m0 -8.2l-8.2 8.2M1568.8 282.1l8.2 8.2m0 -8.2l-8.2 8.2M1584.5 287.9l8.2 8.2m0 -8.2l-8.2 8.2M1595.1 285.1l8.2 8.2m0 -8.2l-8.2 8.2M1575.5 289l8.2 8.2m0 -8.2l-8.2 8.2M1585.9 282.3l8.2 8.2m0 -8.2l-8.2 8.2M1578.8 282.5l8.2 8.2m0 -8.2l-8.2 8.2M1569.1 284l8.2 8.2m0 -8.2l-8.2 8.2M1569.4 321.2l8.2 8.2m0 -8.2l-8.2 8.2M1578.5 334l8.2 8.2m0 -8.2l-8.2 8.2M1578.5 331.7l8.2 8.2m0 -8.2l-8.2 8.2M1560.6 316.7l8.2 8.2m0 -8.2l-8.2 8.2M1577.4 333.2l8.2 8.2m0 -8.2l-8.2 8.2M1576.2 333l8.2 8.2m0 -8.2l-8.2 8.2M1578.1 329.5l8.2 8.2m0 -8.2l-8.2 8.2M1558.3 319.1l8.2 8.2m0 -8.2l-8.2 8.2M1566.3 323.3l8.2 8.2m0 -8.2l-8.2 8.2M1597.4 336.9l8.2 8.2m0 -8.2l-8.2 8.2M1612.1 336l8.2 8.2m0 -8.2l-8.2 8.2M1596.2 331.1l8.2 8.2m0 -8.2l-8.2 8.2M1623.5 335.8l8.2 8.2m0 -8.2l-8.2 8.2M1628.1 333.7l8.2 8.2m0 -8.2l-8.2 8.2M1608.7 337.1l8.2 8.2m0 -8.2l-8.2 8.2M1599.8 333.8l8.2 8.2m0 -8.2l-8.2 8.2M1609.5 332.6l8.2 8.2m0 -8.2l-8.2 8.2M1624.9 337l8.2 8.2m0 -8.2l-8.2 8.2M1622.5 334l8.2 8.2m0 -8.2l-8.2 8.2M1596.9 335.8l8.2 8.2m0 -8.2l-8.2 8.2M1583.1 335.2l8.2 8.2m0 -8.2l-8.2 8.2M1591.2 331.2l8.2 8.2m0 -8.2l-8.2 8.2M1609.1 337.5l8.2 8.2m0 -8.2l-8.2 8.2M1630.7 333.8l8.2 8.2m0 -8.2l-8.2 8.2M1582.7 333.7l8.2 8.2m0 -8.2l-8.2 8.2M1618.2 333.3l8.2 8.2m0 -8.2l-8.2 8.2M1603.6 335.4l8.2 8.2m0 -8.2l-8.2 8.2M1622.6 335.9l8.2 8.2m0 -8.2l-8.2 8.2M1589.2 332.5l8.2 8.2m0 -8.2l-8.2 8.2M1659.7 312.3l8.2 8.2m0 -8.2l-8.2 8.2M1674.9 287.9l8.2 8.2m0 -8.2l-8.2 8.2M1681.4 287.6l8.2 8.2m0 -8.2l-8.2 8.2M1670.4 300.4l8.2 8.2m0 -8.2l-8.2 8.2M1661.3 309.4l8.2 8.2m0 -8.2l-8.2 8.2M1660.2 312.8l8.2 8.2m0 -8.2l-8.2 8.2M1666.9 307.8l8.2 8.2m0 -8.2l-8.2 8.2M1642.1 329.1l8.2 8.2m0 -8.2l-8.2 8.2M1678 288.4l8.2 8.2m0 -8.2l-8.2 8.2M1662.9 310.7l8.2 8.2m0 -8.2l-8.2 8.2M1647.1 326.1l8.2 8.2m0 -8.2l-8.2 8.2M1654.5 320l8.2 8.2m0 -8.2l-8.2 8.2M1660.1 310.4l8.2 8.2m0 -8.2l-8.2 8.2M1666.8 297.3l8.2 8.2m0 -8.2l-8.2 8.2M1666.6 289.8l8.2 8.2m0 -8.2l-8.2 8.2M1665.6 287.7l8.2 8.2m0 -8.2l-8.2 8.2M1658.9 297.6l8.2 8.2m0 -8.2l-8.2 8.2M1735.8 302.7l8.2 8.2m0 -8.2l-8.2 8.2M1733.3 298.9l8.2 8.2m0 -8.2l-8.2 8.2M1736.3 309.6l8.2 8.2m0 -8.2l-8.2 8.2M1735.3 301.4l8.2 8.2m0 -8.2l-8.2 8.2M1734.5 305.8l8.2 8.2m0 -8.2l-8.2 8.2" fill="none" stroke="#ff1a14" stroke-width="1.1" stroke-opacity="0.78"/><path d="M902.3 150.8l5 -4M901.6 149.6l5 -4M914.5 139l5 -4M902.5 148.6l5 -4M904.1 144.9l5 -4M914.2 147.3l5 -4M897.1 149.7l5 -4M896.8 150.6l5 -4M901.9 147.5l5 -4M910.2 147.4l5 -4M898.2 141.7l5 -4M909.8 149.3l5 -4M900.8 149.7l5 -4M906.7 149l5 -4M894.3 146l5 -4M908.6 149.3l5 -4M908.5 139.3l5 -4M905.3 148.6l5 -4M916 144l5 -4M903 147.1l5 -4M908.5 145.6l5 -4M909.7 144.5l5 -4M1049.7 143.3l5 -4M1049.2 142.8l5 -4M1041.3 148.4l5 -4M1049.9 143.2l5 -4M1049.4 148.1l5 -4M1044.1 144.7l5 -4M1050.9 146.7l5 -4M1047 138.4l5 -4M1054.1 146l5 -4M1048.6 144.1l5 -4M1049.7 143.7l5 -4M1043.9 142.7l5 -4M1045.8 143.1l5 -4M1043.3 147l5 -4M1042.6 147.1l5 -4M1043.9 146.1l5 -4M1054.7 145.6l5 -4M1045.2 145.2l5 -4M1049.2 139.5l5 -4M1045.8 145.5l5 -4M1046.4 145.3l5 -4M1051.8 147.4l5 -4M1052.6 146.9l5 -4M1047.2 144.9l5 -4M1047.3 144l5 -4M1047.7 139.6l5 -4M1047 144.9l5 -4M1044.1 144.9l5 -4M1050.8 144.5l5 -4M1057.8 136.8l5 -4M1047.6 139.2l5 -4M1052.9 153.4l5 -4M1037.2 145.4l5 -4M1050.8 144l5 -4M1051 137.9l5 -4M1052.3 146.2l5 -4M1048.6 143.1l5 -4M1051.4 143.5l5 -4M1049.5 143.4l5 -4M1038.4 144.9l5 -4M858.3 273.1l5 -4M854 270.9l5 -4M860 271.4l5 -4M862.5 276.6l5 -4M853.9 265.6l5 -4M860.9 275.3l5 -4M861.2 273.3l5 -4M855 269l5 -4M861.1 268.4l5 -4M859.1 289.9l5 -4M872 296l5 -4M862.4 290.5l5 -4M865.2 290.4l5 -4M868.4 291.8l5 -4M793.8 353.3l5 -4M795 351.4l5 -4M796.5 350.4l5 -4M797.3 349.8l5 -4M791.9 347.1l5 -4M984.3 232.7l5 -4M987.4 234.1l5 -4M988.9 234.2l5 -4M985.5 232.8l5 -4M982.2 233.7l5 -4M991.7 269.7l5 -4M989 267.5l5 -4M993.7 268l5 -4M992.8 269.8l5 -4M990.5 272.1l5 -4M986.9 266.9l5 -4M985.9 265.5l5 -4M996.5 273.5l5 -4M989.6 269.8l5 -4M1074.9 243.1l5 -4M1074.9 240.2l5 -4M1071.2 242.6l5 -4M884.2 396.3l5 -4M875.1 395l5 -4M875.9 393.6l5 -4M884.5 394.2l5 -4M878.6 402.1l5 -4M896 414.7l5 -4M887 414.9l5 -4M898.2 415.7l5 -4M896.4 413.8l5 -4M892.7 412.8l5 -4M892.2 418.1l5 -4M882.9 413.3l5 -4M956 484.5l5 -4M954.4 487.4l5 -4M961.3 487l5 -4M956.3 482.4l5 -4M961.1 485.9l5 -4M992.4 261.7l5 -4M992.3 261.7l5 -4M992.7 265l5 -4M992.6 264.6l5 -4" stroke="#f00" stroke-width="0.9" fill="none"/><circle cx="898" cy="260" r="3.400" fill="#3f8a45" stroke="#fff" stroke-width="1.100"/><circle cx="927.2" cy="376" r="3.400" fill="#3f8a45" stroke="#fff" stroke-width="1.100"/><circle cx="1195.4" cy="456.2" r="3.400" fill="#3f8a45" stroke="#fff" stroke-width="1.100"/><circle cx="1204.3" cy="602.5" r="3.400" fill="#3f8a45" stroke="#fff" stroke-width="1.100"/><circle cx="1025.3" cy="798.4" r="3.400" fill="#3f8a45" stroke="#fff" stroke-width="1.100"/><circle cx="1711" cy="489" r="3.400" fill="#3f8a45" stroke="#fff" stroke-width="1.100"/><text x="902.5" y="255.5" font-size="15.7" font-style="italic" fill="#fff" stroke="#555" stroke-width="2.4" stroke-linejoin="round" paint-order="stroke" style="paint-order:stroke">Swellendam</text><text x="931.5" y="370.5" font-size="13.5" fill="#fff" stroke="#555" stroke-width="2.4" stroke-linejoin="round" paint-order="stroke" style="paint-order:stroke">Railton</text><text x="1716" y="485" font-size="16" font-style="italic" fill="#fff" stroke="#555" stroke-width="2.4" stroke-linejoin="round" paint-order="stroke" style="paint-order:stroke">Buffeljagsrivier</text><text x="1198.5" y="452" font-size="12" fill="#fff" stroke="#555" stroke-width="2.4" stroke-linejoin="round" paint-order="stroke" style="paint-order:stroke">Bontebok National Park Entrance Gate</text><text x="1208" y="597.5" font-size="12" fill="#fff" stroke="#555" stroke-width="2.4" stroke-linejoin="round" paint-order="stroke" style="paint-order:stroke">Bontebok National Park Reception &amp; Shop</text><text x="1029.5" y="794.5" font-size="10" fill="#fff" stroke="#555" stroke-width="2.4" stroke-linejoin="round" paint-order="stroke" style="paint-order:stroke">Lang Elsies Kraal Rest Camp</text></g></svg>
<div class="a" id="status"></div>
<div class="a st" style="left:12px">1 feature(s) selected on layer landuse.</div>
<div class="a st" style="left:960px;color:#0000ee;text-decoration:underline">There is a new plugin available</div>
<div class="a sbtn" style="left:1148px;top:1151px;width:20px;height:21px"></div>
<div class="a st" style="left:1177px">Coordinate:</div>
<div class="a fld" style="left:1254px;top:1152px;width:300px;height:20px;text-align:center;line-height:19px;font-size:13px">20.4487,-34.0607</div>
<div class="a st" style="left:1563px">Scale</div>
<div class="a fld" style="left:1608px;top:1156px;width:95px;height:15px;border-radius:0 4px 4px 0;line-height:14px;font-size:13px;padding-left:2px">1:19950</div>
<div class="a" style="left:1686px;top:1157px;width:1px;height:13px;background:#c4c4c4"></div>
<div class="a sbtn" style="left:1709px;top:1151px;width:20px;height:21px"></div>
<div class="a cb" style="left:1735px;top:1154px"></div>
<div class="a st" style="left:1753px">Render</div>
<div class="a st" style="left:1801px;color:#333">EPSG:4326</div>
<div class="a sbtn" style="left:1879px;top:1152px;width:20px;height:19px;background:#fafafa"></div>
<svg class="a" style="left:0;top:0" width="1928" height="1181"><g transform="translate(34,44)"><path d="M-9 -11h12l5 5v17h-17z" fill="#fff" stroke="#4a4a4a" stroke-width="1.2"/><path d="M3 -11v5h5" fill="none" stroke="#4a4a4a" stroke-width="1"/></g><g transform="translate(72,44)"><path d="M-11 -8h7l1.5 2.5h9v4h-17.5z" fill="#f7dc4a" stroke="#c9a227"/><path d="M-11 9l3 -12h19.5l-3.5 12z" fill="#fbdc45" stroke="#c9a227"/></g><g transform="translate(110,44)"><g opacity="1"><rect x="-10" y="-11" width="20" height="20" rx="2.5" fill="#5b8cc4" stroke="#3d6a9e"/><rect x="-6.5" y="-10" width="13" height="9" fill="#f4f4f4"/><path d="M-4.500 -7.500h9M-4.500 -5.200h9M-4.500 -2.900h9" stroke="#555" stroke-width="0.700"/><rect x="-6" y="2" width="12" height="7" fill="#eee"/><rect x="-4" y="3.5" width="2.5" height="4.5" fill="#3d5f8e"/></g></g><g transform="translate(148,44)"><g opacity="1"><rect x="-10" y="-11" width="20" height="20" rx="2.5" fill="#5b8cc4" stroke="#3d6a9e"/><rect x="-6.5" y="-10" width="13" height="9" fill="#f4f4f4"/><path d="M-4.500 -7.500h9M-4.500 -5.200h9M-4.500 -2.900h9" stroke="#555" stroke-width="0.700"/><rect x="-6" y="2" width="12" height="7" fill="#eee"/><rect x="-4" y="3.5" width="2.5" height="4.5" fill="#3d5f8e"/></g><rect x="4" y="4" width="10.5" height="10.5" rx="1.6" fill="#4c9a50"/><path d="M6.75 11.75l5 -5" stroke="#fff" stroke-width="2"/></g><g transform="translate(186,44)"><path d="M-12 -11h16l4 4v11h-20z" fill="#fff" stroke="#4a4a4a" stroke-width="1.2"/><path d="M4 -11v4h4" fill="none" stroke="#4a4a4a" stroke-width="1"/><rect x="3" y="3" width="10.5" height="10.5" rx="1.6" fill="#d9ad1c"/><path d="M4.65 8.25h7.2M8.25 4.65v7.2M5.75 5.75l5 5M10.75 5.75l-5 5" stroke="#fff" stroke-width="1.3"/></g><g transform="translate(224,44)"><path d="M-12 -11h16l4 4v11h-20z" fill="#fff" stroke="#4a4a4a" stroke-width="1.2"/><path d="M4 -11v4h4" fill="none" stroke="#4a4a4a" stroke-width="1"/><path d="M-4 -5l12 14" stroke="#555" stroke-width="4" stroke-linecap="round"/><path d="M2 3l6 6.5" stroke="#e9c04a" stroke-width="2.6" stroke-linecap="round"/><circle cx="-4" cy="-5" r="3.3" fill="none" stroke="#777" stroke-width="2"/></g><g transform="translate(271,44)"><path d="M-5 12c-2 -3 -5 -7 -6 -10c-0.5 -2 2 -2.5 3 -1l2 3v-11c0 -2 3 -2 3 0v-2c0 -2 3 -2 3 0v2c0 -2 3 -2 3 0v3c0 -2 3 -2 3 0v9c0 3 -1 5 -2 7z" fill="#fff" stroke="#222" stroke-width="1.2"/></g><g transform="translate(308,44)"><rect x="-10" y="-12" width="13" height="12" fill="#f7dc4a" stroke="#333" stroke-width="1" stroke-dasharray="2 1.5"/><g transform="translate(2,2) scale(0.85)"><path transform="rotate(0)" d="M-1.8 -4h3.6v-3h3l-4.8 -5l-4.8 5h3z" fill="#5b8cc4" stroke="#3d6a9e" stroke-width="0.5"/><path transform="rotate(90)" d="M-1.8 -4h3.6v-3h3l-4.8 -5l-4.8 5h3z" fill="#5b8cc4" stroke="#3d6a9e" stroke-width="0.5"/><path transform="rotate(180)" d="M-1.8 -4h3.6v-3h3l-4.8 -5l-4.8 5h3z" fill="#5b8cc4" stroke="#3d6a9e" stroke-width="0.5"/><path transform="rotate(270)" d="M-1.8 -4h3.6v-3h3l-4.8 -5l-4.8 5h3z" fill="#5b8cc4" stroke="#3d6a9e" stroke-width="0.5"/></g></g><g transform="translate(346,44)"><g opacity="1"><path d="M-3 3l-8 8" stroke="#333" stroke-width="4" stroke-linecap="round"/><path d="M-4 4l-6.5 6.5" stroke="#f0c830" stroke-width="2.4" stroke-linecap="round"/><circle cx="3" cy="-3" r="7.5" fill="#f2f2f2" fill-opacity="0.85" stroke="#666" stroke-width="1.2"/><path d="M-2 -3h10M3 -8v10" stroke="#5b8cc4" stroke-width="2.6"/></g></g><g transform="translate(384,44)"><g opacity="1"><path d="M-3 3l-8 8" stroke="#333" stroke-width="4" stroke-linecap="round"/><path d="M-4 4l-6.5 6.5" stroke="#f0c830" stroke-width="2.4" stroke-linecap="round"/><circle cx="3" cy="-3" r="7.5" fill="#f2f2f2" fill-opacity="0.85" stroke="#666" stroke-width="1.2"/><path d="M-2 -3h10" stroke="#5b8cc4" stroke-width="2.6"/></g></g><g transform="translate(423,44)"><g opacity="0.55"><path d="M-3 3l-8 8" stroke="#333" stroke-width="4" stroke-linecap="round"/><path d="M-4 4l-6.5 6.5" stroke="#f0c830" stroke-width="2.4" stroke-linecap="round"/><circle cx="3" cy="-3" r="7.5" fill="#f2f2f2" fill-opacity="0.85" stroke="#666" stroke-width="1.2"/><text x="3" y="0.5" font-size="9" font-weight="bold" text-anchor="middle" fill="#777" font-family="Liberation Sans,sans-serif">1:1</text></g></g><g transform="translate(461,44)"><g transform="translate(2,-2) scale(0.8)"><path transform="rotate(45)" d="M-2 -5h4v-4h3.5l-5.5 -6l-5.5 6h3.5z" fill="#5b8cc4"/><path transform="rotate(135)" d="M-2 -5h4v-4h3.5l-5.5 -6l-5.5 6h3.5z" fill="#5b8cc4"/><path transform="rotate(225)" d="M-2 -5h4v-4h3.5l-5.5 -6l-5.5 6h3.5z" fill="#5b8cc4"/><path transform="rotate(315)" d="M-2 -5h4v-4h3.5l-5.5 -6l-5.5 6h3.5z" fill="#5b8cc4"/></g><g opacity="1"><path d="M-3 3l-8 8" stroke="#333" stroke-width="4" stroke-linecap="round"/><path d="M-4 4l-6.5 6.5" stroke="#f0c830" stroke-width="2.4" stroke-linecap="round"/><circle cx="3" cy="-3" r="7.5" fill="#f2f2f2" fill-opacity="0.85" stroke="#666" stroke-width="1.2"/></g></g><g transform="translate(499,44)"><rect x="-11" y="-10" width="14" height="14" fill="#f7dc4a" stroke="#333" stroke-width="1" stroke-dasharray="2 1.5"/><g transform="translate(3,0)"><g opacity="1"><path d="M-3 3l-8 8" stroke="#333" stroke-width="4" stroke-linecap="round"/><path d="M-4 4l-6.5 6.5" stroke="#f0c830" stroke-width="2.4" stroke-linecap="round"/><circle cx="3" cy="-3" r="7.5" fill="#f2f2f2" fill-opacity="0.85" stroke="#666" stroke-width="1.2"/></g></g></g><g transform="translate(537,44)"><rect x="-10" y="-9" width="17" height="17" fill="#d9c9d6" stroke="#8a7a88"/><g transform="translate(3,-1)"><g opacity="1"><path d="M-3 3l-8 8" stroke="#333" stroke-width="4" stroke-linecap="round"/><path d="M-4 4l-6.5 6.5" stroke="#f0c830" stroke-width="2.4" stroke-linecap="round"/><circle cx="3" cy="-3" r="7.5" fill="#f2f2f2" fill-opacity="0.85" stroke="#666" stroke-width="1.2"/></g></g></g><g transform="translate(575,44)"><g opacity="1"><path d="M-3 3l-8 8" stroke="#333" stroke-width="4" stroke-linecap="round"/><path d="M-4 4l-6.5 6.5" stroke="#f0c830" stroke-width="2.4" stroke-linecap="round"/><circle cx="3" cy="-3" r="7.5" fill="#f2f2f2" fill-opacity="0.85" stroke="#666" stroke-width="1.2"/></g><rect x="1" y="1" width="11" height="11" fill="#5b8cc4"/><path d="M9.5 3.5l-5 3l5 3" stroke="#fff" stroke-width="1.8" fill="none"/></g><g transform="translate(613,44)"><g opacity="0.5"><g opacity="1"><path d="M-3 3l-8 8" stroke="#333" stroke-width="4" stroke-linecap="round"/><path d="M-4 4l-6.5 6.5" stroke="#f0c830" stroke-width="2.4" stroke-linecap="round"/><circle cx="3" cy="-3" r="7.5" fill="#f2f2f2" fill-opacity="0.85" stroke="#666" stroke-width="1.2"/></g><rect x="1" y="1" width="11" height="11" fill="#5b8cc4"/><path d="M3.5 3.5l5 3l-5 3" stroke="#fff" stroke-width="1.8" fill="none"/></g></g><g transform="translate(651,44)"><path d="M-9 -1a9 9 0 0 1 15 -6l3 -3v9h-9l3 -3a5 5 0 0 0 -8 3z" fill="#5b8cc4" stroke="#3d6a9e" stroke-width="0.6"/><path d="M9 1a9 9 0 0 1 -15 6l-3 3v-9h9l-3 3a5 5 0 0 0 8 -3z" fill="#5b8cc4" stroke="#3d6a9e" stroke-width="0.6"/></g><g transform="translate(698,44)"><circle cx="-2" cy="-3" r="8" fill="#5b8cc4" stroke="#3d6a9e"/><text x="-2" y="1.5" font-size="13" font-weight="bold" font-style="italic" text-anchor="middle" fill="#fff" font-family="Liberation Serif,serif">i</text><path transform="translate(1,-2) scale(0.85)" d="M0 0v13l3 -3l2.5 5.5l2 -1l-2.5 -5.5h4.5z" fill="#fff" stroke="#222" stroke-width="1"/></g><g transform="translate(742,44)"><g opacity="0.55"><circle cx="-2" cy="-3" r="7" fill="#ccc" stroke="#777" stroke-width="2" stroke-dasharray="2.5 1.5"/><circle cx="-2" cy="-3" r="3" fill="#eee" stroke="#888"/><path d="M-4 -6l5 3l-5 3z" fill="#999"/><path transform="translate(1,-2) scale(0.85)" d="M0 0v13l3 -3l2.5 5.5l2 -1l-2.5 -5.5h4.5z" fill="#fff" stroke="#222" stroke-width="1"/></g><path d="M10 3.5h8l-4 6z" fill="#4a4a4a"/></g><g transform="translate(790,44)"><rect x="-9.600" y="-11.400" width="12.900" height="12.800" fill="#f7e23a" stroke="#c9b21e" stroke-width="0.800"/><rect x="6.700" y="-11.400" width="6.900" height="11.900" fill="#ececec" stroke="#a9a9a9" stroke-width="0.800"/><rect x="-9.600" y="4.800" width="12.900" height="6.900" fill="#ececec" stroke="#a9a9a9" stroke-width="0.800"/><path transform="translate(-2.2,-5) scale(1.05)" d="M0 0v13l3 -3l2.5 5.5l2 -1l-2.5 -5.5h4.5z" fill="#fff" stroke="#222" stroke-width="1"/><path d="M16 5.0h8l-4 6z" fill="#4a4a4a"/></g><g transform="translate(837,44)"><rect x="-9.5" y="-9" width="14.5" height="14.5" fill="#f7e23a" stroke="#a08a10" stroke-width="1" stroke-dasharray="2 1.5"/><rect x="0" y="1.400" width="11" height="10.500" rx="2" fill="#e0262c" stroke="#b0181c" stroke-width="0.600"/><circle cx="5.500" cy="6.600" r="3.300" fill="none" stroke="#fff" stroke-width="1.400"/><path d="M3.300 8.900l4.400 -4.600" stroke="#fff" stroke-width="1.400"/></g><g transform="translate(874,44)"><text x="-4" y="5" font-size="27" font-weight="bold" text-anchor="middle" fill="#5d2a6e" font-family="Liberation Serif,serif">&#949;</text><rect x="0" y="-1" width="11.5" height="12.5" fill="#f7e23a" stroke="#a08a10" stroke-width="1" stroke-dasharray="2 1.5"/></g><g transform="translate(911,44)"><rect x="-10" y="-10" width="20" height="19" fill="#fff" stroke="#3d6a9e" stroke-width="1.3"/><path d="M-10 -6h20" stroke="#3d6a9e" stroke-width="2"/><path d="M-8 -3h4M-2 -3h10M-8 0h4M-2 0h10M-8 3h4M-2 3h10M-8 6h4M-2 6h10" stroke="#345" stroke-width="1"/></g><g transform="translate(949,44)"><rect x="-10" y="-10" width="20" height="20" fill="#f4f4f4" stroke="#666" stroke-width="1.3"/><path d="M-10 -6h20M-10 0h20M-10 6h20" stroke="#666"/><circle cx="-1" cy="-6" r="2" fill="#fff" stroke="#d33"/><circle cx="4" cy="-6" r="2" fill="#fff" stroke="#d33"/><circle cx="-5" cy="0" r="2" fill="#fff" stroke="#3a3"/><circle cx="0" cy="0" r="2" fill="#fff" stroke="#3a3"/><circle cx="-5" cy="6" r="2" fill="#fff" stroke="#36c"/><circle cx="5" cy="6" r="2" fill="#fff" stroke="#36c"/></g><g transform="translate(993,44)"><path d="M-8 -7.500v6M10 -7.500v6M-8 -4.600h18" stroke="#2f5f8c" stroke-width="1.500"/><rect x="-10" y="0.500" width="21.800" height="6.900" fill="#dfe6d4" stroke="#666" stroke-width="0.900"/><path d="M-7 0.500v3M-4 0.500v4M-1 0.500v3M2 0.500v4M5 0.500v3M8 0.500v4" stroke="#555" stroke-width="0.800"/><path d="M15 5.0h8l-4 6z" fill="#4a4a4a"/></g><g transform="translate(1038,44)"><path d="M-6.500 -9.700h13a3.500 3.500 0 0 1 3.500 3.500v6a3.500 3.500 0 0 1 -3.500 3.500h-8.500l-5 4.700l1.300 -4.700h-0.800a3.500 3.500 0 0 1 -3.500 -3.500v-6a3.500 3.500 0 0 1 3.500 -3.500z" fill="#f6e47c" stroke="#c9a722" stroke-width="1.100"/></g><g transform="translate(1077,44)"><rect x="-10" y="-6.300" width="17" height="11" fill="#ececec" fill-opacity="0.500" stroke="#333" stroke-width="1" stroke-dasharray="1.200 1.300"/><path d="M-0.500 -6.500v-2.500h2l1.500 -1.800l1.500 1.800h1.500v2.500z" fill="#f3d640" stroke="#b8981a" stroke-width="0.600"/><rect x="0.3" y="1" width="10.5" height="10.5" rx="1.6" fill="#d4a817"/><path d="M1.9499999999999997 6.25h7.2M5.55 2.65v7.2M3.05 3.75l5 5M8.05 3.75l-5 5" stroke="#fff" stroke-width="1.3"/></g><g transform="translate(1114,44)"><rect x="-9" y="-6.300" width="17" height="11" fill="#ececec" fill-opacity="0.500" stroke="#333" stroke-width="1" stroke-dasharray="1.200 1.300"/><path d="M0.500 -6.500v-2.500h2l1.500 -1.800l1.500 1.800h1.500v2.500z" fill="#f3d640" stroke="#b8981a" stroke-width="0.600"/></g><g transform="translate(1160,44)"><path d="M-9 -9.500h19v16h-14l-8.500 4l3.500 -4z" fill="#d9e3ec" stroke="#8d9cae" stroke-width="1"/><text x="0.500" y="3.500" font-size="15.500" text-anchor="middle" fill="#333" font-family="Liberation Serif,serif">T</text><path d="M13.5 5.0h8l-4 6z" fill="#4a4a4a"/></g><g transform="translate(1211,44)"><rect x="-9" y="-10" width="18" height="19" rx="1" fill="#5b8cc4" stroke="#2a4566"/><rect x="-9" y="-10" width="4" height="19" fill="#2a3a55"/><text x="2" y="4" font-size="13" text-anchor="middle" fill="#fff" font-family="Liberation Sans,sans-serif">?</text></g><g transform="translate(1248,44)"><path transform="translate(-9.7,-10.6) scale(1.12)" d="M0 0v13l3 -3l2.5 5.5l2 -1l-2.5 -5.5h4.5z" fill="#fff" stroke="#222" stroke-width="1"/><text x="7.500" y="9.500" font-size="23" text-anchor="middle" fill="#111" font-family="Liberation Serif,serif">?</text></g><rect x="12.8" y="32.0" width="2.1" height="2.1" fill="#fdfdfd"/><rect x="13.6" y="32.8" width="1.3" height="1.3" fill="#bdbdbd"/><rect x="15.8" y="35.1" width="2.1" height="2.1" fill="#fdfdfd"/><rect x="16.6" y="35.9" width="1.3" height="1.3" fill="#bdbdbd"/><rect x="12.8" y="38.2" width="2.1" height="2.1" fill="#fdfdfd"/><rect x="13.6" y="39.0" width="1.3" height="1.3" fill="#bdbdbd"/><rect x="15.8" y="41.3" width="2.1" height="2.1" fill="#fdfdfd"/><rect x="16.6" y="42.099999999999994" width="1.3" height="1.3" fill="#bdbdbd"/><rect x="12.8" y="44.4" width="2.1" height="2.1" fill="#fdfdfd"/><rect x="13.6" y="45.199999999999996" width="1.3" height="1.3" fill="#bdbdbd"/><rect x="15.8" y="47.5" width="2.1" height="2.1" fill="#fdfdfd"/><rect x="16.6" y="48.3" width="1.3" height="1.3" fill="#bdbdbd"/><rect x="12.8" y="50.6" width="2.1" height="2.1" fill="#fdfdfd"/><rect x="13.6" y="51.4" width="1.3" height="1.3" fill="#bdbdbd"/><rect x="15.8" y="53.7" width="2.1" height="2.1" fill="#fdfdfd"/><rect x="16.6" y="54.5" width="1.3" height="1.3" fill="#bdbdbd"/><rect x="249.8" y="32.0" width="2.1" height="2.1" fill="#fdfdfd"/><rect x="250.6" y="32.8" width="1.3" height="1.3" fill="#bdbdbd"/><rect x="252.8" y="35.1" width="2.1" height="2.1" fill="#fdfdfd"/><rect x="253.6" y="35.9" width="1.3" height="1.3" fill="#bdbdbd"/><rect x="249.8" y="38.2" width="2.1" height="2.1" fill="#fdfdfd"/><rect x="250.6" y="39.0" width="1.3" height="1.3" fill="#bdbdbd"/><rect x="252.8" y="41.3" width="2.1" height="2.1" fill="#fdfdfd"/><rect x="253.6" y="42.099999999999994" width="1.3" height="1.3" fill="#bdbdbd"/><rect x="249.8" y="44.4" width="2.1" height="2.1" fill="#fdfdfd"/><rect x="250.6" y="45.199999999999996" width="1.3" height="1.3" fill="#bdbdbd"/><rect x="252.8" y="47.5" width="2.1" height="2.1" fill="#fdfdfd"/><rect x="253.6" y="48.3" width="1.3" height="1.3" fill="#bdbdbd"/><rect x="249.8" y="50.6" width="2.1" height="2.1" fill="#fdfdfd"/><rect x="250.6" y="51.4" width="1.3" height="1.3" fill="#bdbdbd"/><rect x="252.8" y="53.7" width="2.1" height="2.1" fill="#fdfdfd"/><rect x="253.6" y="54.5" width="1.3" height="1.3" fill="#bdbdbd"/><rect x="678.8" y="32.0" width="2.1" height="2.1" fill="#fdfdfd"/><rect x="679.6" y="32.8" width="1.3" height="1.3" fill="#bdbdbd"/><rect x="681.8" y="35.1" width="2.1" height="2.1" fill="#fdfdfd"/><rect x="682.6" y="35.9" width="1.3" height="1.3" fill="#bdbdbd"/><rect x="678.8" y="38.2" width="2.1" height="2.1" fill="#fdfdfd"/><rect x="679.6" y="39.0" width="1.3" height="1.3" fill="#bdbdbd"/><rect x="681.8" y="41.3" width="2.1" height="2.1" fill="#fdfdfd"/><rect x="682.6" y="42.099999999999994" width="1.3" height="1.3" fill="#bdbdbd"/><rect x="678.8" y="44.4" width="2.1" height="2.1" fill="#fdfdfd"/><rect x="679.6" y="45.199999999999996" width="1.3" height="1.3" fill="#bdbdbd"/><rect x="681.8" y="47.5" width="2.1" height="2.1" fill="#fdfdfd"/><rect x="682.6" y="48.3" width="1.3" height="1.3" fill="#bdbdbd"/><rect x="678.8" y="50.6" width="2.1" height="2.1" fill="#fdfdfd"/><rect x="679.6" y="51.4" width="1.3" height="1.3" fill="#bdbdbd"/><rect x="681.8" y="53.7" width="2.1" height="2.1" fill="#fdfdfd"/><rect x="682.6" y="54.5" width="1.3" height="1.3" fill="#bdbdbd"/><rect x="1190.8" y="32.0" width="2.1" height="2.1" fill="#fdfdfd"/><rect x="1191.6" y="32.8" width="1.3" height="1.3" fill="#bdbdbd"/><rect x="1193.8" y="35.1" width="2.1" height="2.1" fill="#fdfdfd"/><rect x="1194.6" y="35.9" width="1.3" height="1.3" fill="#bdbdbd"/><rect x="1190.8" y="38.2" width="2.1" height="2.1" fill="#fdfdfd"/><rect x="1191.6" y="39.0" width="1.3" height="1.3" fill="#bdbdbd"/><rect x="1193.8" y="41.3" width="2.1" height="2.1" fill="#fdfdfd"/><rect x="1194.6" y="42.099999999999994" width="1.3" height="1.3" fill="#bdbdbd"/><rect x="1190.8" y="44.4" width="2.1" height="2.1" fill="#fdfdfd"/><rect x="1191.6" y="45.199999999999996" width="1.3" height="1.3" fill="#bdbdbd"/><rect x="1193.8" y="47.5" width="2.1" height="2.1" fill="#fdfdfd"/><rect x="1194.6" y="48.3" width="1.3" height="1.3" fill="#bdbdbd"/><rect x="1190.8" y="50.6" width="2.1" height="2.1" fill="#fdfdfd"/><rect x="1191.6" y="51.4" width="1.3" height="1.3" fill="#bdbdbd"/><rect x="1193.8" y="53.7" width="2.1" height="2.1" fill="#fdfdfd"/><rect x="1194.6" y="54.5" width="1.3" height="1.3" fill="#bdbdbd"/><g transform="translate(34,80)"><g transform="translate(-5,-1) scale(0.9) rotate(25)"><rect x="-3.5" y="-12" width="7" height="17" fill="#c9855a"/><rect x="-1" y="-12" width="2.4" height="17" fill="#d9a070"/><rect x="-3.5" y="-13.5" width="7" height="2.5" fill="#eee" stroke="#bbb" stroke-width="0.4"/><path d="M-3.5 5l3.5 8l3.5 -8z" fill="#ddd" stroke="#888" stroke-width="0.5"/><path d="M-1.2 10.5l1.2 2.5l1.2 -2.5z" fill="#444"/></g><g transform="translate(1,0) scale(0.95) rotate(25)"><rect x="-3.5" y="-12" width="7" height="17" fill="#e8642a"/><rect x="-1" y="-12" width="2.4" height="17" fill="#f59a1c"/><rect x="-3.5" y="-13.5" width="7" height="2.5" fill="#eee" stroke="#bbb" stroke-width="0.4"/><path d="M-3.5 5l3.5 8l3.5 -8z" fill="#ddd" stroke="#888" stroke-width="0.5"/><path d="M-1.2 10.5l1.2 2.5l1.2 -2.5z" fill="#444"/></g><path d="M6 5.5h8l-4 6z" fill="#4a4a4a"/></g><g transform="translate(71,80)"><g transform="translate(0,0) scale(0.95) rotate(25)"><rect x="-3.5" y="-12" width="7" height="17" fill="#e6d534"/><rect x="-1" y="-12" width="2.4" height="17" fill="#fff27a"/><rect x="-3.5" y="-13.5" width="7" height="2.5" fill="#eee" stroke="#bbb" stroke-width="0.4"/><path d="M-3.5 5l3.5 8l3.5 -8z" fill="#ddd" stroke="#888" stroke-width="0.5"/><path d="M-1.2 10.5l1.2 2.5l1.2 -2.5z" fill="#444"/></g></g><g transform="translate(110,80)"><g opacity="0.9"><rect x="-10" y="-11" width="20" height="20" rx="2.5" fill="#5b8cc4" stroke="#3d6a9e"/><rect x="-6.5" y="-10" width="13" height="9" fill="#f4f4f4"/><path d="M-4.500 -7.500h9M-4.500 -5.200h9M-4.500 -2.900h9" stroke="#555" stroke-width="0.700"/><rect x="-6" y="2" width="12" height="7" fill="#eee"/><rect x="-4" y="3.5" width="2.5" height="4.5" fill="#3d5f8e"/></g><g transform="translate(8,3) scale(0.6) rotate(25)"><rect x="-3.5" y="-12" width="7" height="17" fill="#e8642a"/><rect x="-1" y="-12" width="2.4" height="17" fill="#f59a1c"/><rect x="-3.5" y="-13.5" width="7" height="2.5" fill="#eee" stroke="#bbb" stroke-width="0.4"/><path d="M-3.5 5l3.5 8l3.5 -8z" fill="#ddd" stroke="#888" stroke-width="0.5"/><path d="M-1.2 10.5l1.2 2.5l1.2 -2.5z" fill="#444"/></g></g><g transform="translate(148,80)"><path transform="translate(0,-4)" d="M-10.5 -3C-10.5 -8 -5 -9.5 -1 -8C2 -7 6 -8.5 9.500 -6.500C12.500 -4.500 12 2 8.500 3.500C5.500 5 3.500 1.500 0 1.500C-3 1.500 -4.500 3.500 -7 2.500C-9.500 1.500 -10.500 0 -10.500 -3Z" fill="#8fc98f" stroke="#4a7a4a" stroke-width="1.100"/><rect x="1" y="1.5" width="10.5" height="10.5" rx="1.6" fill="#d4a817"/><path d="M2.65 6.75h7.2M6.25 3.15v7.2M3.75 4.25l5 5M8.75 4.25l-5 5" stroke="#fff" stroke-width="1.3"/></g><g transform="translate(186,80)"><path transform="translate(0,-4)" d="M-10.5 -3C-10.5 -8 -5 -9.5 -1 -8C2 -7 6 -8.5 9.500 -6.500C12.500 -4.500 12 2 8.500 3.500C5.500 5 3.500 1.500 0 1.500C-3 1.500 -4.500 3.500 -7 2.500C-9.500 1.500 -10.500 0 -10.500 -3Z" fill="#8fc98f" stroke="#4a7a4a" stroke-width="1.100"/><rect x="1" y="1.5" width="10.5" height="10.5" rx="1.6" fill="#3b63b5"/><path d="M3.25 5.75h3v-2l3.5 3l-3.5 3v-2h-3z" fill="#fff"/></g><g transform="translate(224,80)"><path d="M-10 9l6 -17h10" fill="none" stroke="#444" stroke-width="1"/><circle cx="-4" cy="-8" r="1.6" fill="#fff" stroke="#444"/><path d="M-3 -1l9 10" stroke="#555" stroke-width="3"/><path d="M-2 0l8 9" stroke="#e9b53a" stroke-width="1.6"/><path d="M6 -2l-8 10" stroke="#666" stroke-width="2.4"/><path d="M3 -4l6 4" stroke="#444" stroke-width="3.4"/></g><g transform="translate(262,80)"><rect x="-11" y="-11" width="15" height="15" fill="#f7e23a" stroke="#a08a10" stroke-width="1" stroke-dasharray="2 1.5"/><rect x="1.5" y="1.5" width="10.5" height="10.5" rx="1.6" fill="#e02424"/><path d="M3.75 3.75l6 6M9.75 3.75l-6 6" stroke="#fff" stroke-width="2.1"/></g><g transform="translate(300,80)"><path d="M-11 -6l17 9M-11 4l17 -8" stroke="#888" stroke-width="1.8"/><circle cx="8" cy="-5" r="2.6" fill="none" stroke="#d22" stroke-width="1.6"/><circle cx="8" cy="4.5" r="2.6" fill="none" stroke="#d22" stroke-width="1.6"/></g><g transform="translate(337,80)"><g opacity="0.8"><path d="M-8 -9h8l3 3v11h-11z" fill="#fafafa" stroke="#777"/><path d="M-4 -5h8l3 3v11h-11z" fill="#fff" stroke="#666"/><path d="M-2 0h7M-2 2.5h7M-2 5h7" stroke="#999" stroke-width="0.8"/></g></g><g transform="translate(375,80)"><g opacity="0.45"><rect x="-8" y="-9" width="16" height="19" rx="1.5" fill="#e9c08a" stroke="#b07a30"/><rect x="-5.5" y="-5" width="11" height="13" fill="#fff" stroke="#aaa" stroke-width="0.6"/><rect x="-3.5" y="-11" width="7" height="4" rx="1" fill="#bbb" stroke="#888" stroke-width="0.6"/></g></g><g transform="translate(421,80)"><g opacity="1"><path d="M-11 -2.500l4 -5h17v10h-17z" fill="#f7dc4a" stroke="#c9a227" stroke-width="1"/><text x="1.5" y="1" font-size="8.5" font-weight="bold" text-anchor="middle" fill="#222" font-family="Liberation Sans,sans-serif">abc</text></g></g><g transform="translate(460,80)"><rect x="-10.500" y="-8.200" width="23.300" height="18.100" fill="#dfe9fa" stroke="#5b8de0" stroke-width="1.100"/><g opacity="1"><path d="M-11 -2.500l4 -5h17v10h-17z" fill="#f7dc4a" stroke="#c9a227" stroke-width="1"/><text x="1.5" y="1" font-size="8.5" font-weight="bold" text-anchor="middle" fill="#222" font-family="Liberation Sans,sans-serif">ab</text></g><circle cx="7" cy="5" r="3.800" fill="#c11" stroke="#700" stroke-width="0.700"/><path d="M5.500 -3l1.500 5" stroke="#eee" stroke-width="1.800"/></g><g transform="translate(498,80)"><g opacity="0.45"><path d="M-11 -2.500l4 -5h17v10h-17z" fill="#f7dc4a" stroke="#c9a227" stroke-width="1"/><text x="1.5" y="1" font-size="8.5" font-weight="bold" text-anchor="middle" fill="#222" font-family="Liberation Sans,sans-serif">ab</text></g><g opacity="0.5"><circle cx="7" cy="4" r="4" fill="#c33"/><path d="M5 -5l2 6" stroke="#ccc" stroke-width="2"/></g></g><g transform="translate(537,80)"><g opacity="0.45"><path d="M-11 -2.500l4 -5h17v10h-17z" fill="#f7dc4a" stroke="#c9a227" stroke-width="1"/><text x="1.5" y="1" font-size="8.5" font-weight="bold" text-anchor="middle" fill="#222" font-family="Liberation Sans,sans-serif">abc</text></g><g opacity="0.55"><path d="M-3 5c3 -4 9 -4 12 0c-3 4 -9 4 -12 0z" fill="#fff" stroke="#666" stroke-width="0.8"/><circle cx="3" cy="5" r="2" fill="#47a"/></g></g><g transform="translate(575,80)"><g opacity="0.45"><path d="M-11 -2.500l4 -5h17v10h-17z" fill="#f7dc4a" stroke="#c9a227" stroke-width="1"/><text x="1.5" y="1" font-size="8.5" font-weight="bold" text-anchor="middle" fill="#222" font-family="Liberation Sans,sans-serif">abc</text></g><g opacity="0.55"><rect x="2" y="0" width="10.5" height="10.5" rx="1.6" fill="#3b63b5"/><path d="M4.25 4.25h3v-2l3.5 3l-3.5 3v-2h-3z" fill="#fff"/></g></g><g transform="translate(613,80)"><g opacity="0.45"><path d="M-11 -2.500l4 -5h17v10h-17z" fill="#f7dc4a" stroke="#c9a227" stroke-width="1"/><text x="1.5" y="1" font-size="8.5" font-weight="bold" text-anchor="middle" fill="#222" font-family="Liberation Sans,sans-serif">abc</text></g><g opacity="0.55"><rect x="2" y="0" width="10.5" height="10.5" rx="1.6" fill="#3b63b5"/><path d="M9.75 5.25a2.5 2.5 0 1 0 -2.5 2.5" stroke="#fff" stroke-width="1.2" fill="none"/></g></g><g transform="translate(651,80)"><g opacity="1"><path d="M-11 -2.500l4 -5h17v10h-17z" fill="#f7dc4a" stroke="#c9a227" stroke-width="1"/><text x="1.5" y="1" font-size="8.5" font-weight="bold" text-anchor="middle" fill="#222" font-family="Liberation Sans,sans-serif">abc</text></g><rect x="3" y="0" width="10.5" height="10.5" rx="1.6" fill="#d9ad1c"/><path d="M5.75 7.75l5 -5" stroke="#fff" stroke-width="2"/></g><rect x="12.8" y="68.0" width="2.1" height="2.1" fill="#fdfdfd"/><rect x="13.6" y="68.8" width="1.3" height="1.3" fill="#bdbdbd"/><rect x="15.8" y="71.1" width="2.1" height="2.1" fill="#fdfdfd"/><rect x="16.6" y="71.89999999999999" width="1.3" height="1.3" fill="#bdbdbd"/><rect x="12.8" y="74.2" width="2.1" height="2.1" fill="#fdfdfd"/><rect x="13.6" y="75.0" width="1.3" height="1.3" fill="#bdbdbd"/><rect x="15.8" y="77.3" width="2.1" height="2.1" fill="#fdfdfd"/><rect x="16.6" y="78.1" width="1.3" height="1.3" fill="#bdbdbd"/><rect x="12.8" y="80.4" width="2.1" height="2.1" fill="#fdfdfd"/><rect x="13.6" y="81.2" width="1.3" height="1.3" fill="#bdbdbd"/><rect x="15.8" y="83.5" width="2.1" height="2.1" fill="#fdfdfd"/><rect x="16.6" y="84.3" width="1.3" height="1.3" fill="#bdbdbd"/><rect x="12.8" y="86.6" width="2.1" height="2.1" fill="#fdfdfd"/><rect x="13.6" y="87.39999999999999" width="1.3" height="1.3" fill="#bdbdbd"/><rect x="15.8" y="89.7" width="2.1" height="2.1" fill="#fdfdfd"/><rect x="16.6" y="90.5" width="1.3" height="1.3" fill="#bdbdbd"/><rect x="401.8" y="68.0" width="2.1" height="2.1" fill="#fdfdfd"/><rect x="402.6" y="68.8" width="1.3" height="1.3" fill="#bdbdbd"/><rect x="404.8" y="71.1" width="2.1" height="2.1" fill="#fdfdfd"/><rect x="405.6" y="71.89999999999999" width="1.3" height="1.3" fill="#bdbdbd"/><rect x="401.8" y="74.2" width="2.1" height="2.1" fill="#fdfdfd"/><rect x="402.6" y="75.0" width="1.3" height="1.3" fill="#bdbdbd"/><rect x="404.8" y="77.3" width="2.1" height="2.1" fill="#fdfdfd"/><rect x="405.6" y="78.1" width="1.3" height="1.3" fill="#bdbdbd"/><rect x="401.8" y="80.4" width="2.1" height="2.1" fill="#fdfdfd"/><rect x="402.6" y="81.2" width="1.3" height="1.3" fill="#bdbdbd"/><rect x="404.8" y="83.5" width="2.1" height="2.1" fill="#fdfdfd"/><rect x="405.6" y="84.3" width="1.3" height="1.3" fill="#bdbdbd"/><rect x="401.8" y="86.6" width="2.1" height="2.1" fill="#fdfdfd"/><rect x="402.6" y="87.39999999999999" width="1.3" height="1.3" fill="#bdbdbd"/><rect x="404.8" y="89.7" width="2.1" height="2.1" fill="#fdfdfd"/><rect x="405.6" y="90.5" width="1.3" height="1.3" fill="#bdbdbd"/><rect x="678.8" y="68.0" width="2.1" height="2.1" fill="#fdfdfd"/><rect x="679.6" y="68.8" width="1.3" height="1.3" fill="#bdbdbd"/><rect x="681.8" y="71.1" width="2.1" height="2.1" fill="#fdfdfd"/><rect x="682.6" y="71.89999999999999" width="1.3" height="1.3" fill="#bdbdbd"/><rect x="678.8" y="74.2" width="2.1" height="2.1" fill="#fdfdfd"/><rect x="679.6" y="75.0" width="1.3" height="1.3" fill="#bdbdbd"/><rect x="681.8" y="77.3" width="2.1" height="2.1" fill="#fdfdfd"/><rect x="682.6" y="78.1" width="1.3" height="1.3" fill="#bdbdbd"/><rect x="678.8" y="80.4" width="2.1" height="2.1" fill="#fdfdfd"/><rect x="679.6" y="81.2" width="1.3" height="1.3" fill="#bdbdbd"/><rect x="681.8" y="83.5" width="2.1" height="2.1" fill="#fdfdfd"/><rect x="682.6" y="84.3" width="1.3" height="1.3" fill="#bdbdbd"/><rect x="678.8" y="86.6" width="2.1" height="2.1" fill="#fdfdfd"/><rect x="679.6" y="87.39999999999999" width="1.3" height="1.3" fill="#bdbdbd"/><rect x="681.8" y="89.7" width="2.1" height="2.1" fill="#fdfdfd"/><rect x="682.6" y="90.5" width="1.3" height="1.3" fill="#bdbdbd"/><rect x="690.8" y="68.0" width="2.1" height="2.1" fill="#fdfdfd"/><rect x="691.6" y="68.8" width="1.3" height="1.3" fill="#bdbdbd"/><rect x="693.8" y="71.1" width="2.1" height="2.1" fill="#fdfdfd"/><rect x="694.6" y="71.89999999999999" width="1.3" height="1.3" fill="#bdbdbd"/><rect x="690.8" y="74.2" width="2.1" height="2.1" fill="#fdfdfd"/><rect x="691.6" y="75.0" width="1.3" height="1.3" fill="#bdbdbd"/><rect x="693.8" y="77.3" width="2.1" height="2.1" fill="#fdfdfd"/><rect x="694.6" y="78.1" width="1.3" height="1.3" fill="#bdbdbd"/><rect x="690.8" y="80.4" width="2.1" height="2.1" fill="#fdfdfd"/><rect x="691.6" y="81.2" width="1.3" height="1.3" fill="#bdbdbd"/><rect x="693.8" y="83.5" width="2.1" height="2.1" fill="#fdfdfd"/><rect x="694.6" y="84.3" width="1.3" height="1.3" fill="#bdbdbd"/><rect x="690.8" y="86.6" width="2.1" height="2.1" fill="#fdfdfd"/><rect x="691.6" y="87.39999999999999" width="1.3" height="1.3" fill="#bdbdbd"/><rect x="693.8" y="89.7" width="2.1" height="2.1" fill="#fdfdfd"/><rect x="694.6" y="90.5" width="1.3" height="1.3" fill="#bdbdbd"/><g transform="translate(34,116)"><path d="M-11 -2l8 -8v5c7 0 11 3 11 8s-4 8 -8 8l-2 -3c4 0 6 -2 6 -5s-3 -4 -7 -4v5z" fill="#8fc98f" stroke="#4e9a55" stroke-width="1"/></g><g transform="translate(72,116)"><g opacity="0.45" transform="scale(-1,1)"><path d="M-11 -2l8 -8v5c7 0 11 3 11 8s-4 8 -8 8l-2 -3c4 0 6 -2 6 -5s-3 -4 -7 -4v5z" fill="#8fc98f" stroke="#4e9a55" stroke-width="1"/></g></g><g transform="translate(110,116)"><path transform="translate(0,-4)" d="M-10.5 -3C-10.5 -8 -5 -9.5 -1 -8C2 -7 6 -8.5 9.500 -6.500C12.500 -4.500 12 2 8.500 3.500C5.500 5 3.500 1.500 0 1.500C-3 1.500 -4.500 3.500 -7 2.500C-9.500 1.500 -10.500 0 -10.500 -3Z" fill="#8fc98f" stroke="#4a7a4a" stroke-width="1.100"/><rect x="1" y="1.5" width="10.5" height="10.5" rx="1.6" fill="#24479a"/><path d="M8.75 6.75a2.5 2.5 0 1 0 -2.5 2.5" stroke="#fff" stroke-width="1.2" fill="none"/></g><g transform="translate(148,116)"><circle cx="-4" cy="-4" r="7" fill="#8fc98f" stroke="#4a7a4a"/><path d="M-2 0h9l4 6l-4 6h-9l-4 -6z" fill="#8fb6e6" stroke="#3d6a9e"/><path d="M-4 -3v10M-6.5 5l2.5 3l2.5 -3" stroke="#234" fill="none" stroke-width="1"/></g><g transform="translate(186,116)"><path transform="translate(0,-4)" d="M-10.5 -3C-10.5 -8 -5 -9.5 -1 -8C2 -7 6 -8.5 9.500 -6.500C12.500 -4.500 12 2 8.500 3.500C5.500 5 3.500 1.500 0 1.500C-3 1.500 -4.500 3.500 -7 2.500C-9.500 1.500 -10.500 0 -10.500 -3Z" fill="#8fc98f" stroke="#4a7a4a" stroke-width="1.100"/><ellipse cx="-4" cy="-4.500" rx="4" ry="2.600" transform="rotate(-12 -4 -4.500)" fill="#e8e8e8" stroke="#4a7a4a" stroke-width="0.900"/><rect x="1" y="1.5" width="10.5" height="10.5" rx="1.6" fill="#d4a817"/><path d="M2.65 6.75h7.2M6.25 3.15v7.2M3.75 4.25l5 5M8.75 4.25l-5 5" stroke="#fff" stroke-width="1.3"/></g><g transform="translate(224,116)"><path transform="translate(0,-5)" d="M-10.5 -3C-10.5 -8 -5 -9.5 -1 -8C2 -7 6 -8.5 9.500 -6.500C12.500 -4.500 12 2 8.500 3.500C5.500 5 3.500 1.500 0 1.500C-3 1.500 -4.500 3.500 -7 2.500C-9.500 1.500 -10.500 0 -10.500 -3Z" fill="#9d9d9d" stroke="#555" stroke-width="1.100"/><path d="M-10 10c0 -5 4 -8 7 -7.500s1 4 -1 7s-6 3 -6 0.500z" fill="#8fc98f" stroke="#4a7a4a"/><rect x="1" y="1.5" width="10.5" height="10.5" rx="1.6" fill="#d4a817"/><path d="M2.65 6.75h7.2M6.25 3.15v7.2M3.75 4.25l5 5M8.75 4.25l-5 5" stroke="#fff" stroke-width="1.3"/></g><g transform="translate(262,116)"><path transform="translate(0,-4)" d="M-10.5 -3C-10.5 -8 -5 -9.5 -1 -8C2 -7 6 -8.5 9.500 -6.500C12.500 -4.500 12 2 8.500 3.500C5.500 5 3.500 1.500 0 1.500C-3 1.500 -4.500 3.500 -7 2.500C-9.500 1.500 -10.500 0 -10.500 -3Z" fill="#8fc98f" stroke="#4a7a4a" stroke-width="1.100"/><ellipse cx="-4" cy="-4.500" rx="4" ry="2.600" transform="rotate(-12 -4 -4.500)" fill="#e8e8e8" stroke="#4a7a4a" stroke-width="0.900"/><rect x="1" y="1.5" width="10.5" height="10.5" rx="1.6" fill="#e25555"/><path d="M3.25 3.75l6 6M9.25 3.75l-6 6" stroke="#fff" stroke-width="2.1"/></g><g transform="translate(300,116)"><path transform="translate(0,-5)" d="M-10.5 -3C-10.5 -8 -5 -9.5 -1 -8C2 -7 6 -8.5 9.500 -6.500C12.500 -4.500 12 2 8.500 3.500C5.500 5 3.500 1.500 0 1.500C-3 1.500 -4.500 3.500 -7 2.500C-9.500 1.500 -10.500 0 -10.500 -3Z" fill="#9d9d9d" stroke="#555" stroke-width="1.100"/><path d="M-10 10c0 -5 4 -8 7 -7.500s1 4 -1 7s-6 3 -6 0.500z" fill="#8fc98f" stroke="#4a7a4a"/><rect x="1" y="1.5" width="10.5" height="10.5" rx="1.6" fill="#e25555"/><path d="M3.25 3.75l6 6M9.25 3.75l-6 6" stroke="#fff" stroke-width="2.1"/></g><g transform="translate(337,116)"><path transform="translate(0,-1)" d="M-10.5 -3C-10.5 -8 -5 -9.5 -1 -8C2 -7 6 -8.5 9.500 -6.500C12.500 -4.500 12 2 8.500 3.500C5.500 5 3.500 1.500 0 1.500C-3 1.500 -4.500 3.500 -7 2.500C-9.500 1.500 -10.500 0 -10.500 -3Z" fill="#8fc98f" stroke="#4a7a4a" stroke-width="1.100"/><path d="M-10 -3c2 6 6 7 9 5s4 -2 6 -4c-3 3 -6 1 -9 2s-5 0 -6 -3z" fill="#f2e64a" stroke="#4a7a4a" stroke-width="0.8"/></g><g transform="translate(375,116)"><g opacity="0.75"><path transform="translate(0,-1)" d="M-10.5 -3C-10.5 -8 -5 -9.5 -1 -8C2 -7 6 -8.5 9.500 -6.500C12.500 -4.500 12 2 8.500 3.500C5.500 5 3.500 1.500 0 1.500C-3 1.500 -4.500 3.500 -7 2.500C-9.500 1.500 -10.500 0 -10.500 -3Z" fill="#eef0a8" stroke="#8a9a60" stroke-width="1.100"/><ellipse cx="0" cy="-2" rx="6.500" ry="3.300" fill="#d6ecc6" stroke="#8a9a60" stroke-width="0.700"/></g></g><g transform="translate(413,116)"><path transform="translate(0,-4)" d="M-10.5 -3C-10.5 -8 -5 -9.5 -1 -8C2 -7 6 -8.5 9.500 -6.500C12.500 -4.500 12 2 8.500 3.500C5.500 5 3.500 1.500 0 1.500C-3 1.500 -4.500 3.500 -7 2.500C-9.500 1.500 -10.500 0 -10.500 -3Z" fill="#8fc98f" stroke="#4a7a4a" stroke-width="1.100"/><path d="M0 -11l-2 16M0 -11l3 16" stroke="#666" stroke-width="1.2"/><circle cx="-3" cy="8" r="2.6" fill="none" stroke="#d22" stroke-width="1.5"/><circle cx="3.5" cy="8" r="2.6" fill="none" stroke="#d22" stroke-width="1.5"/></g><g transform="translate(452,116)"><path transform="translate(0,-4)" d="M-10.5 -3C-10.5 -8 -5 -9.5 -1 -8C2 -7 6 -8.5 9.500 -6.500C12.500 -4.500 12 2 8.500 3.500C5.500 5 3.500 1.500 0 1.500C-3 1.500 -4.500 3.500 -7 2.500C-9.500 1.500 -10.500 0 -10.500 -3Z" fill="#8fc98f" stroke="#4a7a4a" stroke-width="1.100"/><path d="M-1 -11v13c0 3 4 3 2 6s-4 2 -1 4" fill="none" stroke="#333" stroke-width="1.1"/><path d="M-4 -8h6M-4 -5h6M-4 -2h6" stroke="#333" stroke-width="0.9"/></g><g transform="translate(490,116)"><path d="M-2 2l8 -14h5l-6 15z" fill="#888" stroke="#555"/><path d="M-3 3l6 1l-4 4z" fill="#ccc" stroke="#666" stroke-width="0.6"/><rect x="-10" y="7" width="17" height="5" fill="#4a86c6" stroke="#2a5a96"/><path d="M-3 7l2 2.5l2 -2.5" fill="#fff"/></g><g transform="translate(528,116)"><path d="M7 2a8 8 0 1 1 -3 -9" fill="none" stroke="#8fb0e8" stroke-width="2.6"/><path d="M2 -11l6 3l-5 4z" fill="#8fb0e8"/></g><rect x="12.8" y="104.0" width="2.1" height="2.1" fill="#fdfdfd"/><rect x="13.6" y="104.8" width="1.3" height="1.3" fill="#bdbdbd"/><rect x="15.8" y="107.1" width="2.1" height="2.1" fill="#fdfdfd"/><rect x="16.6" y="107.89999999999999" width="1.3" height="1.3" fill="#bdbdbd"/><rect x="12.8" y="110.2" width="2.1" height="2.1" fill="#fdfdfd"/><rect x="13.6" y="111.0" width="1.3" height="1.3" fill="#bdbdbd"/><rect x="15.8" y="113.3" width="2.1" height="2.1" fill="#fdfdfd"/><rect x="16.6" y="114.1" width="1.3" height="1.3" fill="#bdbdbd"/><rect x="12.8" y="116.4" width="2.1" height="2.1" fill="#fdfdfd"/><rect x="13.6" y="117.2" width="1.3" height="1.3" fill="#bdbdbd"/><rect x="15.8" y="119.5" width="2.1" height="2.1" fill="#fdfdfd"/><rect x="16.6" y="120.3" width="1.3" height="1.3" fill="#bdbdbd"/><rect x="12.8" y="122.6" width="2.1" height="2.1" fill="#fdfdfd"/><rect x="13.6" y="123.39999999999999" width="1.3" height="1.3" fill="#bdbdbd"/><rect x="15.8" y="125.7" width="2.1" height="2.1" fill="#fdfdfd"/><rect x="16.6" y="126.5" width="1.3" height="1.3" fill="#bdbdbd"/><rect x="13.0" y="139.8" width="2.1" height="2.1" fill="#fdfdfd"/><rect x="13.8" y="140.6" width="1.3" height="1.3" fill="#bdbdbd"/><rect x="15.9" y="142.8" width="2.1" height="2.1" fill="#fdfdfd"/><rect x="16.7" y="143.6" width="1.3" height="1.3" fill="#bdbdbd"/><rect x="18.8" y="139.8" width="2.1" height="2.1" fill="#fdfdfd"/><rect x="19.6" y="140.6" width="1.3" height="1.3" fill="#bdbdbd"/><rect x="21.7" y="142.8" width="2.1" height="2.1" fill="#fdfdfd"/><rect x="22.5" y="143.6" width="1.3" height="1.3" fill="#bdbdbd"/><rect x="24.6" y="139.8" width="2.1" height="2.1" fill="#fdfdfd"/><rect x="25.400000000000002" y="140.6" width="1.3" height="1.3" fill="#bdbdbd"/><rect x="27.5" y="142.8" width="2.1" height="2.1" fill="#fdfdfd"/><rect x="28.3" y="143.6" width="1.3" height="1.3" fill="#bdbdbd"/><rect x="30.4" y="139.8" width="2.1" height="2.1" fill="#fdfdfd"/><rect x="31.2" y="140.6" width="1.3" height="1.3" fill="#bdbdbd"/><rect x="33.3" y="142.8" width="2.1" height="2.1" fill="#fdfdfd"/><rect x="34.099999999999994" y="143.6" width="1.3" height="1.3" fill="#bdbdbd"/><rect x="36.2" y="139.8" width="2.1" height="2.1" fill="#fdfdfd"/><rect x="37.0" y="140.6" width="1.3" height="1.3" fill="#bdbdbd"/><rect x="39.099999999999994" y="142.8" width="2.1" height="2.1" fill="#fdfdfd"/><rect x="39.89999999999999" y="143.6" width="1.3" height="1.3" fill="#bdbdbd"/><rect x="42.0" y="139.8" width="2.1" height="2.1" fill="#fdfdfd"/><rect x="42.8" y="140.6" width="1.3" height="1.3" fill="#bdbdbd"/><rect x="44.9" y="142.8" width="2.1" height="2.1" fill="#fdfdfd"/><rect x="45.699999999999996" y="143.6" width="1.3" height="1.3" fill="#bdbdbd"/><g transform="translate(29,159.5)"><g transform="translate(0,0) scale(1)" fill="#fff" stroke="#2f4f78" stroke-width="1.3"><path d="M-8 -8l6 15l6 -15h6" fill="none"/><circle cx="-8" cy="-8" r="1.8"/><circle cx="-2" cy="7" r="1.8"/><circle cx="4" cy="-8" r="1.8"/><circle cx="10" cy="-8" r="1.8"/></g><rect x="3" y="4.300" width="9.500" height="9.500" rx="1.600" fill="#5a9a4e" stroke="#3f7a38" stroke-width="0.500"/><path d="M4.900 9.050h5.700M7.750 6.200v5.700" stroke="#fff" stroke-width="2"/></g><g transform="translate(29,197.5)"><rect x="-10" y="-10" width="5" height="5" fill="#2a4a7a"/><rect x="-5" y="-10" width="5" height="5" fill="#6e92c2"/><rect x="0" y="-10" width="5" height="5" fill="#2a4a7a"/><rect x="5" y="-10" width="5" height="5" fill="#dfe8f4"/><rect x="-10" y="-5" width="5" height="5" fill="#6e92c2"/><rect x="-5" y="-5" width="5" height="5" fill="#1e3560"/><rect x="0" y="-5" width="5" height="5" fill="#9ab6dc"/><rect x="5" y="-5" width="5" height="5" fill="#2a4a7a"/><rect x="-10" y="0" width="5" height="5" fill="#2a4a7a"/><rect x="-5" y="0" width="5" height="5" fill="#9ab6dc"/><rect x="0" y="0" width="5" height="5" fill="#2a4a7a"/><rect x="5" y="0" width="5" height="5" fill="#6e92c2"/><rect x="-10" y="5" width="5" height="5" fill="#dfe8f4"/><rect x="-5" y="5" width="5" height="5" fill="#2a4a7a"/><rect x="0" y="5" width="5" height="5" fill="#6e92c2"/><rect x="5" y="5" width="5" height="5" fill="#1e3560"/><rect x="3" y="4.300" width="9.500" height="9.500" rx="1.600" fill="#5a9a4e" stroke="#3f7a38" stroke-width="0.500"/><path d="M4.900 9.050h5.700M7.750 6.200v5.700" stroke="#fff" stroke-width="2"/></g><g transform="translate(29,235.5)"><path d="M-9 -6c0 -5 5 -6 9 -5s7 2 6 7s-2 6 -3 10c-1 3 -4 3 -4 0v-4c-3 1 -7 -2 -8 -8z" fill="#5b8cc4" stroke="#2a4566"/><path d="M-4 -4c0 3 1 5 2 5M1 -5c0 4 0 6 1 8" stroke="#2a4566" fill="none"/><rect x="3" y="4.300" width="9.500" height="9.500" rx="1.600" fill="#5a9a4e" stroke="#3f7a38" stroke-width="0.500"/><path d="M4.900 9.050h5.700M7.750 6.200v5.700" stroke="#fff" stroke-width="2"/></g><g transform="translate(29,274.5)"><path d="M-11 10c4 -8 10 -16 21 -20c-2 6 -6 12 -14 15l-4 2z" fill="#5b8cc4" stroke="#2a4566"/><path d="M-11 10c5 -7 10 -12 18 -17" stroke="#cfe0f4" fill="none"/><rect x="3" y="4.300" width="9.500" height="9.500" rx="1.600" fill="#5a9a4e" stroke="#3f7a38" stroke-width="0.500"/><path d="M4.900 9.050h5.700M7.750 6.200v5.700" stroke="#fff" stroke-width="2"/></g><g transform="translate(29,312.5)"><path d="M-10 -10c8 2 16 6 18 14c-6 3 -13 4 -20 6c5 -6 5 -13 2 -20z" fill="#5b8cc4" stroke="#2a4566"/><path d="M-6 -6c6 3 10 6 13 10M-5 0c5 1 8 3 11 5" stroke="#2a4566" fill="none" stroke-width="0.8"/><rect x="3" y="4.300" width="9.500" height="9.500" rx="1.600" fill="#5a9a4e" stroke="#3f7a38" stroke-width="0.500"/><path d="M4.900 9.050h5.700M7.750 6.200v5.700" stroke="#fff" stroke-width="2"/></g><g transform="translate(29,350.5)"><circle cx="-1" cy="-1" r="10" fill="#9fc0e8" stroke="#3d6a9e"/><path d="M-8 -5c3 -3 6 -1 7 1s-2 5 -5 4zM1 -8c4 0 6 3 5 6s-4 2 -5 -1zM-4 3c3 0 5 2 4 5" fill="#e8f0fa" stroke="none"/><ellipse cx="-1" cy="-1" rx="10" ry="4" fill="none" stroke="#3d6a9e" stroke-width="0.6"/><rect x="3" y="4.300" width="9.500" height="9.500" rx="1.600" fill="#5a9a4e" stroke="#3f7a38" stroke-width="0.500"/><path d="M4.900 9.050h5.700M7.750 6.200v5.700" stroke="#fff" stroke-width="2"/></g><g transform="translate(29,388.5)"><circle cx="-1" cy="-1" r="10" fill="#2f5f9e" stroke="#1e3e6e"/><path d="M-11 -1h20M-9 -6h16M-9 4h16" stroke="#fff" stroke-width="1.6"/><ellipse cx="-1" cy="-1" rx="4.5" ry="10" fill="none" stroke="#fff" stroke-width="1.4"/><rect x="3" y="4.300" width="9.500" height="9.500" rx="1.600" fill="#5a9a4e" stroke="#3f7a38" stroke-width="0.500"/><path d="M4.900 9.050h5.700M7.750 6.200v5.700" stroke="#fff" stroke-width="2"/></g><g transform="translate(29,427.5)"><circle cx="-1" cy="-1" r="10" fill="#e4eefa" stroke="#5b8cc4"/><ellipse cx="-1" cy="-1" rx="4.5" ry="10" fill="none" stroke="#5b8cc4" stroke-width="0.8"/><path d="M-11 -1h20M-9 -6h16M-9 4h16" stroke="#5b8cc4" stroke-width="0.8"/><g transform="translate(-2,-1) scale(0.7)" fill="#fff" stroke="#222" stroke-width="1.3"><path d="M-8 -8l6 15l6 -15h6" fill="none"/><circle cx="-8" cy="-8" r="1.8"/><circle cx="-2" cy="7" r="1.8"/><circle cx="4" cy="-8" r="1.8"/><circle cx="10" cy="-8" r="1.8"/></g><rect x="3" y="4.300" width="9.500" height="9.500" rx="1.600" fill="#5a9a4e" stroke="#3f7a38" stroke-width="0.500"/><path d="M4.900 9.050h5.700M7.750 6.200v5.700" stroke="#fff" stroke-width="2"/></g><g transform="translate(29,465.5)"><path d="M-7 -6a5 5 0 1 1 7 4c0 5 -3 8 -7 9c3 -3 4 -5 3 -8a5 5 0 0 1 -3 -5z" fill="#5b8cc4" stroke="#2a4566"/><rect x="3" y="4.300" width="9.500" height="9.500" rx="1.600" fill="#5a9a4e" stroke="#3f7a38" stroke-width="0.500"/><path d="M4.900 9.050h5.700M7.750 6.200v5.700" stroke="#fff" stroke-width="2"/></g><g transform="translate(29,503.5)"><g transform="translate(0,0) scale(1)" fill="#fff" stroke="#2f4f78" stroke-width="1.3"><path d="M-8 -8l6 15l6 -15h6" fill="none"/><circle cx="-8" cy="-8" r="1.8"/><circle cx="-2" cy="7" r="1.8"/><circle cx="4" cy="-8" r="1.8"/><circle cx="10" cy="-8" r="1.8"/></g><rect x="3" y="4" width="9.500" height="9.500" rx="1.6" fill="#d4a817"/><path d="M4.65 9.25h7.2M8.25 5.65v7.2M5.75 6.75l5 5M10.75 6.75l-5 5" stroke="#fff" stroke-width="1.3"/><path d="M14.300 2h7.600l-3.800 6z" fill="#5a5a5a"/></g><g transform="translate(29,542.5)"><rect x="-10.500" y="-9.500" width="19" height="19" fill="#f1f1f1" stroke="#777"/><rect x="3" y="4.300" width="9.500" height="9.500" rx="1.600" fill="#f05a5a"/><path d="M4.900 9.050h5.700" stroke="#fff" stroke-width="2"/></g><rect x="13.0" y="567.8" width="2.1" height="2.1" fill="#fdfdfd"/><rect x="13.8" y="568.6" width="1.3" height="1.3" fill="#bdbdbd"/><rect x="15.9" y="570.8" width="2.1" height="2.1" fill="#fdfdfd"/><rect x="16.7" y="571.6" width="1.3" height="1.3" fill="#bdbdbd"/><rect x="18.8" y="567.8" width="2.1" height="2.1" fill="#fdfdfd"/><rect x="19.6" y="568.6" width="1.3" height="1.3" fill="#bdbdbd"/><rect x="21.7" y="570.8" width="2.1" height="2.1" fill="#fdfdfd"/><rect x="22.5" y="571.6" width="1.3" height="1.3" fill="#bdbdbd"/><rect x="24.6" y="567.8" width="2.1" height="2.1" fill="#fdfdfd"/><rect x="25.400000000000002" y="568.6" width="1.3" height="1.3" fill="#bdbdbd"/><rect x="27.5" y="570.8" width="2.1" height="2.1" fill="#fdfdfd"/><rect x="28.3" y="571.6" width="1.3" height="1.3" fill="#bdbdbd"/><rect x="30.4" y="567.8" width="2.1" height="2.1" fill="#fdfdfd"/><rect x="31.2" y="568.6" width="1.3" height="1.3" fill="#bdbdbd"/><rect x="33.3" y="570.8" width="2.1" height="2.1" fill="#fdfdfd"/><rect x="34.099999999999994" y="571.6" width="1.3" height="1.3" fill="#bdbdbd"/><rect x="36.2" y="567.8" width="2.1" height="2.1" fill="#fdfdfd"/><rect x="37.0" y="568.6" width="1.3" height="1.3" fill="#bdbdbd"/><rect x="39.099999999999994" y="570.8" width="2.1" height="2.1" fill="#fdfdfd"/><rect x="39.89999999999999" y="571.6" width="1.3" height="1.3" fill="#bdbdbd"/><rect x="42.0" y="567.8" width="2.1" height="2.1" fill="#fdfdfd"/><rect x="42.8" y="568.6" width="1.3" height="1.3" fill="#bdbdbd"/><rect x="44.9" y="570.8" width="2.1" height="2.1" fill="#fdfdfd"/><rect x="45.699999999999996" y="571.6" width="1.3" height="1.3" fill="#bdbdbd"/><circle cx="63" cy="146" r="6.500" fill="#3c3c3c"/><path d="M60.200 143.200l5.600 5.600M65.800 143.200l-5.600 5.600" stroke="#fff" stroke-width="2"/><circle cx="83" cy="146" r="6.500" fill="#3c3c3c"/><rect x="79.700" y="145" width="4.600" height="3.600" fill="none" stroke="#fff" stroke-width="1"/><path d="M81.700 144.800v-1.600h4.800v3.600h-1.800" fill="none" stroke="#fff" stroke-width="1"/><g transform="translate(1158,1161.500)"><path d="M-4-5c4-2 7 1 6 4s-4 4-6 2s-2-4 0-6zM-1-3l5 8M3-5l-6 9" stroke="#222" stroke-width="1.300" fill="none"/><circle cx="2" cy="3" r="2.500" fill="#444"/></g><g transform="translate(1719,1161.500)"><path d="M-6 7c5-1 9-6 11-13c-6 3-10 7-11 13z" fill="#9aa" stroke="#555" stroke-width="0.800"/><circle cx="-2" cy="-3" r="4" fill="none" stroke="#e02020" stroke-width="1.500"/><path d="M-5-0.500l6-5" stroke="#e02020" stroke-width="1.500"/></g><path d="M1738.500 1161.500l3.500 5.500l7-13.500" fill="none" stroke="#111" stroke-width="2.300"/><g transform="translate(1889,1161.500)" fill="none" stroke="#8a8a8a"><circle r="6.500" stroke-width="1.600"/><ellipse rx="3" ry="6.500"/><path d="M-6.500 0h13M0-6.500v13"/><rect x="-2.500" y="-2.500" width="5" height="5" fill="#eee"/></g><path d="M1913 1176l11-11M1917 1176l7-7M1921 1176l3-3" stroke="#8c8c8c" stroke-width="1"/><path d="M1692.500 1161.500h5l-2.500 4z" fill="#555"/></svg>
</body></html>
